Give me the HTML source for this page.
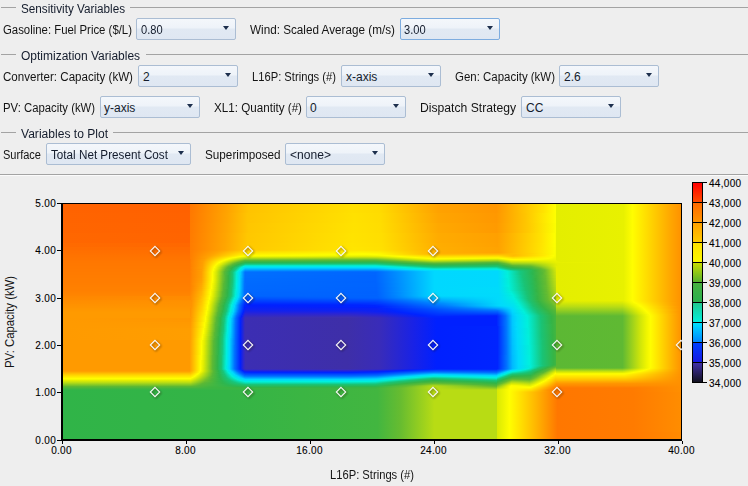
<!DOCTYPE html><html><head><meta charset="utf-8"><style>
html,body{margin:0;padding:0;width:748px;height:486px;overflow:hidden;background:#eeeeee;font-family:"Liberation Sans", sans-serif;}
.lb{position:absolute;white-space:nowrap;line-height:14px;transform-origin:0 0;}
.gl{position:absolute;height:1px;background:#a3a3a3;}
.cb{position:absolute;box-sizing:border-box;border:1px solid #abbdd3;border-radius:2px;background:linear-gradient(#f4f7fb 0%,#eef3f9 45%,#e1e9f3 50%,#dfe7f2 100%);}
.cb.focus{border-color:#7dacdf;}
.arr{position:absolute;width:0;height:0;border-left:3.5px solid transparent;border-right:3.5px solid transparent;border-top:4.5px solid #1d2f4d;}
.tk{position:absolute;background:#000;}
.tl{position:absolute;white-space:nowrap;font-size:10px;line-height:12px;color:#000;-webkit-text-stroke:0.1px #000;}

</style></head><body>
<div class="gl" style="left:1px;top:7px;width:15px"></div>
<div class="gl" style="left:130px;top:7px;width:618px"></div>
<div class="lb" style="transform:scaleX(0.977);left:21px;top:2px;font-size:12px;color:#141c2c">Sensitivity Variables</div>
<div class="gl" style="left:1px;top:54px;width:15px"></div>
<div class="gl" style="left:146px;top:54px;width:602px"></div>
<div class="lb" style="transform:scaleX(0.999);left:21px;top:49px;font-size:12px;color:#141c2c">Optimization Variables</div>
<div class="gl" style="left:1px;top:132px;width:15px"></div>
<div class="gl" style="left:113px;top:132px;width:635px"></div>
<div class="lb" style="transform:scaleX(1.006);left:21px;top:127px;font-size:12px;color:#141c2c">Variables to Plot</div>
<div class="gl" style="left:0;top:174px;width:748px"></div>
<div style="position:absolute;left:0;top:175px;width:748px;height:1px;background:#fbfbfb"></div>
<div class="lb" style="transform:scaleX(0.948);left:3px;top:23px;font-size:12px;color:#141414">Gasoline: Fuel Price ($/L)</div>
<div class="cb" style="left:136px;top:18px;width:100px;height:22px"></div>
<div class="arr" style="left:223px;top:26px"></div>
<div class="lb" style="transform:scaleX(0.925);left:141px;top:23px;font-size:12px;color:#141c2c">0.80</div>
<div class="lb" style="transform:scaleX(0.976);left:250px;top:23px;font-size:12px;color:#141414">Wind: Scaled Average (m/s)</div>
<div class="cb focus" style="left:400px;top:18px;width:100px;height:22px"></div>
<div class="arr" style="left:487px;top:26px"></div>
<div class="lb" style="transform:scaleX(0.925);left:404px;top:23px;font-size:12px;color:#141c2c">3.00</div>
<div class="lb" style="transform:scaleX(0.965);left:3px;top:70px;font-size:12px;color:#141414">Converter: Capacity (kW)</div>
<div class="cb" style="left:138px;top:65px;width:100px;height:22px"></div>
<div class="arr" style="left:225px;top:73px"></div>
<div class="lb" style="left:143px;top:70px;font-size:12px;color:#141c2c">2</div>
<div class="lb" style="transform:scaleX(0.933);left:252px;top:70px;font-size:12px;color:#141414">L16P: Strings (#)</div>
<div class="cb" style="left:341px;top:65px;width:100px;height:22px"></div>
<div class="arr" style="left:428px;top:73px"></div>
<div class="lb" style="left:346px;top:70px;font-size:12px;color:#141c2c">x-axis</div>
<div class="lb" style="transform:scaleX(0.955);left:455px;top:70px;font-size:12px;color:#141414">Gen: Capacity (kW)</div>
<div class="cb" style="left:559px;top:65px;width:100px;height:22px"></div>
<div class="arr" style="left:646px;top:73px"></div>
<div class="lb" style="left:564px;top:70px;font-size:12px;color:#141c2c">2.6</div>
<div class="lb" style="transform:scaleX(0.943);left:3px;top:101px;font-size:12px;color:#141414">PV: Capacity (kW)</div>
<div class="cb" style="left:100px;top:96px;width:100px;height:22px"></div>
<div class="arr" style="left:187px;top:104px"></div>
<div class="lb" style="left:104px;top:101px;font-size:12px;color:#141c2c">y-axis</div>
<div class="lb" style="transform:scaleX(0.970);left:214px;top:101px;font-size:12px;color:#141414">XL1: Quantity (#)</div>
<div class="cb" style="left:306px;top:96px;width:100px;height:22px"></div>
<div class="arr" style="left:393px;top:104px"></div>
<div class="lb" style="left:310px;top:101px;font-size:12px;color:#141c2c">0</div>
<div class="lb" style="transform:scaleX(1.014);left:420px;top:101px;font-size:12px;color:#141414">Dispatch Strategy</div>
<div class="cb" style="left:521px;top:96px;width:100px;height:22px"></div>
<div class="arr" style="left:608px;top:104px"></div>
<div class="lb" style="left:526px;top:101px;font-size:12px;color:#141c2c">CC</div>
<div class="lb" style="transform:scaleX(0.919);left:3px;top:148px;font-size:12px;color:#141414">Surface</div>
<div class="cb" style="left:46px;top:143px;width:145px;height:22px"></div>
<div class="arr" style="left:178px;top:151px"></div>
<div class="lb" style="transform:scaleX(0.974);left:51px;top:148px;font-size:12px;color:#141c2c">Total Net Present Cost</div>
<div class="lb" style="transform:scaleX(0.977);left:205px;top:148px;font-size:12px;color:#141414">Superimposed</div>
<div class="cb" style="left:285px;top:143px;width:100px;height:22px"></div>
<div class="arr" style="left:372px;top:151px"></div>
<div class="lb" style="transform:scaleX(1.007);left:290px;top:148px;font-size:12px;color:#141c2c">&lt;none&gt;</div>
<svg style="position:absolute;left:61px;top:203px" width="621" height="238" shape-rendering="crispEdges"><defs><linearGradient id="g0" gradientUnits="objectBoundingBox"><stop offset="0.0008" stop-color="#ff6300"/><stop offset="0.2069" stop-color="#ff6100"/><stop offset="0.2085" stop-color="#ff7800"/><stop offset="0.2697" stop-color="#ffa500"/><stop offset="0.3019" stop-color="#ffc300"/><stop offset="0.4694" stop-color="#ffdf00"/><stop offset="0.5129" stop-color="#ffdb00"/><stop offset="0.6079" stop-color="#ffa200"/><stop offset="0.7013" stop-color="#ff9600"/><stop offset="0.7351" stop-color="#ffb900"/><stop offset="0.7770" stop-color="#ffe300"/><stop offset="0.7963" stop-color="#fffe00"/><stop offset="0.7979" stop-color="#e4ee00"/><stop offset="0.9058" stop-color="#e8f100"/><stop offset="0.9203" stop-color="#fffd00"/><stop offset="0.9815" stop-color="#ffa700"/><stop offset="0.9992" stop-color="#ff9100"/></linearGradient><linearGradient id="g1" gradientUnits="objectBoundingBox"><stop offset="0.0008" stop-color="#ff6400"/><stop offset="0.2069" stop-color="#ff6200"/><stop offset="0.2085" stop-color="#ff7900"/><stop offset="0.2681" stop-color="#ffa500"/><stop offset="0.3003" stop-color="#ffc400"/><stop offset="0.4726" stop-color="#ffe100"/><stop offset="0.5145" stop-color="#ffdc00"/><stop offset="0.6079" stop-color="#ffa500"/><stop offset="0.7013" stop-color="#ff9800"/><stop offset="0.7480" stop-color="#ffc500"/><stop offset="0.7963" stop-color="#fefe00"/><stop offset="0.7979" stop-color="#e4ee00"/><stop offset="0.9058" stop-color="#e8f100"/><stop offset="0.9203" stop-color="#fffd00"/><stop offset="0.9815" stop-color="#ffa700"/><stop offset="0.9992" stop-color="#ff9100"/></linearGradient><linearGradient id="g2" gradientUnits="objectBoundingBox"><stop offset="0.0008" stop-color="#ff6500"/><stop offset="0.2069" stop-color="#ff6300"/><stop offset="0.2085" stop-color="#ff7a00"/><stop offset="0.2665" stop-color="#ffa500"/><stop offset="0.3019" stop-color="#ffc600"/><stop offset="0.4710" stop-color="#ffe200"/><stop offset="0.5145" stop-color="#ffdd00"/><stop offset="0.6079" stop-color="#ffa800"/><stop offset="0.7013" stop-color="#ff9a00"/><stop offset="0.7528" stop-color="#ffca00"/><stop offset="0.7963" stop-color="#fcfd00"/><stop offset="0.7979" stop-color="#e4ee00"/><stop offset="0.9058" stop-color="#e8f100"/><stop offset="0.9203" stop-color="#fffd00"/><stop offset="0.9815" stop-color="#ffa700"/><stop offset="0.9992" stop-color="#ff9100"/></linearGradient><linearGradient id="g3" gradientUnits="objectBoundingBox"><stop offset="0.0008" stop-color="#ff6700"/><stop offset="0.2069" stop-color="#ff6400"/><stop offset="0.2085" stop-color="#ff7b00"/><stop offset="0.2649" stop-color="#ffa500"/><stop offset="0.3003" stop-color="#ffc700"/><stop offset="0.4694" stop-color="#ffe300"/><stop offset="0.5161" stop-color="#ffde00"/><stop offset="0.6079" stop-color="#ffab00"/><stop offset="0.7029" stop-color="#ffa000"/><stop offset="0.7738" stop-color="#ffe300"/><stop offset="0.7947" stop-color="#fefe00"/><stop offset="0.7963" stop-color="#fbfc00"/><stop offset="0.7979" stop-color="#e4ee00"/><stop offset="0.9058" stop-color="#e8f100"/><stop offset="0.9203" stop-color="#fffd00"/><stop offset="0.9815" stop-color="#ffa700"/><stop offset="0.9992" stop-color="#ff9100"/></linearGradient><linearGradient id="g4" gradientUnits="objectBoundingBox"><stop offset="0.0008" stop-color="#ff6a00"/><stop offset="0.2069" stop-color="#ff6800"/><stop offset="0.2085" stop-color="#ff7c00"/><stop offset="0.2649" stop-color="#ffa600"/><stop offset="0.3003" stop-color="#ffc800"/><stop offset="0.4694" stop-color="#ffe400"/><stop offset="0.5161" stop-color="#ffdf00"/><stop offset="0.6079" stop-color="#ffad00"/><stop offset="0.7029" stop-color="#ffa100"/><stop offset="0.7738" stop-color="#ffe400"/><stop offset="0.7947" stop-color="#fdfe00"/><stop offset="0.7963" stop-color="#fafc00"/><stop offset="0.7979" stop-color="#e4ee00"/><stop offset="0.9058" stop-color="#e8f100"/><stop offset="0.9203" stop-color="#fffd00"/><stop offset="0.9815" stop-color="#ffa700"/><stop offset="0.9992" stop-color="#ff9100"/></linearGradient><linearGradient id="g5" gradientUnits="objectBoundingBox"><stop offset="0.0008" stop-color="#ff6d00"/><stop offset="0.2069" stop-color="#ff6c00"/><stop offset="0.2085" stop-color="#ff7c00"/><stop offset="0.2633" stop-color="#ffa500"/><stop offset="0.3003" stop-color="#ffc900"/><stop offset="0.4726" stop-color="#ffe500"/><stop offset="0.5161" stop-color="#ffe000"/><stop offset="0.6079" stop-color="#ffae00"/><stop offset="0.7045" stop-color="#ffa300"/><stop offset="0.7721" stop-color="#ffe300"/><stop offset="0.7947" stop-color="#fcfd00"/><stop offset="0.7963" stop-color="#f9fb00"/><stop offset="0.7979" stop-color="#e4ee00"/><stop offset="0.9058" stop-color="#e8f100"/><stop offset="0.9203" stop-color="#fffd00"/><stop offset="0.9815" stop-color="#ffa700"/><stop offset="0.9992" stop-color="#ff9100"/></linearGradient><linearGradient id="g6" gradientUnits="objectBoundingBox"><stop offset="0.0008" stop-color="#ff6f00"/><stop offset="0.2069" stop-color="#ff6e00"/><stop offset="0.2085" stop-color="#ff7d00"/><stop offset="0.2601" stop-color="#ffa500"/><stop offset="0.3003" stop-color="#ffce00"/><stop offset="0.4710" stop-color="#ffe800"/><stop offset="0.5161" stop-color="#ffe300"/><stop offset="0.6079" stop-color="#ffaf00"/><stop offset="0.7045" stop-color="#ffa400"/><stop offset="0.7721" stop-color="#ffe300"/><stop offset="0.7947" stop-color="#fcfd00"/><stop offset="0.7963" stop-color="#f9fb00"/><stop offset="0.7979" stop-color="#e4ee00"/><stop offset="0.9058" stop-color="#e8f100"/><stop offset="0.9203" stop-color="#fffd00"/><stop offset="0.9815" stop-color="#ffa700"/><stop offset="0.9992" stop-color="#ff9100"/></linearGradient><linearGradient id="g7" gradientUnits="objectBoundingBox"><stop offset="0.0008" stop-color="#ff7000"/><stop offset="0.2069" stop-color="#ff6e00"/><stop offset="0.2085" stop-color="#ff7d00"/><stop offset="0.2552" stop-color="#ffa500"/><stop offset="0.3003" stop-color="#ffd900"/><stop offset="0.4807" stop-color="#ffef00"/><stop offset="0.5129" stop-color="#ffea00"/><stop offset="0.6079" stop-color="#ffaf00"/><stop offset="0.7045" stop-color="#ffa400"/><stop offset="0.7738" stop-color="#ffe500"/><stop offset="0.7947" stop-color="#fcfd00"/><stop offset="0.7963" stop-color="#f8fb00"/><stop offset="0.7979" stop-color="#e4ee00"/><stop offset="0.9058" stop-color="#e8f100"/><stop offset="0.9203" stop-color="#fffd00"/><stop offset="0.9815" stop-color="#ffa700"/><stop offset="0.9992" stop-color="#ff9100"/></linearGradient><linearGradient id="g8" gradientUnits="objectBoundingBox"><stop offset="0.0008" stop-color="#ff7000"/><stop offset="0.2069" stop-color="#ff6f00"/><stop offset="0.2085" stop-color="#ff7d00"/><stop offset="0.2520" stop-color="#ffa600"/><stop offset="0.2987" stop-color="#ffe100"/><stop offset="0.4807" stop-color="#fff500"/><stop offset="0.5129" stop-color="#fff000"/><stop offset="0.6047" stop-color="#ffb000"/><stop offset="0.7045" stop-color="#ffa400"/><stop offset="0.7738" stop-color="#ffe500"/><stop offset="0.7947" stop-color="#fcfd00"/><stop offset="0.7963" stop-color="#f8fb00"/><stop offset="0.7979" stop-color="#e4ee00"/><stop offset="0.9058" stop-color="#e8f100"/><stop offset="0.9203" stop-color="#fffd00"/><stop offset="0.9815" stop-color="#ffa700"/><stop offset="0.9992" stop-color="#ff9100"/></linearGradient><linearGradient id="g9" gradientUnits="objectBoundingBox"><stop offset="0.0008" stop-color="#ff7100"/><stop offset="0.2069" stop-color="#ff7000"/><stop offset="0.2085" stop-color="#ff7e00"/><stop offset="0.2472" stop-color="#ffa400"/><stop offset="0.2971" stop-color="#ffe900"/><stop offset="0.4887" stop-color="#fffc00"/><stop offset="0.5129" stop-color="#fff600"/><stop offset="0.6031" stop-color="#ffb100"/><stop offset="0.7077" stop-color="#ffaf00"/><stop offset="0.7576" stop-color="#ffd300"/><stop offset="0.7947" stop-color="#fbfd00"/><stop offset="0.7963" stop-color="#f8fb00"/><stop offset="0.7979" stop-color="#e4ee00"/><stop offset="0.9058" stop-color="#e8f100"/><stop offset="0.9203" stop-color="#fffd00"/><stop offset="0.9815" stop-color="#ffa700"/><stop offset="0.9992" stop-color="#ff9100"/></linearGradient><linearGradient id="g10" gradientUnits="objectBoundingBox"><stop offset="0.0008" stop-color="#ff7200"/><stop offset="0.2069" stop-color="#ff7100"/><stop offset="0.2085" stop-color="#ff7e00"/><stop offset="0.2456" stop-color="#ffa600"/><stop offset="0.2971" stop-color="#fff200"/><stop offset="0.4404" stop-color="#fcfd00"/><stop offset="0.5081" stop-color="#fdfe00"/><stop offset="0.5934" stop-color="#ffbf00"/><stop offset="0.6127" stop-color="#ffbb00"/><stop offset="0.7126" stop-color="#ffbd00"/><stop offset="0.7319" stop-color="#ffbd00"/><stop offset="0.7802" stop-color="#ffec00"/><stop offset="0.7947" stop-color="#fbfd00"/><stop offset="0.7963" stop-color="#f8fb00"/><stop offset="0.7979" stop-color="#e4ee00"/><stop offset="0.9058" stop-color="#e8f100"/><stop offset="0.9203" stop-color="#fffd00"/><stop offset="0.9815" stop-color="#ffa700"/><stop offset="0.9992" stop-color="#ff9100"/></linearGradient><linearGradient id="g11" gradientUnits="objectBoundingBox"><stop offset="0.0008" stop-color="#ff7300"/><stop offset="0.2069" stop-color="#ff7200"/><stop offset="0.2085" stop-color="#ff7e00"/><stop offset="0.2424" stop-color="#ffa500"/><stop offset="0.2955" stop-color="#fffa00"/><stop offset="0.3824" stop-color="#fafc00"/><stop offset="0.4936" stop-color="#f1f600"/><stop offset="0.5113" stop-color="#f6fa00"/><stop offset="0.5258" stop-color="#fffc00"/><stop offset="0.6047" stop-color="#ffcb00"/><stop offset="0.7045" stop-color="#ffd100"/><stop offset="0.7287" stop-color="#ffbb00"/><stop offset="0.7754" stop-color="#ffe700"/><stop offset="0.7931" stop-color="#feff00"/><stop offset="0.7963" stop-color="#f8fa00"/><stop offset="0.7979" stop-color="#e4ee00"/><stop offset="0.9058" stop-color="#e8f100"/><stop offset="0.9203" stop-color="#fffd00"/><stop offset="0.9815" stop-color="#ffa700"/><stop offset="0.9992" stop-color="#ff9100"/></linearGradient><linearGradient id="g12" gradientUnits="objectBoundingBox"><stop offset="0.0008" stop-color="#ff7300"/><stop offset="0.2069" stop-color="#ff7300"/><stop offset="0.2085" stop-color="#ff7e00"/><stop offset="0.2391" stop-color="#ffa500"/><stop offset="0.2890" stop-color="#fffe00"/><stop offset="0.3003" stop-color="#f0f600"/><stop offset="0.4919" stop-color="#deec03"/><stop offset="0.5113" stop-color="#e4ee00"/><stop offset="0.5451" stop-color="#fffd00"/><stop offset="0.6047" stop-color="#ffdc00"/><stop offset="0.7045" stop-color="#ffe300"/><stop offset="0.7271" stop-color="#ffc300"/><stop offset="0.7834" stop-color="#fff400"/><stop offset="0.7931" stop-color="#fcfd00"/><stop offset="0.7963" stop-color="#f6fa00"/><stop offset="0.7979" stop-color="#e4ee00"/><stop offset="0.9058" stop-color="#e8f100"/><stop offset="0.9203" stop-color="#fffd00"/><stop offset="0.9815" stop-color="#ffa700"/><stop offset="0.9992" stop-color="#ff9100"/></linearGradient><linearGradient id="g13" gradientUnits="objectBoundingBox"><stop offset="0.0008" stop-color="#ff7400"/><stop offset="0.2069" stop-color="#ff7400"/><stop offset="0.2085" stop-color="#ff7f00"/><stop offset="0.2343" stop-color="#ffa000"/><stop offset="0.2762" stop-color="#fff800"/><stop offset="0.2810" stop-color="#fcfd00"/><stop offset="0.2939" stop-color="#d8e905"/><stop offset="0.3019" stop-color="#d0e609"/><stop offset="0.4903" stop-color="#bdde12"/><stop offset="0.5097" stop-color="#c2e00f"/><stop offset="0.5483" stop-color="#edf400"/><stop offset="0.5709" stop-color="#fffd00"/><stop offset="0.6047" stop-color="#ffea00"/><stop offset="0.7045" stop-color="#fff300"/><stop offset="0.7287" stop-color="#ffd800"/><stop offset="0.7899" stop-color="#fcfd00"/><stop offset="0.7963" stop-color="#f4f800"/><stop offset="0.7979" stop-color="#e4ee00"/><stop offset="0.9058" stop-color="#e8f100"/><stop offset="0.9203" stop-color="#fffd00"/><stop offset="0.9815" stop-color="#ffa700"/><stop offset="0.9992" stop-color="#ff9100"/></linearGradient><linearGradient id="g14" gradientUnits="objectBoundingBox"><stop offset="0.0008" stop-color="#ff7500"/><stop offset="0.2069" stop-color="#ff7400"/><stop offset="0.2085" stop-color="#ff7f00"/><stop offset="0.2311" stop-color="#ff9c00"/><stop offset="0.2713" stop-color="#fffd00"/><stop offset="0.2842" stop-color="#daea05"/><stop offset="0.2971" stop-color="#acd718"/><stop offset="0.4807" stop-color="#97cf1f"/><stop offset="0.5081" stop-color="#9bd11e"/><stop offset="0.5676" stop-color="#e9f100"/><stop offset="0.5918" stop-color="#fffd00"/><stop offset="0.6111" stop-color="#fffa00"/><stop offset="0.6626" stop-color="#fafc00"/><stop offset="0.7029" stop-color="#f2f700"/><stop offset="0.7110" stop-color="#fffd00"/><stop offset="0.7287" stop-color="#ffe800"/><stop offset="0.7850" stop-color="#fbfd00"/><stop offset="0.7963" stop-color="#f1f600"/><stop offset="0.7979" stop-color="#e4ee00"/><stop offset="0.9058" stop-color="#e8f100"/><stop offset="0.9203" stop-color="#fffd00"/><stop offset="0.9815" stop-color="#ffa700"/><stop offset="0.9992" stop-color="#ff9100"/></linearGradient><linearGradient id="g15" gradientUnits="objectBoundingBox"><stop offset="0.0008" stop-color="#ff7500"/><stop offset="0.2069" stop-color="#ff7500"/><stop offset="0.2101" stop-color="#ff8100"/><stop offset="0.2311" stop-color="#ffa000"/><stop offset="0.2649" stop-color="#fffb00"/><stop offset="0.2681" stop-color="#fafc00"/><stop offset="0.2778" stop-color="#d7e906"/><stop offset="0.2971" stop-color="#82c727"/><stop offset="0.4855" stop-color="#70c02d"/><stop offset="0.5081" stop-color="#73c12c"/><stop offset="0.5757" stop-color="#d5e807"/><stop offset="0.6014" stop-color="#eff500"/><stop offset="0.6916" stop-color="#d2e708"/><stop offset="0.7029" stop-color="#d0e609"/><stop offset="0.7174" stop-color="#f5f900"/><stop offset="0.7238" stop-color="#fffc00"/><stop offset="0.7383" stop-color="#fffb00"/><stop offset="0.7721" stop-color="#f8fb00"/><stop offset="0.7963" stop-color="#eef500"/><stop offset="0.7979" stop-color="#e4ee00"/><stop offset="0.9058" stop-color="#e8f100"/><stop offset="0.9203" stop-color="#fffd00"/><stop offset="0.9815" stop-color="#ffa700"/><stop offset="0.9992" stop-color="#ff9100"/></linearGradient><linearGradient id="g16" gradientUnits="objectBoundingBox"><stop offset="0.0008" stop-color="#ff7600"/><stop offset="0.2069" stop-color="#ff7600"/><stop offset="0.2101" stop-color="#ff8200"/><stop offset="0.2295" stop-color="#ff9e00"/><stop offset="0.2601" stop-color="#fffa00"/><stop offset="0.2633" stop-color="#fafc00"/><stop offset="0.2713" stop-color="#daea05"/><stop offset="0.2890" stop-color="#80c627"/><stop offset="0.2955" stop-color="#5db834"/><stop offset="0.5048" stop-color="#51b739"/><stop offset="0.5306" stop-color="#6dbf2e"/><stop offset="0.5982" stop-color="#cde50a"/><stop offset="0.7029" stop-color="#aad619"/><stop offset="0.7238" stop-color="#ecf300"/><stop offset="0.7319" stop-color="#f1f600"/><stop offset="0.7754" stop-color="#ebf300"/><stop offset="0.7963" stop-color="#ecf300"/><stop offset="0.7995" stop-color="#e4ee00"/><stop offset="0.9058" stop-color="#e8f100"/><stop offset="0.9203" stop-color="#fffd00"/><stop offset="0.9815" stop-color="#ffa700"/><stop offset="0.9992" stop-color="#ff9100"/></linearGradient><linearGradient id="g17" gradientUnits="objectBoundingBox"><stop offset="0.0008" stop-color="#ff7700"/><stop offset="0.2069" stop-color="#ff7700"/><stop offset="0.2101" stop-color="#ff8200"/><stop offset="0.2295" stop-color="#ffa100"/><stop offset="0.2552" stop-color="#fff700"/><stop offset="0.2585" stop-color="#fdfe00"/><stop offset="0.2665" stop-color="#dbea04"/><stop offset="0.2907" stop-color="#56b737"/><stop offset="0.2971" stop-color="#43b63f"/><stop offset="0.5081" stop-color="#3db542"/><stop offset="0.5531" stop-color="#65bb31"/><stop offset="0.5998" stop-color="#a6d51a"/><stop offset="0.7029" stop-color="#7ec528"/><stop offset="0.7254" stop-color="#d7e906"/><stop offset="0.7641" stop-color="#d9ea05"/><stop offset="0.7963" stop-color="#e9f100"/><stop offset="0.8043" stop-color="#e4ee00"/><stop offset="0.9058" stop-color="#e8f100"/><stop offset="0.9203" stop-color="#fffd00"/><stop offset="0.9815" stop-color="#ffa700"/><stop offset="0.9992" stop-color="#ff9100"/></linearGradient><linearGradient id="g18" gradientUnits="objectBoundingBox"><stop offset="0.0008" stop-color="#ff7700"/><stop offset="0.2069" stop-color="#ff7700"/><stop offset="0.2101" stop-color="#ff8300"/><stop offset="0.2279" stop-color="#ff9d00"/><stop offset="0.2536" stop-color="#fffa00"/><stop offset="0.2552" stop-color="#ffff00"/><stop offset="0.2633" stop-color="#d9e905"/><stop offset="0.2842" stop-color="#59b835"/><stop offset="0.2971" stop-color="#2eb54c"/><stop offset="0.5064" stop-color="#2ab854"/><stop offset="0.5354" stop-color="#3db542"/><stop offset="0.5821" stop-color="#64bb31"/><stop offset="0.6014" stop-color="#7ac42a"/><stop offset="0.6965" stop-color="#56b737"/><stop offset="0.7045" stop-color="#5bb834"/><stop offset="0.7254" stop-color="#bbdd13"/><stop offset="0.7609" stop-color="#c3e10f"/><stop offset="0.7963" stop-color="#e7f000"/><stop offset="0.9058" stop-color="#e8f100"/><stop offset="0.9203" stop-color="#fffd00"/><stop offset="0.9815" stop-color="#ffa700"/><stop offset="0.9992" stop-color="#ff9100"/></linearGradient><linearGradient id="g19" gradientUnits="objectBoundingBox"><stop offset="0.0008" stop-color="#ff7800"/><stop offset="0.2069" stop-color="#ff7800"/><stop offset="0.2101" stop-color="#ff8300"/><stop offset="0.2279" stop-color="#ff9e00"/><stop offset="0.2520" stop-color="#fffc00"/><stop offset="0.2568" stop-color="#edf300"/><stop offset="0.2713" stop-color="#93cd21"/><stop offset="0.2794" stop-color="#5bb834"/><stop offset="0.2907" stop-color="#2fb54a"/><stop offset="0.2971" stop-color="#21be67"/><stop offset="0.5081" stop-color="#1ec06b"/><stop offset="0.5548" stop-color="#36b545"/><stop offset="0.6031" stop-color="#54b738"/><stop offset="0.7029" stop-color="#3fb541"/><stop offset="0.7142" stop-color="#60ba32"/><stop offset="0.7271" stop-color="#9ed21d"/><stop offset="0.7576" stop-color="#a8d61a"/><stop offset="0.7979" stop-color="#e4ee00"/><stop offset="0.9058" stop-color="#e8f100"/><stop offset="0.9203" stop-color="#fffd00"/><stop offset="0.9815" stop-color="#ffa700"/><stop offset="0.9992" stop-color="#ff9100"/></linearGradient><linearGradient id="g20" gradientUnits="objectBoundingBox"><stop offset="0.0008" stop-color="#ff7800"/><stop offset="0.2069" stop-color="#ff7800"/><stop offset="0.2101" stop-color="#ff8300"/><stop offset="0.2279" stop-color="#ff9f00"/><stop offset="0.2504" stop-color="#fffc00"/><stop offset="0.2585" stop-color="#d7e906"/><stop offset="0.2762" stop-color="#59b835"/><stop offset="0.2858" stop-color="#30b448"/><stop offset="0.2939" stop-color="#1ac374"/><stop offset="0.2971" stop-color="#13cd8c"/><stop offset="0.5064" stop-color="#11d195"/><stop offset="0.5274" stop-color="#1ac374"/><stop offset="0.5886" stop-color="#36b545"/><stop offset="0.6079" stop-color="#3bb543"/><stop offset="0.7029" stop-color="#2db64f"/><stop offset="0.7206" stop-color="#5fb933"/><stop offset="0.7271" stop-color="#7dc529"/><stop offset="0.7560" stop-color="#8aca24"/><stop offset="0.7995" stop-color="#e4ee00"/><stop offset="0.9058" stop-color="#e8f100"/><stop offset="0.9203" stop-color="#fffd00"/><stop offset="0.9815" stop-color="#ffa700"/><stop offset="0.9992" stop-color="#ff9100"/></linearGradient><linearGradient id="g21" gradientUnits="objectBoundingBox"><stop offset="0.0008" stop-color="#ff7800"/><stop offset="0.2069" stop-color="#ff7800"/><stop offset="0.2101" stop-color="#ff8300"/><stop offset="0.2279" stop-color="#ff9f00"/><stop offset="0.2488" stop-color="#fffc00"/><stop offset="0.2552" stop-color="#deec03"/><stop offset="0.2697" stop-color="#70c02d"/><stop offset="0.2762" stop-color="#4ab63c"/><stop offset="0.2826" stop-color="#2eb54c"/><stop offset="0.2907" stop-color="#16c77f"/><stop offset="0.2955" stop-color="#08e1ba"/><stop offset="0.2971" stop-color="#06e5c4"/><stop offset="0.5064" stop-color="#05e7c9"/><stop offset="0.5580" stop-color="#1ac375"/><stop offset="0.6031" stop-color="#2ab854"/><stop offset="0.7029" stop-color="#23bd62"/><stop offset="0.7126" stop-color="#36b545"/><stop offset="0.7287" stop-color="#5db834"/><stop offset="0.7560" stop-color="#6fc02d"/><stop offset="0.7963" stop-color="#deeb03"/><stop offset="0.8011" stop-color="#e4ee00"/><stop offset="0.9058" stop-color="#e8f100"/><stop offset="0.9203" stop-color="#fffd00"/><stop offset="0.9815" stop-color="#ffa700"/><stop offset="0.9992" stop-color="#ff9100"/></linearGradient><linearGradient id="g22" gradientUnits="objectBoundingBox"><stop offset="0.0008" stop-color="#ff7900"/><stop offset="0.2069" stop-color="#ff7900"/><stop offset="0.2118" stop-color="#ff8600"/><stop offset="0.2279" stop-color="#ffa000"/><stop offset="0.2472" stop-color="#fffb00"/><stop offset="0.2504" stop-color="#f1f600"/><stop offset="0.2568" stop-color="#c6e20e"/><stop offset="0.2697" stop-color="#5bb835"/><stop offset="0.2794" stop-color="#2db64d"/><stop offset="0.2858" stop-color="#19c376"/><stop offset="0.2939" stop-color="#00f0dc"/><stop offset="0.2971" stop-color="#00e6ea"/><stop offset="0.5113" stop-color="#00e9e7"/><stop offset="0.5274" stop-color="#01eed8"/><stop offset="0.5853" stop-color="#19c375"/><stop offset="0.6047" stop-color="#1fbf6a"/><stop offset="0.7029" stop-color="#19c375"/><stop offset="0.7174" stop-color="#32b447"/><stop offset="0.7287" stop-color="#4ab63c"/><stop offset="0.7576" stop-color="#5bb835"/><stop offset="0.7834" stop-color="#aed818"/><stop offset="0.7979" stop-color="#e4ee00"/><stop offset="0.9058" stop-color="#e8f100"/><stop offset="0.9203" stop-color="#fffd00"/><stop offset="0.9815" stop-color="#ffa700"/><stop offset="0.9992" stop-color="#ff9100"/></linearGradient><linearGradient id="g23" gradientUnits="objectBoundingBox"><stop offset="0.0008" stop-color="#ff7900"/><stop offset="0.2069" stop-color="#ff7900"/><stop offset="0.2101" stop-color="#ff8400"/><stop offset="0.2279" stop-color="#ffa100"/><stop offset="0.2456" stop-color="#fff800"/><stop offset="0.2472" stop-color="#feff00"/><stop offset="0.2536" stop-color="#d4e707"/><stop offset="0.2681" stop-color="#59b835"/><stop offset="0.2762" stop-color="#31b448"/><stop offset="0.2842" stop-color="#16c881"/><stop offset="0.2907" stop-color="#01efd9"/><stop offset="0.2955" stop-color="#00ddf8"/><stop offset="0.4163" stop-color="#00d9fd"/><stop offset="0.5113" stop-color="#00dcf9"/><stop offset="0.5531" stop-color="#01eed7"/><stop offset="0.5998" stop-color="#14cb89"/><stop offset="0.7013" stop-color="#0ed6a0"/><stop offset="0.7061" stop-color="#15ca86"/><stop offset="0.7126" stop-color="#1fbf6a"/><stop offset="0.7254" stop-color="#34b446"/><stop offset="0.7576" stop-color="#4cb73b"/><stop offset="0.7689" stop-color="#69bd30"/><stop offset="0.7850" stop-color="#a9d619"/><stop offset="0.7963" stop-color="#d7e906"/><stop offset="0.7979" stop-color="#e4ee00"/><stop offset="0.9058" stop-color="#e8f100"/><stop offset="0.9203" stop-color="#fffd00"/><stop offset="0.9815" stop-color="#ffa700"/><stop offset="0.9992" stop-color="#ff9100"/></linearGradient><linearGradient id="g24" gradientUnits="objectBoundingBox"><stop offset="0.0008" stop-color="#ff7900"/><stop offset="0.2069" stop-color="#ff7900"/><stop offset="0.2101" stop-color="#ff8400"/><stop offset="0.2279" stop-color="#ffa100"/><stop offset="0.2456" stop-color="#fffb00"/><stop offset="0.2488" stop-color="#f0f600"/><stop offset="0.2552" stop-color="#c1e010"/><stop offset="0.2665" stop-color="#5bb834"/><stop offset="0.2746" stop-color="#31b447"/><stop offset="0.2826" stop-color="#16c881"/><stop offset="0.2890" stop-color="#00f0dc"/><stop offset="0.2939" stop-color="#00dcfa"/><stop offset="0.2971" stop-color="#00c5ff"/><stop offset="0.5081" stop-color="#00c3ff"/><stop offset="0.5306" stop-color="#00dbfa"/><stop offset="0.5789" stop-color="#01eed7"/><stop offset="0.6014" stop-color="#09e0b8"/><stop offset="0.7013" stop-color="#05e7c8"/><stop offset="0.7110" stop-color="#12d092"/><stop offset="0.7174" stop-color="#1bc272"/><stop offset="0.7287" stop-color="#29b956"/><stop offset="0.7528" stop-color="#36b545"/><stop offset="0.7721" stop-color="#62ba32"/><stop offset="0.7850" stop-color="#9ed21d"/><stop offset="0.7963" stop-color="#d4e707"/><stop offset="0.7979" stop-color="#e4ee00"/><stop offset="0.9058" stop-color="#e8f100"/><stop offset="0.9203" stop-color="#fffd00"/><stop offset="0.9815" stop-color="#ffa700"/><stop offset="0.9992" stop-color="#ff9100"/></linearGradient><linearGradient id="g25" gradientUnits="objectBoundingBox"><stop offset="0.0008" stop-color="#ff7a00"/><stop offset="0.2069" stop-color="#ff7a00"/><stop offset="0.2118" stop-color="#ff8700"/><stop offset="0.2262" stop-color="#ff9b00"/><stop offset="0.2456" stop-color="#fffe00"/><stop offset="0.2520" stop-color="#d4e707"/><stop offset="0.2649" stop-color="#5fb933"/><stop offset="0.2746" stop-color="#2cb64f"/><stop offset="0.2810" stop-color="#16c881"/><stop offset="0.2874" stop-color="#00efdd"/><stop offset="0.2923" stop-color="#00dafb"/><stop offset="0.2955" stop-color="#00b7ff"/><stop offset="0.2971" stop-color="#00adff"/><stop offset="0.5064" stop-color="#00a5ff"/><stop offset="0.5548" stop-color="#00dbfb"/><stop offset="0.6047" stop-color="#00ede1"/><stop offset="0.7029" stop-color="#00ebe3"/><stop offset="0.7077" stop-color="#03ebd0"/><stop offset="0.7238" stop-color="#19c477"/><stop offset="0.7448" stop-color="#26bb5c"/><stop offset="0.7560" stop-color="#2db64f"/><stop offset="0.7689" stop-color="#4cb73b"/><stop offset="0.7786" stop-color="#6dbf2e"/><stop offset="0.7963" stop-color="#d1e609"/><stop offset="0.7979" stop-color="#e4ee00"/><stop offset="0.9058" stop-color="#e8f100"/><stop offset="0.9203" stop-color="#fffd00"/><stop offset="0.9815" stop-color="#ffa700"/><stop offset="0.9992" stop-color="#ff9100"/></linearGradient><linearGradient id="g26" gradientUnits="objectBoundingBox"><stop offset="0.0008" stop-color="#ff7a00"/><stop offset="0.2069" stop-color="#ff7a00"/><stop offset="0.2118" stop-color="#ff8700"/><stop offset="0.2279" stop-color="#ffa200"/><stop offset="0.2440" stop-color="#fff900"/><stop offset="0.2456" stop-color="#fdfe00"/><stop offset="0.2504" stop-color="#dbea04"/><stop offset="0.2601" stop-color="#84c726"/><stop offset="0.2649" stop-color="#58b836"/><stop offset="0.2729" stop-color="#2db64d"/><stop offset="0.2794" stop-color="#16c77f"/><stop offset="0.2858" stop-color="#00efdd"/><stop offset="0.2907" stop-color="#00dafc"/><stop offset="0.2955" stop-color="#009fff"/><stop offset="0.2971" stop-color="#0094ff"/><stop offset="0.5048" stop-color="#0088ff"/><stop offset="0.5853" stop-color="#00dafc"/><stop offset="0.6143" stop-color="#00dff5"/><stop offset="0.7029" stop-color="#00dff4"/><stop offset="0.7142" stop-color="#01efd9"/><stop offset="0.7287" stop-color="#12d093"/><stop offset="0.7399" stop-color="#1ac273"/><stop offset="0.7560" stop-color="#28ba59"/><stop offset="0.7625" stop-color="#35b446"/><stop offset="0.7786" stop-color="#65bb31"/><stop offset="0.7963" stop-color="#cee50a"/><stop offset="0.7979" stop-color="#e4ee00"/><stop offset="0.9058" stop-color="#e8f100"/><stop offset="0.9203" stop-color="#fffd00"/><stop offset="0.9815" stop-color="#ffa700"/><stop offset="0.9992" stop-color="#ff9100"/></linearGradient><linearGradient id="g27" gradientUnits="objectBoundingBox"><stop offset="0.0008" stop-color="#ff7a00"/><stop offset="0.2069" stop-color="#ff7a00"/><stop offset="0.2101" stop-color="#ff8500"/><stop offset="0.2262" stop-color="#ff9c00"/><stop offset="0.2440" stop-color="#fffb00"/><stop offset="0.2472" stop-color="#eef400"/><stop offset="0.2504" stop-color="#d5e807"/><stop offset="0.2633" stop-color="#5bb834"/><stop offset="0.2713" stop-color="#2fb54b"/><stop offset="0.2778" stop-color="#17c67c"/><stop offset="0.2842" stop-color="#00efdd"/><stop offset="0.2890" stop-color="#00d9fd"/><stop offset="0.2955" stop-color="#0087ff"/><stop offset="0.2971" stop-color="#007cff"/><stop offset="0.4936" stop-color="#006eff"/><stop offset="0.5113" stop-color="#0073ff"/><stop offset="0.6014" stop-color="#00d8ff"/><stop offset="0.7029" stop-color="#00d9fd"/><stop offset="0.7190" stop-color="#01eed8"/><stop offset="0.7399" stop-color="#17c67d"/><stop offset="0.7576" stop-color="#2ab854"/><stop offset="0.7641" stop-color="#39b544"/><stop offset="0.7786" stop-color="#64bb31"/><stop offset="0.7963" stop-color="#cbe40b"/><stop offset="0.7979" stop-color="#e4ee00"/><stop offset="0.9058" stop-color="#e8f100"/><stop offset="0.9203" stop-color="#fffd00"/><stop offset="0.9815" stop-color="#ffa700"/><stop offset="0.9992" stop-color="#ff9100"/></linearGradient><linearGradient id="g28" gradientUnits="objectBoundingBox"><stop offset="0.0008" stop-color="#ff7b00"/><stop offset="0.2069" stop-color="#ff7b00"/><stop offset="0.2118" stop-color="#ff8800"/><stop offset="0.2262" stop-color="#ff9d00"/><stop offset="0.2440" stop-color="#fffd00"/><stop offset="0.2504" stop-color="#d2e708"/><stop offset="0.2633" stop-color="#58b836"/><stop offset="0.2713" stop-color="#2cb750"/><stop offset="0.2762" stop-color="#1ac374"/><stop offset="0.2810" stop-color="#08e1b9"/><stop offset="0.2826" stop-color="#02ecd2"/><stop offset="0.2858" stop-color="#00e4ed"/><stop offset="0.2890" stop-color="#00d0ff"/><stop offset="0.2955" stop-color="#007aff"/><stop offset="0.2971" stop-color="#006fff"/><stop offset="0.5064" stop-color="#0065ff"/><stop offset="0.5451" stop-color="#0092ff"/><stop offset="0.6014" stop-color="#00d8ff"/><stop offset="0.7029" stop-color="#00d9fd"/><stop offset="0.7190" stop-color="#01efda"/><stop offset="0.7399" stop-color="#16c77f"/><stop offset="0.7593" stop-color="#2cb64f"/><stop offset="0.7754" stop-color="#57b836"/><stop offset="0.7818" stop-color="#74c22b"/><stop offset="0.7963" stop-color="#c8e20d"/><stop offset="0.7979" stop-color="#e4ee00"/><stop offset="0.9058" stop-color="#e8f100"/><stop offset="0.9203" stop-color="#fffd00"/><stop offset="0.9815" stop-color="#ffa700"/><stop offset="0.9992" stop-color="#ff9100"/></linearGradient><linearGradient id="g29" gradientUnits="objectBoundingBox"><stop offset="0.0008" stop-color="#ff7c00"/><stop offset="0.2069" stop-color="#ff7c00"/><stop offset="0.2118" stop-color="#ff8800"/><stop offset="0.2262" stop-color="#ff9e00"/><stop offset="0.2440" stop-color="#fffe00"/><stop offset="0.2488" stop-color="#deeb03"/><stop offset="0.2601" stop-color="#73c12c"/><stop offset="0.2649" stop-color="#4db73b"/><stop offset="0.2697" stop-color="#32b447"/><stop offset="0.2762" stop-color="#1ac375"/><stop offset="0.2826" stop-color="#02edd5"/><stop offset="0.2874" stop-color="#00dcf9"/><stop offset="0.2907" stop-color="#00b8ff"/><stop offset="0.2955" stop-color="#0078ff"/><stop offset="0.2971" stop-color="#006eff"/><stop offset="0.5064" stop-color="#0064ff"/><stop offset="0.5451" stop-color="#0091ff"/><stop offset="0.6014" stop-color="#00d8ff"/><stop offset="0.7029" stop-color="#00d9fd"/><stop offset="0.7190" stop-color="#00f0dc"/><stop offset="0.7432" stop-color="#19c477"/><stop offset="0.7576" stop-color="#29b957"/><stop offset="0.7657" stop-color="#3bb543"/><stop offset="0.7802" stop-color="#68bd30"/><stop offset="0.7963" stop-color="#c3e10f"/><stop offset="0.7979" stop-color="#e4ee00"/><stop offset="0.9058" stop-color="#e8f100"/><stop offset="0.9203" stop-color="#fffd00"/><stop offset="0.9815" stop-color="#ffa700"/><stop offset="0.9992" stop-color="#ff9100"/></linearGradient><linearGradient id="g30" gradientUnits="objectBoundingBox"><stop offset="0.0008" stop-color="#ff7d00"/><stop offset="0.2069" stop-color="#ff7d00"/><stop offset="0.2118" stop-color="#ff8900"/><stop offset="0.2262" stop-color="#ffa000"/><stop offset="0.2440" stop-color="#ffff00"/><stop offset="0.2488" stop-color="#dceb04"/><stop offset="0.2601" stop-color="#71c02d"/><stop offset="0.2649" stop-color="#4cb73b"/><stop offset="0.2697" stop-color="#31b447"/><stop offset="0.2762" stop-color="#19c376"/><stop offset="0.2826" stop-color="#01eed7"/><stop offset="0.2874" stop-color="#00dbfb"/><stop offset="0.2939" stop-color="#008bff"/><stop offset="0.2955" stop-color="#0075ff"/><stop offset="0.2971" stop-color="#006cff"/><stop offset="0.5064" stop-color="#0064ff"/><stop offset="0.5354" stop-color="#0084ff"/><stop offset="0.6014" stop-color="#00d8ff"/><stop offset="0.7029" stop-color="#00d9fd"/><stop offset="0.7206" stop-color="#01eed7"/><stop offset="0.7448" stop-color="#19c375"/><stop offset="0.7576" stop-color="#28ba59"/><stop offset="0.7641" stop-color="#35b446"/><stop offset="0.7802" stop-color="#65bc31"/><stop offset="0.7963" stop-color="#bedf11"/><stop offset="0.7979" stop-color="#e4ee00"/><stop offset="0.9058" stop-color="#e8f100"/><stop offset="0.9203" stop-color="#fffd00"/><stop offset="0.9815" stop-color="#ffa700"/><stop offset="0.9992" stop-color="#ff9100"/></linearGradient><linearGradient id="g31" gradientUnits="objectBoundingBox"><stop offset="0.0008" stop-color="#ff7d00"/><stop offset="0.2069" stop-color="#ff7d00"/><stop offset="0.2118" stop-color="#ff8a00"/><stop offset="0.2262" stop-color="#ffa200"/><stop offset="0.2424" stop-color="#fff900"/><stop offset="0.2440" stop-color="#fcfd00"/><stop offset="0.2488" stop-color="#d9ea05"/><stop offset="0.2601" stop-color="#6ebf2e"/><stop offset="0.2633" stop-color="#54b738"/><stop offset="0.2697" stop-color="#30b448"/><stop offset="0.2762" stop-color="#18c478"/><stop offset="0.2826" stop-color="#00efda"/><stop offset="0.2874" stop-color="#00dafc"/><stop offset="0.2955" stop-color="#0074ff"/><stop offset="0.2971" stop-color="#006bff"/><stop offset="0.5064" stop-color="#0063ff"/><stop offset="0.5483" stop-color="#0094ff"/><stop offset="0.6014" stop-color="#00d8ff"/><stop offset="0.7029" stop-color="#00d9fd"/><stop offset="0.7206" stop-color="#01eed8"/><stop offset="0.7448" stop-color="#19c477"/><stop offset="0.7576" stop-color="#27ba5a"/><stop offset="0.7657" stop-color="#38b544"/><stop offset="0.7802" stop-color="#63bb31"/><stop offset="0.7963" stop-color="#bbdd12"/><stop offset="0.7979" stop-color="#e4ee00"/><stop offset="0.9058" stop-color="#e8f100"/><stop offset="0.9203" stop-color="#fffd00"/><stop offset="0.9815" stop-color="#ffa700"/><stop offset="0.9992" stop-color="#ff9100"/></linearGradient><linearGradient id="g32" gradientUnits="objectBoundingBox"><stop offset="0.0008" stop-color="#ff7e00"/><stop offset="0.2069" stop-color="#ff7e00"/><stop offset="0.2118" stop-color="#ff8b00"/><stop offset="0.2262" stop-color="#ffa600"/><stop offset="0.2424" stop-color="#fffb00"/><stop offset="0.2456" stop-color="#eef400"/><stop offset="0.2488" stop-color="#d6e807"/><stop offset="0.2617" stop-color="#5bb834"/><stop offset="0.2697" stop-color="#2fb54a"/><stop offset="0.2762" stop-color="#17c57b"/><stop offset="0.2826" stop-color="#00f0dd"/><stop offset="0.2874" stop-color="#00dafd"/><stop offset="0.2955" stop-color="#0072ff"/><stop offset="0.2987" stop-color="#006aff"/><stop offset="0.5081" stop-color="#0064ff"/><stop offset="0.5419" stop-color="#008bff"/><stop offset="0.6014" stop-color="#00d8ff"/><stop offset="0.7029" stop-color="#00d9fd"/><stop offset="0.7206" stop-color="#00efda"/><stop offset="0.7464" stop-color="#1ac375"/><stop offset="0.7593" stop-color="#29b855"/><stop offset="0.7673" stop-color="#3cb543"/><stop offset="0.7802" stop-color="#62ba32"/><stop offset="0.7963" stop-color="#b8dc14"/><stop offset="0.7979" stop-color="#e4ee00"/><stop offset="0.9058" stop-color="#e8f100"/><stop offset="0.9203" stop-color="#fffd00"/><stop offset="0.9815" stop-color="#ffa700"/><stop offset="0.9992" stop-color="#ff9100"/></linearGradient><linearGradient id="g33" gradientUnits="objectBoundingBox"><stop offset="0.0008" stop-color="#ff7f00"/><stop offset="0.2069" stop-color="#ff7f00"/><stop offset="0.2262" stop-color="#ffa900"/><stop offset="0.2424" stop-color="#fffd00"/><stop offset="0.2488" stop-color="#d2e708"/><stop offset="0.2617" stop-color="#59b835"/><stop offset="0.2697" stop-color="#2eb54c"/><stop offset="0.2762" stop-color="#16c77f"/><stop offset="0.2826" stop-color="#00efde"/><stop offset="0.2874" stop-color="#00d9fe"/><stop offset="0.2955" stop-color="#0071ff"/><stop offset="0.2987" stop-color="#0069ff"/><stop offset="0.5081" stop-color="#0064ff"/><stop offset="0.5467" stop-color="#0091ff"/><stop offset="0.6014" stop-color="#00d8ff"/><stop offset="0.7029" stop-color="#00d9fd"/><stop offset="0.7206" stop-color="#00f0dc"/><stop offset="0.7464" stop-color="#19c376"/><stop offset="0.7576" stop-color="#26bb5c"/><stop offset="0.7657" stop-color="#36b545"/><stop offset="0.7818" stop-color="#68bd30"/><stop offset="0.7963" stop-color="#b5db15"/><stop offset="0.7979" stop-color="#e4ee00"/><stop offset="0.9058" stop-color="#e8f100"/><stop offset="0.9203" stop-color="#fffd00"/><stop offset="0.9815" stop-color="#ffa700"/><stop offset="0.9992" stop-color="#ff9100"/></linearGradient><linearGradient id="g34" gradientUnits="objectBoundingBox"><stop offset="0.0008" stop-color="#ff8000"/><stop offset="0.2069" stop-color="#ff8000"/><stop offset="0.2262" stop-color="#ffac00"/><stop offset="0.2424" stop-color="#fefe00"/><stop offset="0.2472" stop-color="#dceb04"/><stop offset="0.2617" stop-color="#57b836"/><stop offset="0.2697" stop-color="#2db64f"/><stop offset="0.2746" stop-color="#1bc271"/><stop offset="0.2778" stop-color="#10d39b"/><stop offset="0.2826" stop-color="#00eedf"/><stop offset="0.2874" stop-color="#00d8ff"/><stop offset="0.2955" stop-color="#0070ff"/><stop offset="0.2987" stop-color="#0069ff"/><stop offset="0.5081" stop-color="#0063ff"/><stop offset="0.5403" stop-color="#0088ff"/><stop offset="0.6014" stop-color="#00d8ff"/><stop offset="0.7045" stop-color="#00dbfb"/><stop offset="0.7222" stop-color="#01eed6"/><stop offset="0.7480" stop-color="#1ac374"/><stop offset="0.7593" stop-color="#28b958"/><stop offset="0.7673" stop-color="#3ab544"/><stop offset="0.7818" stop-color="#66bc30"/><stop offset="0.7963" stop-color="#b1d916"/><stop offset="0.7979" stop-color="#e4ee00"/><stop offset="0.9058" stop-color="#e8f100"/><stop offset="0.9203" stop-color="#fffd00"/><stop offset="0.9815" stop-color="#ffa700"/><stop offset="0.9992" stop-color="#ff9100"/></linearGradient><linearGradient id="g35" gradientUnits="objectBoundingBox"><stop offset="0.0008" stop-color="#ff8000"/><stop offset="0.2069" stop-color="#ff8000"/><stop offset="0.2262" stop-color="#ffaf00"/><stop offset="0.2407" stop-color="#fffa00"/><stop offset="0.2440" stop-color="#f0f600"/><stop offset="0.2488" stop-color="#cbe40b"/><stop offset="0.2617" stop-color="#55b737"/><stop offset="0.2681" stop-color="#32b447"/><stop offset="0.2746" stop-color="#1ac273"/><stop offset="0.2810" stop-color="#03eace"/><stop offset="0.2826" stop-color="#00ede1"/><stop offset="0.2874" stop-color="#00d6ff"/><stop offset="0.2955" stop-color="#006fff"/><stop offset="0.2987" stop-color="#0068ff"/><stop offset="0.5081" stop-color="#0063ff"/><stop offset="0.5435" stop-color="#008cff"/><stop offset="0.6014" stop-color="#00d8ff"/><stop offset="0.7045" stop-color="#00dbfb"/><stop offset="0.7222" stop-color="#01eed8"/><stop offset="0.7480" stop-color="#19c375"/><stop offset="0.7593" stop-color="#27ba59"/><stop offset="0.7657" stop-color="#34b446"/><stop offset="0.7818" stop-color="#64bb31"/><stop offset="0.7963" stop-color="#add818"/><stop offset="0.7979" stop-color="#e4ee00"/><stop offset="0.9058" stop-color="#e8f100"/><stop offset="0.9203" stop-color="#fffd00"/><stop offset="0.9815" stop-color="#ffa700"/><stop offset="0.9992" stop-color="#ff9100"/></linearGradient><linearGradient id="g36" gradientUnits="objectBoundingBox"><stop offset="0.0008" stop-color="#ff8100"/><stop offset="0.2069" stop-color="#ff8100"/><stop offset="0.2262" stop-color="#ffb300"/><stop offset="0.2407" stop-color="#fffd00"/><stop offset="0.2456" stop-color="#e2ed01"/><stop offset="0.2568" stop-color="#7cc429"/><stop offset="0.2601" stop-color="#5db834"/><stop offset="0.2681" stop-color="#31b448"/><stop offset="0.2746" stop-color="#19c375"/><stop offset="0.2810" stop-color="#03ebd1"/><stop offset="0.2842" stop-color="#00e5ec"/><stop offset="0.2874" stop-color="#00d4ff"/><stop offset="0.2955" stop-color="#006eff"/><stop offset="0.2987" stop-color="#0067ff"/><stop offset="0.5081" stop-color="#0062ff"/><stop offset="0.5628" stop-color="#00a6ff"/><stop offset="0.6014" stop-color="#00d8ff"/><stop offset="0.7045" stop-color="#00dbfb"/><stop offset="0.7238" stop-color="#01efd9"/><stop offset="0.7496" stop-color="#1ac374"/><stop offset="0.7593" stop-color="#27ba5b"/><stop offset="0.7657" stop-color="#33b446"/><stop offset="0.7818" stop-color="#62ba32"/><stop offset="0.7963" stop-color="#aad619"/><stop offset="0.7979" stop-color="#e4ee00"/><stop offset="0.9058" stop-color="#e8f100"/><stop offset="0.9203" stop-color="#fffd00"/><stop offset="0.9815" stop-color="#ffa700"/><stop offset="0.9992" stop-color="#ff9100"/></linearGradient><linearGradient id="g37" gradientUnits="objectBoundingBox"><stop offset="0.0008" stop-color="#ff8200"/><stop offset="0.2069" stop-color="#ff8200"/><stop offset="0.2262" stop-color="#ffb400"/><stop offset="0.2407" stop-color="#fffe00"/><stop offset="0.2472" stop-color="#d3e708"/><stop offset="0.2601" stop-color="#5bb834"/><stop offset="0.2681" stop-color="#30b448"/><stop offset="0.2746" stop-color="#19c376"/><stop offset="0.2810" stop-color="#02ecd3"/><stop offset="0.2842" stop-color="#00e4ed"/><stop offset="0.2874" stop-color="#00d3ff"/><stop offset="0.2955" stop-color="#006dff"/><stop offset="0.2987" stop-color="#0066ff"/><stop offset="0.5081" stop-color="#0062ff"/><stop offset="0.5403" stop-color="#0087ff"/><stop offset="0.6014" stop-color="#00d8ff"/><stop offset="0.7045" stop-color="#00dbfb"/><stop offset="0.7254" stop-color="#01eed7"/><stop offset="0.7496" stop-color="#19c375"/><stop offset="0.7593" stop-color="#26ba5b"/><stop offset="0.7673" stop-color="#37b545"/><stop offset="0.7834" stop-color="#69bd2f"/><stop offset="0.7963" stop-color="#a8d61a"/><stop offset="0.7979" stop-color="#e4ee00"/><stop offset="0.9058" stop-color="#e8f100"/><stop offset="0.9203" stop-color="#fffd00"/><stop offset="0.9815" stop-color="#ffa700"/><stop offset="0.9992" stop-color="#ff9100"/></linearGradient><linearGradient id="g38" gradientUnits="objectBoundingBox"><stop offset="0.0008" stop-color="#ff8300"/><stop offset="0.2069" stop-color="#ff8300"/><stop offset="0.2262" stop-color="#ffb600"/><stop offset="0.2407" stop-color="#ffff00"/><stop offset="0.2456" stop-color="#deeb03"/><stop offset="0.2552" stop-color="#88c925"/><stop offset="0.2601" stop-color="#5ab835"/><stop offset="0.2681" stop-color="#2fb449"/><stop offset="0.2746" stop-color="#19c477"/><stop offset="0.2810" stop-color="#02edd5"/><stop offset="0.2858" stop-color="#00ddf8"/><stop offset="0.2890" stop-color="#00bdff"/><stop offset="0.2955" stop-color="#006dff"/><stop offset="0.2987" stop-color="#0066ff"/><stop offset="0.5081" stop-color="#0062ff"/><stop offset="0.5419" stop-color="#0089ff"/><stop offset="0.6014" stop-color="#00d8ff"/><stop offset="0.7045" stop-color="#00dafb"/><stop offset="0.7254" stop-color="#00f0dc"/><stop offset="0.7496" stop-color="#19c376"/><stop offset="0.7609" stop-color="#29b956"/><stop offset="0.7689" stop-color="#3bb543"/><stop offset="0.7834" stop-color="#68bd30"/><stop offset="0.7963" stop-color="#a6d51a"/><stop offset="0.7979" stop-color="#e4ee00"/><stop offset="0.9058" stop-color="#e8f100"/><stop offset="0.9203" stop-color="#fffd00"/><stop offset="0.9815" stop-color="#ffa700"/><stop offset="0.9992" stop-color="#ff9100"/></linearGradient><linearGradient id="g39" gradientUnits="objectBoundingBox"><stop offset="0.0008" stop-color="#ff8400"/><stop offset="0.2069" stop-color="#ff8400"/><stop offset="0.2262" stop-color="#ffb800"/><stop offset="0.2407" stop-color="#fdfe00"/><stop offset="0.2456" stop-color="#dceb04"/><stop offset="0.2601" stop-color="#59b835"/><stop offset="0.2681" stop-color="#2fb54b"/><stop offset="0.2746" stop-color="#18c478"/><stop offset="0.2810" stop-color="#01edd6"/><stop offset="0.2858" stop-color="#00dcf9"/><stop offset="0.2890" stop-color="#00bcff"/><stop offset="0.2955" stop-color="#006cff"/><stop offset="0.2987" stop-color="#0065ff"/><stop offset="0.5097" stop-color="#0063ff"/><stop offset="0.5515" stop-color="#0096ff"/><stop offset="0.6014" stop-color="#00d8ff"/><stop offset="0.7045" stop-color="#00dafc"/><stop offset="0.7271" stop-color="#00f0db"/><stop offset="0.7496" stop-color="#19c477"/><stop offset="0.7609" stop-color="#29b957"/><stop offset="0.7689" stop-color="#3bb543"/><stop offset="0.7818" stop-color="#5fb933"/><stop offset="0.7963" stop-color="#a4d41b"/><stop offset="0.7979" stop-color="#e4ee00"/><stop offset="0.9058" stop-color="#e8f100"/><stop offset="0.9203" stop-color="#fffd00"/><stop offset="0.9815" stop-color="#ffa700"/><stop offset="0.9992" stop-color="#ff9100"/></linearGradient><linearGradient id="g40" gradientUnits="objectBoundingBox"><stop offset="0.0008" stop-color="#ff8500"/><stop offset="0.2069" stop-color="#ff8500"/><stop offset="0.2262" stop-color="#ffb900"/><stop offset="0.2391" stop-color="#fffa00"/><stop offset="0.2407" stop-color="#fcfd00"/><stop offset="0.2456" stop-color="#daea04"/><stop offset="0.2601" stop-color="#58b836"/><stop offset="0.2681" stop-color="#2eb54c"/><stop offset="0.2746" stop-color="#18c57a"/><stop offset="0.2810" stop-color="#01eed8"/><stop offset="0.2858" stop-color="#00dcf9"/><stop offset="0.2890" stop-color="#00bbff"/><stop offset="0.2955" stop-color="#006cff"/><stop offset="0.2987" stop-color="#0065ff"/><stop offset="0.5081" stop-color="#0062ff"/><stop offset="0.5386" stop-color="#0084ff"/><stop offset="0.6014" stop-color="#00d8ff"/><stop offset="0.7045" stop-color="#00dafc"/><stop offset="0.7287" stop-color="#01eed8"/><stop offset="0.7512" stop-color="#1ac374"/><stop offset="0.7673" stop-color="#36b545"/><stop offset="0.7834" stop-color="#66bc31"/><stop offset="0.7963" stop-color="#a2d41c"/><stop offset="0.7979" stop-color="#e4ee00"/><stop offset="0.9058" stop-color="#e8f100"/><stop offset="0.9203" stop-color="#fffd00"/><stop offset="0.9815" stop-color="#ffa700"/><stop offset="0.9992" stop-color="#ff9100"/></linearGradient><linearGradient id="g41" gradientUnits="objectBoundingBox"><stop offset="0.0008" stop-color="#ff8700"/><stop offset="0.2085" stop-color="#ff8b00"/><stop offset="0.2214" stop-color="#ffac00"/><stop offset="0.2295" stop-color="#ffcb00"/><stop offset="0.2391" stop-color="#fffb00"/><stop offset="0.2424" stop-color="#eff500"/><stop offset="0.2472" stop-color="#cae40c"/><stop offset="0.2601" stop-color="#56b737"/><stop offset="0.2681" stop-color="#2db64e"/><stop offset="0.2746" stop-color="#16c780"/><stop offset="0.2810" stop-color="#00efdd"/><stop offset="0.2858" stop-color="#00dafc"/><stop offset="0.2955" stop-color="#0068ff"/><stop offset="0.2987" stop-color="#0061ff"/><stop offset="0.5097" stop-color="#0063ff"/><stop offset="0.5419" stop-color="#0086ff"/><stop offset="0.6014" stop-color="#00d2ff"/><stop offset="0.7045" stop-color="#00dafc"/><stop offset="0.7287" stop-color="#00f0dc"/><stop offset="0.7512" stop-color="#19c375"/><stop offset="0.7673" stop-color="#35b446"/><stop offset="0.7834" stop-color="#65bb31"/><stop offset="0.7963" stop-color="#a1d31c"/><stop offset="0.7979" stop-color="#e4ee00"/><stop offset="0.9058" stop-color="#e8f100"/><stop offset="0.9203" stop-color="#fffd00"/><stop offset="0.9815" stop-color="#ffa700"/><stop offset="0.9992" stop-color="#ff9100"/></linearGradient><linearGradient id="g42" gradientUnits="objectBoundingBox"><stop offset="0.0008" stop-color="#ff8800"/><stop offset="0.2085" stop-color="#ff8b00"/><stop offset="0.2246" stop-color="#ffb700"/><stop offset="0.2391" stop-color="#fffd00"/><stop offset="0.2440" stop-color="#e1ed01"/><stop offset="0.2552" stop-color="#7bc429"/><stop offset="0.2585" stop-color="#5cb834"/><stop offset="0.2665" stop-color="#30b448"/><stop offset="0.2729" stop-color="#19c375"/><stop offset="0.2794" stop-color="#02ecd2"/><stop offset="0.2826" stop-color="#00e5ec"/><stop offset="0.2858" stop-color="#00d4ff"/><stop offset="0.2939" stop-color="#006eff"/><stop offset="0.2971" stop-color="#0059ff"/><stop offset="0.5113" stop-color="#0063ff"/><stop offset="0.5483" stop-color="#008aff"/><stop offset="0.6014" stop-color="#00c7ff"/><stop offset="0.7045" stop-color="#00dafc"/><stop offset="0.7287" stop-color="#00eedf"/><stop offset="0.7448" stop-color="#11d094"/><stop offset="0.7528" stop-color="#1bc272"/><stop offset="0.7673" stop-color="#35b446"/><stop offset="0.7834" stop-color="#64bb31"/><stop offset="0.7963" stop-color="#9fd21d"/><stop offset="0.7979" stop-color="#e4ee00"/><stop offset="0.9058" stop-color="#e8f100"/><stop offset="0.9203" stop-color="#fffd00"/><stop offset="0.9815" stop-color="#ffa700"/><stop offset="0.9992" stop-color="#ff9100"/></linearGradient><linearGradient id="g43" gradientUnits="objectBoundingBox"><stop offset="0.0008" stop-color="#ff8900"/><stop offset="0.2085" stop-color="#ff8c00"/><stop offset="0.2246" stop-color="#ffb900"/><stop offset="0.2391" stop-color="#ffff00"/><stop offset="0.2440" stop-color="#ddeb03"/><stop offset="0.2536" stop-color="#86c826"/><stop offset="0.2585" stop-color="#59b835"/><stop offset="0.2665" stop-color="#2eb54c"/><stop offset="0.2729" stop-color="#17c67d"/><stop offset="0.2794" stop-color="#00f0dc"/><stop offset="0.2842" stop-color="#00dafc"/><stop offset="0.2939" stop-color="#0066ff"/><stop offset="0.2971" stop-color="#0052ff"/><stop offset="0.5113" stop-color="#005fff"/><stop offset="0.5499" stop-color="#0083ff"/><stop offset="0.6047" stop-color="#00bdff"/><stop offset="0.7061" stop-color="#00dbfb"/><stop offset="0.7303" stop-color="#00efdd"/><stop offset="0.7512" stop-color="#18c477"/><stop offset="0.7673" stop-color="#34b446"/><stop offset="0.7834" stop-color="#62bb32"/><stop offset="0.7963" stop-color="#9dd11d"/><stop offset="0.7979" stop-color="#e4ee00"/><stop offset="0.9058" stop-color="#e8f100"/><stop offset="0.9203" stop-color="#fffd00"/><stop offset="0.9815" stop-color="#ffa700"/><stop offset="0.9992" stop-color="#ff9100"/></linearGradient><linearGradient id="g44" gradientUnits="objectBoundingBox"><stop offset="0.0008" stop-color="#ff8a00"/><stop offset="0.2085" stop-color="#ff8c00"/><stop offset="0.2214" stop-color="#ffb000"/><stop offset="0.2295" stop-color="#ffd100"/><stop offset="0.2391" stop-color="#fcfd00"/><stop offset="0.2440" stop-color="#daea05"/><stop offset="0.2585" stop-color="#56b737"/><stop offset="0.2649" stop-color="#32b447"/><stop offset="0.2713" stop-color="#1ac374"/><stop offset="0.2778" stop-color="#03ebd0"/><stop offset="0.2810" stop-color="#00e5ec"/><stop offset="0.2842" stop-color="#00d4ff"/><stop offset="0.2923" stop-color="#006dff"/><stop offset="0.2955" stop-color="#0051ff"/><stop offset="0.2987" stop-color="#004aff"/><stop offset="0.5113" stop-color="#0057ff"/><stop offset="0.5596" stop-color="#0082ff"/><stop offset="0.6047" stop-color="#00b2ff"/><stop offset="0.7061" stop-color="#00dbfb"/><stop offset="0.7287" stop-color="#00ebe3"/><stop offset="0.7335" stop-color="#02ecd2"/><stop offset="0.7528" stop-color="#1ac374"/><stop offset="0.7673" stop-color="#34b446"/><stop offset="0.7834" stop-color="#61ba32"/><stop offset="0.7963" stop-color="#9bd11e"/><stop offset="0.7979" stop-color="#e4ee00"/><stop offset="0.9058" stop-color="#e8f100"/><stop offset="0.9203" stop-color="#fffd00"/><stop offset="0.9815" stop-color="#ffa700"/><stop offset="0.9992" stop-color="#ff9100"/></linearGradient><linearGradient id="g45" gradientUnits="objectBoundingBox"><stop offset="0.0008" stop-color="#ff8c00"/><stop offset="0.2101" stop-color="#ff9000"/><stop offset="0.2279" stop-color="#ffc900"/><stop offset="0.2375" stop-color="#fffb00"/><stop offset="0.2407" stop-color="#eff500"/><stop offset="0.2456" stop-color="#c9e30c"/><stop offset="0.2568" stop-color="#5cb834"/><stop offset="0.2649" stop-color="#2fb54a"/><stop offset="0.2713" stop-color="#18c479"/><stop offset="0.2778" stop-color="#00f0db"/><stop offset="0.2826" stop-color="#00dafc"/><stop offset="0.2890" stop-color="#008aff"/><stop offset="0.2923" stop-color="#0065ff"/><stop offset="0.2955" stop-color="#0049ff"/><stop offset="0.2987" stop-color="#0042ff"/><stop offset="0.5097" stop-color="#004eff"/><stop offset="0.5644" stop-color="#007cff"/><stop offset="0.6063" stop-color="#00a8ff"/><stop offset="0.7061" stop-color="#00dafc"/><stop offset="0.7287" stop-color="#00eae5"/><stop offset="0.7335" stop-color="#01eed7"/><stop offset="0.7528" stop-color="#19c376"/><stop offset="0.7689" stop-color="#37b545"/><stop offset="0.7850" stop-color="#65bb31"/><stop offset="0.7963" stop-color="#97cf20"/><stop offset="0.7979" stop-color="#e4ee00"/><stop offset="0.9058" stop-color="#e8f100"/><stop offset="0.9203" stop-color="#fffd00"/><stop offset="0.9815" stop-color="#ffa700"/><stop offset="0.9992" stop-color="#ff9100"/></linearGradient><linearGradient id="g46" gradientUnits="objectBoundingBox"><stop offset="0.0008" stop-color="#ff8d00"/><stop offset="0.2101" stop-color="#ff9100"/><stop offset="0.2262" stop-color="#ffc300"/><stop offset="0.2375" stop-color="#fffd00"/><stop offset="0.2440" stop-color="#d2e708"/><stop offset="0.2568" stop-color="#59b836"/><stop offset="0.2649" stop-color="#2db64e"/><stop offset="0.2713" stop-color="#15c983"/><stop offset="0.2762" stop-color="#04e9cd"/><stop offset="0.2778" stop-color="#00ede0"/><stop offset="0.2826" stop-color="#00d5ff"/><stop offset="0.2907" stop-color="#006cff"/><stop offset="0.2955" stop-color="#0042ff"/><stop offset="0.2987" stop-color="#003bff"/><stop offset="0.5097" stop-color="#0046ff"/><stop offset="0.5757" stop-color="#007dff"/><stop offset="0.6079" stop-color="#009eff"/><stop offset="0.7077" stop-color="#00dbfb"/><stop offset="0.7287" stop-color="#00e8e7"/><stop offset="0.7335" stop-color="#00f0dc"/><stop offset="0.7544" stop-color="#1ac375"/><stop offset="0.7689" stop-color="#33b446"/><stop offset="0.7866" stop-color="#65bc31"/><stop offset="0.7963" stop-color="#90cc22"/><stop offset="0.7979" stop-color="#e0ec02"/><stop offset="0.9042" stop-color="#e2ed01"/><stop offset="0.9219" stop-color="#fffd00"/><stop offset="0.9863" stop-color="#ffa000"/><stop offset="0.9992" stop-color="#ff9100"/></linearGradient><linearGradient id="g47" gradientUnits="objectBoundingBox"><stop offset="0.0008" stop-color="#ff8e00"/><stop offset="0.2101" stop-color="#ff9200"/><stop offset="0.2262" stop-color="#ffc500"/><stop offset="0.2375" stop-color="#ffff00"/><stop offset="0.2424" stop-color="#dceb03"/><stop offset="0.2520" stop-color="#82c727"/><stop offset="0.2568" stop-color="#56b737"/><stop offset="0.2633" stop-color="#31b447"/><stop offset="0.2697" stop-color="#19c376"/><stop offset="0.2762" stop-color="#01eed8"/><stop offset="0.2810" stop-color="#00dbfb"/><stop offset="0.2858" stop-color="#00a0ff"/><stop offset="0.2907" stop-color="#0065ff"/><stop offset="0.2955" stop-color="#003aff"/><stop offset="0.2987" stop-color="#0033ff"/><stop offset="0.5064" stop-color="#003cff"/><stop offset="0.5837" stop-color="#007bff"/><stop offset="0.6224" stop-color="#009eff"/><stop offset="0.7077" stop-color="#00dbfb"/><stop offset="0.7287" stop-color="#00e7e9"/><stop offset="0.7351" stop-color="#01efda"/><stop offset="0.7560" stop-color="#1ac273"/><stop offset="0.7705" stop-color="#35b446"/><stop offset="0.7882" stop-color="#66bc31"/><stop offset="0.7963" stop-color="#8aca24"/><stop offset="0.7979" stop-color="#d8e906"/><stop offset="0.9042" stop-color="#daea05"/><stop offset="0.9235" stop-color="#fffe00"/><stop offset="0.9799" stop-color="#ffab00"/><stop offset="0.9992" stop-color="#ff9100"/></linearGradient><linearGradient id="g48" gradientUnits="objectBoundingBox"><stop offset="0.0008" stop-color="#ff8f00"/><stop offset="0.2101" stop-color="#ff9200"/><stop offset="0.2279" stop-color="#ffce00"/><stop offset="0.2375" stop-color="#fdfe00"/><stop offset="0.2424" stop-color="#d9e905"/><stop offset="0.2552" stop-color="#5cb834"/><stop offset="0.2633" stop-color="#2fb54b"/><stop offset="0.2697" stop-color="#16c77e"/><stop offset="0.2762" stop-color="#00eedf"/><stop offset="0.2810" stop-color="#00d6ff"/><stop offset="0.2890" stop-color="#006cff"/><stop offset="0.2955" stop-color="#0033ff"/><stop offset="0.2987" stop-color="#002bff"/><stop offset="0.4952" stop-color="#0032ff"/><stop offset="0.5209" stop-color="#003fff"/><stop offset="0.5934" stop-color="#007bff"/><stop offset="0.7093" stop-color="#00dbfb"/><stop offset="0.7287" stop-color="#00e5eb"/><stop offset="0.7367" stop-color="#01eed7"/><stop offset="0.7576" stop-color="#1cc271"/><stop offset="0.7721" stop-color="#35b446"/><stop offset="0.7899" stop-color="#66bc30"/><stop offset="0.7963" stop-color="#83c726"/><stop offset="0.7979" stop-color="#d0e609"/><stop offset="0.9042" stop-color="#d2e708"/><stop offset="0.9203" stop-color="#f4f800"/><stop offset="0.9267" stop-color="#fffe00"/><stop offset="0.9847" stop-color="#ffa400"/><stop offset="0.9992" stop-color="#ff9100"/></linearGradient><linearGradient id="g49" gradientUnits="objectBoundingBox"><stop offset="0.0008" stop-color="#ff9100"/><stop offset="0.2101" stop-color="#ff9300"/><stop offset="0.2262" stop-color="#ffc800"/><stop offset="0.2359" stop-color="#fffa00"/><stop offset="0.2375" stop-color="#fafc00"/><stop offset="0.2407" stop-color="#e3ee00"/><stop offset="0.2488" stop-color="#99d01f"/><stop offset="0.2552" stop-color="#59b835"/><stop offset="0.2633" stop-color="#2cb64f"/><stop offset="0.2681" stop-color="#1ac374"/><stop offset="0.2746" stop-color="#02ecd4"/><stop offset="0.2778" stop-color="#00e3ef"/><stop offset="0.2810" stop-color="#00cdff"/><stop offset="0.2874" stop-color="#0075ff"/><stop offset="0.2955" stop-color="#002bff"/><stop offset="0.2987" stop-color="#0024ff"/><stop offset="0.4791" stop-color="#0028ff"/><stop offset="0.5129" stop-color="#0031ff"/><stop offset="0.6111" stop-color="#0081ff"/><stop offset="0.7077" stop-color="#00dafc"/><stop offset="0.7287" stop-color="#00e4ee"/><stop offset="0.7367" stop-color="#00f0dc"/><stop offset="0.7593" stop-color="#1dc16f"/><stop offset="0.7721" stop-color="#32b447"/><stop offset="0.7899" stop-color="#60ba33"/><stop offset="0.7963" stop-color="#7dc529"/><stop offset="0.7979" stop-color="#c8e20d"/><stop offset="0.9042" stop-color="#cae30c"/><stop offset="0.9203" stop-color="#eff500"/><stop offset="0.9300" stop-color="#fffd00"/><stop offset="0.9863" stop-color="#ffa200"/><stop offset="0.9992" stop-color="#ff9100"/></linearGradient><linearGradient id="g50" gradientUnits="objectBoundingBox"><stop offset="0.0008" stop-color="#ff9200"/><stop offset="0.2101" stop-color="#ff9300"/><stop offset="0.2279" stop-color="#ffd100"/><stop offset="0.2359" stop-color="#fffc00"/><stop offset="0.2407" stop-color="#e1ed02"/><stop offset="0.2520" stop-color="#74c12c"/><stop offset="0.2568" stop-color="#4db73b"/><stop offset="0.2617" stop-color="#31b447"/><stop offset="0.2681" stop-color="#18c477"/><stop offset="0.2746" stop-color="#00f0dc"/><stop offset="0.2794" stop-color="#00d9fd"/><stop offset="0.2874" stop-color="#006eff"/><stop offset="0.2955" stop-color="#0026ff"/><stop offset="0.3003" stop-color="#0220fd"/><stop offset="0.5048" stop-color="#0024ff"/><stop offset="0.6176" stop-color="#007eff"/><stop offset="0.7077" stop-color="#00dafd"/><stop offset="0.7287" stop-color="#00e2f0"/><stop offset="0.7383" stop-color="#01efda"/><stop offset="0.7593" stop-color="#1bc272"/><stop offset="0.7738" stop-color="#33b447"/><stop offset="0.7915" stop-color="#60ba32"/><stop offset="0.7963" stop-color="#76c22b"/><stop offset="0.7979" stop-color="#c0df10"/><stop offset="0.9042" stop-color="#c2e010"/><stop offset="0.9219" stop-color="#edf400"/><stop offset="0.9316" stop-color="#fffe00"/><stop offset="0.9879" stop-color="#ffa000"/><stop offset="0.9992" stop-color="#ff9100"/></linearGradient><linearGradient id="g51" gradientUnits="objectBoundingBox"><stop offset="0.0008" stop-color="#ff9300"/><stop offset="0.2101" stop-color="#ff9400"/><stop offset="0.2279" stop-color="#ffd300"/><stop offset="0.2359" stop-color="#fffd00"/><stop offset="0.2407" stop-color="#deec03"/><stop offset="0.2520" stop-color="#71c02d"/><stop offset="0.2552" stop-color="#55b737"/><stop offset="0.2617" stop-color="#30b449"/><stop offset="0.2681" stop-color="#17c57b"/><stop offset="0.2746" stop-color="#00efde"/><stop offset="0.2794" stop-color="#00d7ff"/><stop offset="0.2874" stop-color="#006cff"/><stop offset="0.2955" stop-color="#0023ff"/><stop offset="0.3035" stop-color="#0520fa"/><stop offset="0.5129" stop-color="#0024ff"/><stop offset="0.6288" stop-color="#007eff"/><stop offset="0.7190" stop-color="#00dbfb"/><stop offset="0.7303" stop-color="#00e3ef"/><stop offset="0.7399" stop-color="#01eed8"/><stop offset="0.7609" stop-color="#1cc170"/><stop offset="0.7754" stop-color="#33b446"/><stop offset="0.7931" stop-color="#61ba32"/><stop offset="0.7963" stop-color="#6fc02d"/><stop offset="0.7979" stop-color="#b8dc14"/><stop offset="0.9042" stop-color="#badd13"/><stop offset="0.9235" stop-color="#ebf200"/><stop offset="0.9332" stop-color="#ffff00"/><stop offset="0.9992" stop-color="#ff9100"/></linearGradient><linearGradient id="g52" gradientUnits="objectBoundingBox"><stop offset="0.0008" stop-color="#ff9400"/><stop offset="0.2101" stop-color="#ff9500"/><stop offset="0.2279" stop-color="#ffd500"/><stop offset="0.2359" stop-color="#ffff00"/><stop offset="0.2407" stop-color="#dceb04"/><stop offset="0.2536" stop-color="#5db834"/><stop offset="0.2617" stop-color="#2fb54b"/><stop offset="0.2681" stop-color="#16c780"/><stop offset="0.2729" stop-color="#04e9cc"/><stop offset="0.2746" stop-color="#00ede0"/><stop offset="0.2794" stop-color="#00d3ff"/><stop offset="0.2874" stop-color="#0069ff"/><stop offset="0.2955" stop-color="#0020ff"/><stop offset="0.2987" stop-color="#0821f7"/><stop offset="0.5081" stop-color="#0320fc"/><stop offset="0.6417" stop-color="#007cff"/><stop offset="0.7045" stop-color="#00bbff"/><stop offset="0.7238" stop-color="#00dafc"/><stop offset="0.7399" stop-color="#00f0dc"/><stop offset="0.7576" stop-color="#15c984"/><stop offset="0.7657" stop-color="#21be65"/><stop offset="0.7770" stop-color="#34b446"/><stop offset="0.7947" stop-color="#62ba32"/><stop offset="0.7963" stop-color="#69bd30"/><stop offset="0.7979" stop-color="#aed818"/><stop offset="0.9042" stop-color="#b1d917"/><stop offset="0.9267" stop-color="#edf400"/><stop offset="0.9364" stop-color="#fffd00"/><stop offset="0.9879" stop-color="#ffa200"/><stop offset="0.9992" stop-color="#ff9100"/></linearGradient><linearGradient id="g53" gradientUnits="objectBoundingBox"><stop offset="0.0008" stop-color="#ff9600"/><stop offset="0.2069" stop-color="#ff9600"/><stop offset="0.2085" stop-color="#ff9100"/><stop offset="0.2262" stop-color="#ffcf00"/><stop offset="0.2359" stop-color="#fdfe00"/><stop offset="0.2407" stop-color="#d9ea05"/><stop offset="0.2536" stop-color="#5bb835"/><stop offset="0.2617" stop-color="#2db64d"/><stop offset="0.2665" stop-color="#1bc272"/><stop offset="0.2697" stop-color="#0fd59e"/><stop offset="0.2729" stop-color="#03ebd1"/><stop offset="0.2746" stop-color="#00ece2"/><stop offset="0.2778" stop-color="#00ddf8"/><stop offset="0.2810" stop-color="#00b9ff"/><stop offset="0.2874" stop-color="#0066ff"/><stop offset="0.2955" stop-color="#0320fc"/><stop offset="0.2971" stop-color="#0c21f3"/><stop offset="0.5064" stop-color="#0821f7"/><stop offset="0.5258" stop-color="#0026ff"/><stop offset="0.6659" stop-color="#0081ff"/><stop offset="0.7045" stop-color="#00a6ff"/><stop offset="0.7254" stop-color="#00dafd"/><stop offset="0.7415" stop-color="#00f0db"/><stop offset="0.7576" stop-color="#14cc8a"/><stop offset="0.7625" stop-color="#1bc273"/><stop offset="0.7786" stop-color="#34b446"/><stop offset="0.7963" stop-color="#62ba32"/><stop offset="0.7979" stop-color="#a4d41b"/><stop offset="0.9042" stop-color="#a7d51a"/><stop offset="0.9283" stop-color="#ebf300"/><stop offset="0.9380" stop-color="#fffd00"/><stop offset="0.9847" stop-color="#ffa900"/><stop offset="0.9992" stop-color="#ff9100"/></linearGradient><linearGradient id="g54" gradientUnits="objectBoundingBox"><stop offset="0.0008" stop-color="#ff9700"/><stop offset="0.2069" stop-color="#ff9700"/><stop offset="0.2085" stop-color="#ff9200"/><stop offset="0.2262" stop-color="#ffd000"/><stop offset="0.2359" stop-color="#fbfd00"/><stop offset="0.2407" stop-color="#d7e906"/><stop offset="0.2536" stop-color="#59b835"/><stop offset="0.2617" stop-color="#2cb64f"/><stop offset="0.2665" stop-color="#1ac374"/><stop offset="0.2729" stop-color="#02edd5"/><stop offset="0.2778" stop-color="#00dbfb"/><stop offset="0.2826" stop-color="#009fff"/><stop offset="0.2874" stop-color="#0063ff"/><stop offset="0.2939" stop-color="#0029ff"/><stop offset="0.2955" stop-color="#0721f8"/><stop offset="0.2987" stop-color="#0f22f0"/><stop offset="0.5081" stop-color="#0a21f5"/><stop offset="0.5290" stop-color="#0025ff"/><stop offset="0.6337" stop-color="#0061ff"/><stop offset="0.6997" stop-color="#0087ff"/><stop offset="0.7093" stop-color="#00a1ff"/><stop offset="0.7271" stop-color="#00dafc"/><stop offset="0.7432" stop-color="#01efd9"/><stop offset="0.7593" stop-color="#14cb87"/><stop offset="0.7657" stop-color="#1ec06d"/><stop offset="0.7802" stop-color="#34b446"/><stop offset="0.7963" stop-color="#5cb834"/><stop offset="0.7979" stop-color="#9bd11e"/><stop offset="0.9042" stop-color="#9dd21d"/><stop offset="0.9283" stop-color="#e7f000"/><stop offset="0.9396" stop-color="#fffe00"/><stop offset="0.9992" stop-color="#ff9100"/></linearGradient><linearGradient id="g55" gradientUnits="objectBoundingBox"><stop offset="0.0008" stop-color="#ff9800"/><stop offset="0.2069" stop-color="#ff9800"/><stop offset="0.2085" stop-color="#ff9200"/><stop offset="0.2279" stop-color="#ffda00"/><stop offset="0.2343" stop-color="#fffb00"/><stop offset="0.2359" stop-color="#f9fc00"/><stop offset="0.2407" stop-color="#d4e807"/><stop offset="0.2536" stop-color="#57b836"/><stop offset="0.2601" stop-color="#32b447"/><stop offset="0.2665" stop-color="#19c376"/><stop offset="0.2729" stop-color="#00efda"/><stop offset="0.2778" stop-color="#00dafd"/><stop offset="0.2858" stop-color="#006fff"/><stop offset="0.2939" stop-color="#0026ff"/><stop offset="0.2971" stop-color="#1222ed"/><stop offset="0.5081" stop-color="#0d21f2"/><stop offset="0.5354" stop-color="#0025ff"/><stop offset="0.6224" stop-color="#0054ff"/><stop offset="0.7029" stop-color="#0076ff"/><stop offset="0.7271" stop-color="#00d9fe"/><stop offset="0.7448" stop-color="#01eed7"/><stop offset="0.7609" stop-color="#15ca85"/><stop offset="0.7673" stop-color="#1ec06c"/><stop offset="0.7834" stop-color="#38b544"/><stop offset="0.7963" stop-color="#58b836"/><stop offset="0.7979" stop-color="#91cd22"/><stop offset="0.9042" stop-color="#94ce21"/><stop offset="0.9316" stop-color="#e9f100"/><stop offset="0.9412" stop-color="#fffe00"/><stop offset="0.9992" stop-color="#ff9100"/></linearGradient><linearGradient id="g56" gradientUnits="objectBoundingBox"><stop offset="0.0008" stop-color="#ff9900"/><stop offset="0.2069" stop-color="#ff9900"/><stop offset="0.2085" stop-color="#ff9300"/><stop offset="0.2279" stop-color="#ffdb00"/><stop offset="0.2343" stop-color="#fffc00"/><stop offset="0.2407" stop-color="#d1e608"/><stop offset="0.2536" stop-color="#55b737"/><stop offset="0.2601" stop-color="#30b448"/><stop offset="0.2665" stop-color="#17c57b"/><stop offset="0.2729" stop-color="#00eede"/><stop offset="0.2778" stop-color="#00d6ff"/><stop offset="0.2858" stop-color="#006bff"/><stop offset="0.2939" stop-color="#0022ff"/><stop offset="0.2971" stop-color="#1822e7"/><stop offset="0.4855" stop-color="#1522ea"/><stop offset="0.5161" stop-color="#0b21f4"/><stop offset="0.5419" stop-color="#0025ff"/><stop offset="0.6159" stop-color="#004aff"/><stop offset="0.7029" stop-color="#0065ff"/><stop offset="0.7174" stop-color="#00a8ff"/><stop offset="0.7271" stop-color="#00d7ff"/><stop offset="0.7448" stop-color="#00f0dc"/><stop offset="0.7609" stop-color="#13cd8c"/><stop offset="0.7673" stop-color="#1cc170"/><stop offset="0.7850" stop-color="#39b544"/><stop offset="0.7963" stop-color="#54b737"/><stop offset="0.7979" stop-color="#87c925"/><stop offset="0.9042" stop-color="#8aca24"/><stop offset="0.9300" stop-color="#e0ec02"/><stop offset="0.9428" stop-color="#fffe00"/><stop offset="0.9895" stop-color="#ffa100"/><stop offset="0.9992" stop-color="#ff9100"/></linearGradient><linearGradient id="g57" gradientUnits="objectBoundingBox"><stop offset="0.0008" stop-color="#ff9a00"/><stop offset="0.2069" stop-color="#ff9a00"/><stop offset="0.2085" stop-color="#ff9300"/><stop offset="0.2295" stop-color="#ffe500"/><stop offset="0.2343" stop-color="#fffe00"/><stop offset="0.2391" stop-color="#dceb03"/><stop offset="0.2488" stop-color="#7ec528"/><stop offset="0.2520" stop-color="#5cb834"/><stop offset="0.2601" stop-color="#2eb54c"/><stop offset="0.2649" stop-color="#1bc271"/><stop offset="0.2681" stop-color="#0fd49d"/><stop offset="0.2713" stop-color="#03ebd0"/><stop offset="0.2729" stop-color="#00ece2"/><stop offset="0.2778" stop-color="#00ceff"/><stop offset="0.2842" stop-color="#0075ff"/><stop offset="0.2923" stop-color="#002aff"/><stop offset="0.2939" stop-color="#0621f9"/><stop offset="0.2955" stop-color="#1722e8"/><stop offset="0.2987" stop-color="#1f23e0"/><stop offset="0.4758" stop-color="#1e23e1"/><stop offset="0.5177" stop-color="#1122ee"/><stop offset="0.5499" stop-color="#0024ff"/><stop offset="0.6111" stop-color="#0042ff"/><stop offset="0.7029" stop-color="#0057ff"/><stop offset="0.7126" stop-color="#0082ff"/><stop offset="0.7271" stop-color="#00d4ff"/><stop offset="0.7464" stop-color="#01efda"/><stop offset="0.7625" stop-color="#14cc8a"/><stop offset="0.7673" stop-color="#1ac374"/><stop offset="0.7866" stop-color="#39b544"/><stop offset="0.7963" stop-color="#51b739"/><stop offset="0.7979" stop-color="#7ec528"/><stop offset="0.9042" stop-color="#81c627"/><stop offset="0.9300" stop-color="#daea04"/><stop offset="0.9444" stop-color="#fffe00"/><stop offset="0.9895" stop-color="#ffa200"/><stop offset="0.9992" stop-color="#ff9100"/></linearGradient><linearGradient id="g58" gradientUnits="objectBoundingBox"><stop offset="0.0008" stop-color="#ff9a00"/><stop offset="0.2069" stop-color="#ff9a00"/><stop offset="0.2085" stop-color="#ff9400"/><stop offset="0.2295" stop-color="#ffe600"/><stop offset="0.2343" stop-color="#feff00"/><stop offset="0.2391" stop-color="#d9ea05"/><stop offset="0.2520" stop-color="#5ab835"/><stop offset="0.2585" stop-color="#34b446"/><stop offset="0.2649" stop-color="#1ac375"/><stop offset="0.2713" stop-color="#01efd9"/><stop offset="0.2762" stop-color="#00dafd"/><stop offset="0.2842" stop-color="#006eff"/><stop offset="0.2923" stop-color="#0024ff"/><stop offset="0.2971" stop-color="#2724d8"/><stop offset="0.4662" stop-color="#2824d6"/><stop offset="0.5145" stop-color="#1b23e4"/><stop offset="0.5612" stop-color="#0024ff"/><stop offset="0.6095" stop-color="#003bff"/><stop offset="0.7029" stop-color="#0049ff"/><stop offset="0.7142" stop-color="#007eff"/><stop offset="0.7271" stop-color="#00d1ff"/><stop offset="0.7464" stop-color="#00efdd"/><stop offset="0.7593" stop-color="#0ed7a3"/><stop offset="0.7689" stop-color="#1ac374"/><stop offset="0.7866" stop-color="#35b446"/><stop offset="0.7963" stop-color="#4db73b"/><stop offset="0.7979" stop-color="#74c12c"/><stop offset="0.9042" stop-color="#77c32b"/><stop offset="0.9283" stop-color="#cfe509"/><stop offset="0.9396" stop-color="#f1f600"/><stop offset="0.9461" stop-color="#fffd00"/><stop offset="0.9847" stop-color="#ffad00"/><stop offset="0.9992" stop-color="#ff9100"/></linearGradient><linearGradient id="g59" gradientUnits="objectBoundingBox"><stop offset="0.0008" stop-color="#ff9a00"/><stop offset="0.2069" stop-color="#ff9a00"/><stop offset="0.2085" stop-color="#ff9400"/><stop offset="0.2295" stop-color="#ffe800"/><stop offset="0.2343" stop-color="#fcfd00"/><stop offset="0.2391" stop-color="#d6e806"/><stop offset="0.2472" stop-color="#87c925"/><stop offset="0.2520" stop-color="#57b836"/><stop offset="0.2585" stop-color="#31b448"/><stop offset="0.2649" stop-color="#18c57a"/><stop offset="0.2713" stop-color="#00eedf"/><stop offset="0.2762" stop-color="#00d4ff"/><stop offset="0.2842" stop-color="#0068ff"/><stop offset="0.2923" stop-color="#0320fc"/><stop offset="0.2955" stop-color="#2624d9"/><stop offset="0.2971" stop-color="#2c26d0"/><stop offset="0.4662" stop-color="#2e27cc"/><stop offset="0.5145" stop-color="#2424db"/><stop offset="0.5709" stop-color="#0023ff"/><stop offset="0.6063" stop-color="#0034ff"/><stop offset="0.7029" stop-color="#003aff"/><stop offset="0.7158" stop-color="#007eff"/><stop offset="0.7271" stop-color="#00ceff"/><stop offset="0.7335" stop-color="#00ddf8"/><stop offset="0.7496" stop-color="#01eed7"/><stop offset="0.7705" stop-color="#1ac374"/><stop offset="0.7882" stop-color="#36b446"/><stop offset="0.7963" stop-color="#4ab63c"/><stop offset="0.7979" stop-color="#6abe2f"/><stop offset="0.9042" stop-color="#6ebf2e"/><stop offset="0.9332" stop-color="#d9ea05"/><stop offset="0.9477" stop-color="#fffd00"/><stop offset="0.9992" stop-color="#ff9100"/></linearGradient><linearGradient id="g60" gradientUnits="objectBoundingBox"><stop offset="0.0008" stop-color="#ff9a00"/><stop offset="0.2069" stop-color="#ff9a00"/><stop offset="0.2085" stop-color="#ff9500"/><stop offset="0.2295" stop-color="#ffe900"/><stop offset="0.2327" stop-color="#fffa00"/><stop offset="0.2343" stop-color="#fafc00"/><stop offset="0.2375" stop-color="#e2ed01"/><stop offset="0.2472" stop-color="#82c727"/><stop offset="0.2520" stop-color="#55b737"/><stop offset="0.2585" stop-color="#2fb54a"/><stop offset="0.2649" stop-color="#16c882"/><stop offset="0.2697" stop-color="#03ebd1"/><stop offset="0.2713" stop-color="#00ece3"/><stop offset="0.2746" stop-color="#00dcf9"/><stop offset="0.2778" stop-color="#00b5ff"/><stop offset="0.2826" stop-color="#0071ff"/><stop offset="0.2907" stop-color="#0026ff"/><stop offset="0.2939" stop-color="#1c23e3"/><stop offset="0.2955" stop-color="#2b26d1"/><stop offset="0.2987" stop-color="#3128c7"/><stop offset="0.4630" stop-color="#342ac1"/><stop offset="0.5145" stop-color="#2b25d2"/><stop offset="0.5805" stop-color="#0023ff"/><stop offset="0.6079" stop-color="#002eff"/><stop offset="0.7013" stop-color="#0027ff"/><stop offset="0.7158" stop-color="#0072ff"/><stop offset="0.7271" stop-color="#00cbff"/><stop offset="0.7335" stop-color="#00dcfa"/><stop offset="0.7496" stop-color="#00f0dc"/><stop offset="0.7721" stop-color="#1ac374"/><stop offset="0.7899" stop-color="#36b545"/><stop offset="0.7963" stop-color="#46b63e"/><stop offset="0.7979" stop-color="#61ba32"/><stop offset="0.9042" stop-color="#64bb31"/><stop offset="0.9332" stop-color="#d4e707"/><stop offset="0.9444" stop-color="#f6f900"/><stop offset="0.9493" stop-color="#fffc00"/><stop offset="0.9879" stop-color="#ffa700"/><stop offset="0.9992" stop-color="#ff9100"/></linearGradient><linearGradient id="g61" gradientUnits="objectBoundingBox"><stop offset="0.0008" stop-color="#ff9a00"/><stop offset="0.2069" stop-color="#ff9a00"/><stop offset="0.2085" stop-color="#ff9500"/><stop offset="0.2311" stop-color="#fff300"/><stop offset="0.2327" stop-color="#fffc00"/><stop offset="0.2375" stop-color="#dfec02"/><stop offset="0.2488" stop-color="#6dbf2e"/><stop offset="0.2520" stop-color="#52b739"/><stop offset="0.2585" stop-color="#2db64e"/><stop offset="0.2633" stop-color="#1ac374"/><stop offset="0.2697" stop-color="#01efd9"/><stop offset="0.2746" stop-color="#00d9fe"/><stop offset="0.2826" stop-color="#006bff"/><stop offset="0.2907" stop-color="#0020ff"/><stop offset="0.2955" stop-color="#3028c9"/><stop offset="0.2971" stop-color="#352bbf"/><stop offset="0.4630" stop-color="#3a2db7"/><stop offset="0.5129" stop-color="#3128c7"/><stop offset="0.5757" stop-color="#0821f8"/><stop offset="0.5950" stop-color="#0026ff"/><stop offset="0.7013" stop-color="#0020ff"/><stop offset="0.7158" stop-color="#006eff"/><stop offset="0.7271" stop-color="#00c9ff"/><stop offset="0.7351" stop-color="#00ddf8"/><stop offset="0.7512" stop-color="#01efd9"/><stop offset="0.7721" stop-color="#19c376"/><stop offset="0.7899" stop-color="#34b446"/><stop offset="0.7963" stop-color="#44b63f"/><stop offset="0.7979" stop-color="#5cb834"/><stop offset="0.9042" stop-color="#5fb933"/><stop offset="0.9332" stop-color="#d1e609"/><stop offset="0.9428" stop-color="#eff500"/><stop offset="0.9493" stop-color="#fffd00"/><stop offset="0.9847" stop-color="#ffaf00"/><stop offset="0.9992" stop-color="#ff9100"/></linearGradient><linearGradient id="g62" gradientUnits="objectBoundingBox"><stop offset="0.0008" stop-color="#ff9a00"/><stop offset="0.2101" stop-color="#ff9a00"/><stop offset="0.2311" stop-color="#fff500"/><stop offset="0.2327" stop-color="#fffe00"/><stop offset="0.2375" stop-color="#dceb04"/><stop offset="0.2504" stop-color="#59b835"/><stop offset="0.2568" stop-color="#32b447"/><stop offset="0.2633" stop-color="#18c478"/><stop offset="0.2697" stop-color="#00eedf"/><stop offset="0.2746" stop-color="#00d3ff"/><stop offset="0.2826" stop-color="#0065ff"/><stop offset="0.2890" stop-color="#0029ff"/><stop offset="0.2907" stop-color="#0821f7"/><stop offset="0.2939" stop-color="#2a25d4"/><stop offset="0.2955" stop-color="#342ac1"/><stop offset="0.2971" stop-color="#3a2db7"/><stop offset="0.4614" stop-color="#3f30ad"/><stop offset="0.5129" stop-color="#362bbe"/><stop offset="0.5628" stop-color="#1922e6"/><stop offset="0.5998" stop-color="#0023ff"/><stop offset="0.7013" stop-color="#0020ff"/><stop offset="0.7158" stop-color="#006eff"/><stop offset="0.7271" stop-color="#00c9ff"/><stop offset="0.7351" stop-color="#00ddf8"/><stop offset="0.7512" stop-color="#01efd9"/><stop offset="0.7721" stop-color="#19c376"/><stop offset="0.7899" stop-color="#34b446"/><stop offset="0.7963" stop-color="#44b63f"/><stop offset="0.7979" stop-color="#5cb834"/><stop offset="0.9042" stop-color="#5fb933"/><stop offset="0.9332" stop-color="#d1e609"/><stop offset="0.9428" stop-color="#eff500"/><stop offset="0.9493" stop-color="#fffd00"/><stop offset="0.9847" stop-color="#ffaf00"/><stop offset="0.9992" stop-color="#ff9100"/></linearGradient><linearGradient id="g63" gradientUnits="objectBoundingBox"><stop offset="0.0008" stop-color="#ff9a00"/><stop offset="0.2085" stop-color="#ff9600"/><stop offset="0.2311" stop-color="#fff600"/><stop offset="0.2327" stop-color="#ffff00"/><stop offset="0.2375" stop-color="#d9ea05"/><stop offset="0.2472" stop-color="#77c32b"/><stop offset="0.2504" stop-color="#57b836"/><stop offset="0.2568" stop-color="#30b448"/><stop offset="0.2633" stop-color="#17c67d"/><stop offset="0.2681" stop-color="#04e9cd"/><stop offset="0.2697" stop-color="#00ede1"/><stop offset="0.2729" stop-color="#00ddf8"/><stop offset="0.2762" stop-color="#00b7ff"/><stop offset="0.2810" stop-color="#0072ff"/><stop offset="0.2890" stop-color="#0026ff"/><stop offset="0.2923" stop-color="#1d23e2"/><stop offset="0.2955" stop-color="#372bbd"/><stop offset="0.2971" stop-color="#3c2eb3"/><stop offset="0.4614" stop-color="#3e2fa8"/><stop offset="0.5129" stop-color="#392cb9"/><stop offset="0.5676" stop-color="#1922e6"/><stop offset="0.6047" stop-color="#0020ff"/><stop offset="0.7013" stop-color="#0020ff"/><stop offset="0.7158" stop-color="#006dff"/><stop offset="0.7271" stop-color="#00c9ff"/><stop offset="0.7351" stop-color="#00ddf8"/><stop offset="0.7512" stop-color="#01efda"/><stop offset="0.7721" stop-color="#19c477"/><stop offset="0.7899" stop-color="#34b446"/><stop offset="0.7963" stop-color="#44b63f"/><stop offset="0.7979" stop-color="#5cb834"/><stop offset="0.9042" stop-color="#5fb933"/><stop offset="0.9332" stop-color="#d1e609"/><stop offset="0.9428" stop-color="#eff500"/><stop offset="0.9493" stop-color="#fffd00"/><stop offset="0.9847" stop-color="#ffaf00"/><stop offset="0.9992" stop-color="#ff9100"/></linearGradient><linearGradient id="g64" gradientUnits="objectBoundingBox"><stop offset="0.0008" stop-color="#ff9a00"/><stop offset="0.2085" stop-color="#ff9700"/><stop offset="0.2327" stop-color="#fbfd00"/><stop offset="0.2359" stop-color="#e4ee00"/><stop offset="0.2456" stop-color="#84c826"/><stop offset="0.2504" stop-color="#55b737"/><stop offset="0.2568" stop-color="#2fb54a"/><stop offset="0.2633" stop-color="#16c881"/><stop offset="0.2681" stop-color="#03ebd0"/><stop offset="0.2697" stop-color="#00ece2"/><stop offset="0.2729" stop-color="#00dcfa"/><stop offset="0.2762" stop-color="#00b5ff"/><stop offset="0.2810" stop-color="#0071ff"/><stop offset="0.2890" stop-color="#0025ff"/><stop offset="0.2923" stop-color="#1d23e2"/><stop offset="0.2955" stop-color="#372bbd"/><stop offset="0.2971" stop-color="#3c2eb3"/><stop offset="0.4614" stop-color="#3e2fa8"/><stop offset="0.5129" stop-color="#392cb9"/><stop offset="0.5676" stop-color="#1922e6"/><stop offset="0.6047" stop-color="#0020ff"/><stop offset="0.7013" stop-color="#0020ff"/><stop offset="0.7174" stop-color="#0079ff"/><stop offset="0.7271" stop-color="#00c8ff"/><stop offset="0.7351" stop-color="#00dcf8"/><stop offset="0.7512" stop-color="#00efda"/><stop offset="0.7738" stop-color="#1ac273"/><stop offset="0.7899" stop-color="#33b446"/><stop offset="0.7963" stop-color="#43b63f"/><stop offset="0.7979" stop-color="#5cb834"/><stop offset="0.9042" stop-color="#5fb933"/><stop offset="0.9332" stop-color="#d1e609"/><stop offset="0.9428" stop-color="#eff500"/><stop offset="0.9493" stop-color="#fffd00"/><stop offset="0.9847" stop-color="#ffaf00"/><stop offset="0.9992" stop-color="#ff9100"/></linearGradient><linearGradient id="g65" gradientUnits="objectBoundingBox"><stop offset="0.0008" stop-color="#ff9a00"/><stop offset="0.2085" stop-color="#ff9900"/><stop offset="0.2311" stop-color="#fffc00"/><stop offset="0.2343" stop-color="#ecf300"/><stop offset="0.2424" stop-color="#a2d41c"/><stop offset="0.2488" stop-color="#5eb933"/><stop offset="0.2568" stop-color="#2eb54c"/><stop offset="0.2617" stop-color="#1bc272"/><stop offset="0.2649" stop-color="#0fd59f"/><stop offset="0.2681" stop-color="#02ecd4"/><stop offset="0.2713" stop-color="#00e3ef"/><stop offset="0.2729" stop-color="#00dbfb"/><stop offset="0.2778" stop-color="#009cff"/><stop offset="0.2810" stop-color="#006fff"/><stop offset="0.2890" stop-color="#0024ff"/><stop offset="0.2939" stop-color="#2c26cf"/><stop offset="0.2971" stop-color="#3c2eb3"/><stop offset="0.4614" stop-color="#3e2fa8"/><stop offset="0.5129" stop-color="#392cb9"/><stop offset="0.5676" stop-color="#1922e6"/><stop offset="0.6047" stop-color="#0020ff"/><stop offset="0.7013" stop-color="#0020ff"/><stop offset="0.7174" stop-color="#0079ff"/><stop offset="0.7271" stop-color="#00c7ff"/><stop offset="0.7335" stop-color="#00dafc"/><stop offset="0.7512" stop-color="#00f0db"/><stop offset="0.7738" stop-color="#1ac273"/><stop offset="0.7899" stop-color="#33b447"/><stop offset="0.7963" stop-color="#43b63f"/><stop offset="0.7979" stop-color="#5cb834"/><stop offset="0.9042" stop-color="#5fb933"/><stop offset="0.9332" stop-color="#d1e609"/><stop offset="0.9428" stop-color="#eff500"/><stop offset="0.9493" stop-color="#fffd00"/><stop offset="0.9847" stop-color="#ffaf00"/><stop offset="0.9992" stop-color="#ff9100"/></linearGradient><linearGradient id="g66" gradientUnits="objectBoundingBox"><stop offset="0.0008" stop-color="#ff9a00"/><stop offset="0.2085" stop-color="#ff9a00"/><stop offset="0.2311" stop-color="#fffe00"/><stop offset="0.2359" stop-color="#dbea04"/><stop offset="0.2488" stop-color="#5bb835"/><stop offset="0.2568" stop-color="#2db64e"/><stop offset="0.2617" stop-color="#1ac374"/><stop offset="0.2681" stop-color="#01eed7"/><stop offset="0.2729" stop-color="#00dafc"/><stop offset="0.2810" stop-color="#006eff"/><stop offset="0.2890" stop-color="#0024ff"/><stop offset="0.2939" stop-color="#2c26cf"/><stop offset="0.2955" stop-color="#372bbc"/><stop offset="0.2971" stop-color="#3c2eb3"/><stop offset="0.4614" stop-color="#3e2fa8"/><stop offset="0.5129" stop-color="#392cb9"/><stop offset="0.5676" stop-color="#1922e6"/><stop offset="0.6047" stop-color="#0020ff"/><stop offset="0.7013" stop-color="#0020ff"/><stop offset="0.7174" stop-color="#0079ff"/><stop offset="0.7271" stop-color="#00c7ff"/><stop offset="0.7335" stop-color="#00dafc"/><stop offset="0.7512" stop-color="#00f0dc"/><stop offset="0.7738" stop-color="#1ac374"/><stop offset="0.7915" stop-color="#37b545"/><stop offset="0.7963" stop-color="#43b63f"/><stop offset="0.7979" stop-color="#5cb834"/><stop offset="0.9042" stop-color="#5fb933"/><stop offset="0.9332" stop-color="#d1e609"/><stop offset="0.9428" stop-color="#eff500"/><stop offset="0.9493" stop-color="#fffd00"/><stop offset="0.9847" stop-color="#ffaf00"/><stop offset="0.9992" stop-color="#ff9100"/></linearGradient><linearGradient id="g67" gradientUnits="objectBoundingBox"><stop offset="0.0008" stop-color="#ff9a00"/><stop offset="0.2085" stop-color="#ff9b00"/><stop offset="0.2311" stop-color="#fcfd00"/><stop offset="0.2359" stop-color="#d7e906"/><stop offset="0.2488" stop-color="#59b836"/><stop offset="0.2552" stop-color="#33b447"/><stop offset="0.2617" stop-color="#19c376"/><stop offset="0.2681" stop-color="#00f0db"/><stop offset="0.2729" stop-color="#00d9fd"/><stop offset="0.2810" stop-color="#006dff"/><stop offset="0.2890" stop-color="#0023ff"/><stop offset="0.2955" stop-color="#372bbc"/><stop offset="0.2971" stop-color="#3c2eb3"/><stop offset="0.4614" stop-color="#3e2fa8"/><stop offset="0.5129" stop-color="#392cb9"/><stop offset="0.5676" stop-color="#1922e6"/><stop offset="0.6047" stop-color="#0020ff"/><stop offset="0.7029" stop-color="#0024ff"/><stop offset="0.7174" stop-color="#0078ff"/><stop offset="0.7271" stop-color="#00c6ff"/><stop offset="0.7351" stop-color="#00dcf9"/><stop offset="0.7512" stop-color="#00f0dc"/><stop offset="0.7738" stop-color="#1ac374"/><stop offset="0.7915" stop-color="#36b545"/><stop offset="0.7963" stop-color="#42b640"/><stop offset="0.7979" stop-color="#5cb834"/><stop offset="0.9042" stop-color="#5fb933"/><stop offset="0.9332" stop-color="#d1e609"/><stop offset="0.9428" stop-color="#eff500"/><stop offset="0.9493" stop-color="#fffd00"/><stop offset="0.9847" stop-color="#ffaf00"/><stop offset="0.9992" stop-color="#ff9100"/></linearGradient><linearGradient id="g68" gradientUnits="objectBoundingBox"><stop offset="0.0008" stop-color="#ff9a00"/><stop offset="0.2085" stop-color="#ff9d00"/><stop offset="0.2295" stop-color="#fffb00"/><stop offset="0.2327" stop-color="#edf400"/><stop offset="0.2391" stop-color="#b7db14"/><stop offset="0.2488" stop-color="#56b737"/><stop offset="0.2552" stop-color="#31b448"/><stop offset="0.2617" stop-color="#18c478"/><stop offset="0.2681" stop-color="#00efdd"/><stop offset="0.2729" stop-color="#00d8ff"/><stop offset="0.2810" stop-color="#006cff"/><stop offset="0.2890" stop-color="#0023ff"/><stop offset="0.2955" stop-color="#372bbc"/><stop offset="0.2971" stop-color="#3c2eb3"/><stop offset="0.4614" stop-color="#3e2fa8"/><stop offset="0.5129" stop-color="#392cb9"/><stop offset="0.5676" stop-color="#1922e6"/><stop offset="0.6047" stop-color="#0020ff"/><stop offset="0.7029" stop-color="#0024ff"/><stop offset="0.7174" stop-color="#0078ff"/><stop offset="0.7271" stop-color="#00c5ff"/><stop offset="0.7335" stop-color="#00dafd"/><stop offset="0.7528" stop-color="#01eed7"/><stop offset="0.7738" stop-color="#1ac375"/><stop offset="0.7915" stop-color="#36b545"/><stop offset="0.7963" stop-color="#42b640"/><stop offset="0.7979" stop-color="#5cb834"/><stop offset="0.9042" stop-color="#5fb933"/><stop offset="0.9332" stop-color="#d1e609"/><stop offset="0.9428" stop-color="#eff500"/><stop offset="0.9493" stop-color="#fffd00"/><stop offset="0.9847" stop-color="#ffaf00"/><stop offset="0.9992" stop-color="#ff9100"/></linearGradient><linearGradient id="g69" gradientUnits="objectBoundingBox"><stop offset="0.0008" stop-color="#ff9a00"/><stop offset="0.2085" stop-color="#ff9e00"/><stop offset="0.2295" stop-color="#fffe00"/><stop offset="0.2343" stop-color="#ddeb03"/><stop offset="0.2440" stop-color="#80c627"/><stop offset="0.2488" stop-color="#54b738"/><stop offset="0.2552" stop-color="#2fb449"/><stop offset="0.2617" stop-color="#17c67c"/><stop offset="0.2681" stop-color="#00eedf"/><stop offset="0.2729" stop-color="#00d6ff"/><stop offset="0.2810" stop-color="#006bff"/><stop offset="0.2890" stop-color="#0022ff"/><stop offset="0.2955" stop-color="#372bbc"/><stop offset="0.2971" stop-color="#3c2eb3"/><stop offset="0.4614" stop-color="#3e2fa8"/><stop offset="0.5129" stop-color="#392cb9"/><stop offset="0.5676" stop-color="#1922e6"/><stop offset="0.6047" stop-color="#0020ff"/><stop offset="0.7029" stop-color="#0024ff"/><stop offset="0.7174" stop-color="#0077ff"/><stop offset="0.7271" stop-color="#00c5ff"/><stop offset="0.7351" stop-color="#00dbfa"/><stop offset="0.7528" stop-color="#01eed8"/><stop offset="0.7738" stop-color="#1ac375"/><stop offset="0.7915" stop-color="#36b545"/><stop offset="0.7963" stop-color="#42b640"/><stop offset="0.7979" stop-color="#5cb834"/><stop offset="0.9042" stop-color="#5fb933"/><stop offset="0.9332" stop-color="#d1e609"/><stop offset="0.9428" stop-color="#eff500"/><stop offset="0.9493" stop-color="#fffd00"/><stop offset="0.9847" stop-color="#ffaf00"/><stop offset="0.9992" stop-color="#ff9100"/></linearGradient><linearGradient id="g70" gradientUnits="objectBoundingBox"><stop offset="0.0008" stop-color="#ff9a00"/><stop offset="0.2085" stop-color="#ff9e00"/><stop offset="0.2279" stop-color="#fff900"/><stop offset="0.2295" stop-color="#fdfe00"/><stop offset="0.2343" stop-color="#d9e905"/><stop offset="0.2472" stop-color="#5bb834"/><stop offset="0.2552" stop-color="#2eb54c"/><stop offset="0.2617" stop-color="#16c881"/><stop offset="0.2665" stop-color="#04e9cc"/><stop offset="0.2681" stop-color="#00ede0"/><stop offset="0.2729" stop-color="#00d4ff"/><stop offset="0.2810" stop-color="#006aff"/><stop offset="0.2890" stop-color="#0022ff"/><stop offset="0.2955" stop-color="#372bbc"/><stop offset="0.2971" stop-color="#3c2eb3"/><stop offset="0.4614" stop-color="#3e2fa8"/><stop offset="0.5129" stop-color="#392cb9"/><stop offset="0.5676" stop-color="#1922e6"/><stop offset="0.6047" stop-color="#0020ff"/><stop offset="0.7029" stop-color="#0024ff"/><stop offset="0.7174" stop-color="#0077ff"/><stop offset="0.7271" stop-color="#00c4ff"/><stop offset="0.7351" stop-color="#00dbfa"/><stop offset="0.7528" stop-color="#01eed8"/><stop offset="0.7738" stop-color="#19c375"/><stop offset="0.7915" stop-color="#36b545"/><stop offset="0.7963" stop-color="#42b640"/><stop offset="0.7979" stop-color="#5cb834"/><stop offset="0.9042" stop-color="#5fb933"/><stop offset="0.9332" stop-color="#d1e609"/><stop offset="0.9428" stop-color="#eff500"/><stop offset="0.9493" stop-color="#fffd00"/><stop offset="0.9847" stop-color="#ffaf00"/><stop offset="0.9992" stop-color="#ff9100"/></linearGradient><linearGradient id="g71" gradientUnits="objectBoundingBox"><stop offset="0.0008" stop-color="#ff9a00"/><stop offset="0.2085" stop-color="#ff9e00"/><stop offset="0.2279" stop-color="#fffb00"/><stop offset="0.2311" stop-color="#eef400"/><stop offset="0.2391" stop-color="#a9d619"/><stop offset="0.2472" stop-color="#59b835"/><stop offset="0.2552" stop-color="#2db64e"/><stop offset="0.2601" stop-color="#1bc272"/><stop offset="0.2649" stop-color="#09e0b7"/><stop offset="0.2665" stop-color="#03ebd0"/><stop offset="0.2697" stop-color="#00e5ed"/><stop offset="0.2729" stop-color="#00d1ff"/><stop offset="0.2810" stop-color="#0069ff"/><stop offset="0.2890" stop-color="#0021ff"/><stop offset="0.2939" stop-color="#2d27ce"/><stop offset="0.2955" stop-color="#372cbc"/><stop offset="0.2971" stop-color="#3c2eb3"/><stop offset="0.4614" stop-color="#3e2fa8"/><stop offset="0.5129" stop-color="#392cb9"/><stop offset="0.5676" stop-color="#1922e6"/><stop offset="0.6047" stop-color="#0020ff"/><stop offset="0.7029" stop-color="#0024ff"/><stop offset="0.7174" stop-color="#0077ff"/><stop offset="0.7271" stop-color="#00c4ff"/><stop offset="0.7351" stop-color="#00dbfb"/><stop offset="0.7528" stop-color="#01efd9"/><stop offset="0.7738" stop-color="#19c376"/><stop offset="0.7915" stop-color="#35b446"/><stop offset="0.7963" stop-color="#41b640"/><stop offset="0.7979" stop-color="#5cb834"/><stop offset="0.9042" stop-color="#5fb933"/><stop offset="0.9332" stop-color="#d1e609"/><stop offset="0.9428" stop-color="#eff500"/><stop offset="0.9493" stop-color="#fffd00"/><stop offset="0.9847" stop-color="#ffaf00"/><stop offset="0.9992" stop-color="#ff9100"/></linearGradient><linearGradient id="g72" gradientUnits="objectBoundingBox"><stop offset="0.0008" stop-color="#ff9a00"/><stop offset="0.2085" stop-color="#ff9e00"/><stop offset="0.2279" stop-color="#fffe00"/><stop offset="0.2327" stop-color="#deeb03"/><stop offset="0.2440" stop-color="#73c12c"/><stop offset="0.2488" stop-color="#4eb73b"/><stop offset="0.2536" stop-color="#32b447"/><stop offset="0.2601" stop-color="#1ac374"/><stop offset="0.2665" stop-color="#02ecd4"/><stop offset="0.2697" stop-color="#00e4ee"/><stop offset="0.2729" stop-color="#00cfff"/><stop offset="0.2810" stop-color="#0068ff"/><stop offset="0.2890" stop-color="#0021ff"/><stop offset="0.2939" stop-color="#2d27ce"/><stop offset="0.2955" stop-color="#372cbc"/><stop offset="0.2971" stop-color="#3c2eb3"/><stop offset="0.4614" stop-color="#3e2fa8"/><stop offset="0.5129" stop-color="#392cb9"/><stop offset="0.5676" stop-color="#1922e6"/><stop offset="0.6047" stop-color="#0020ff"/><stop offset="0.7029" stop-color="#0024ff"/><stop offset="0.7174" stop-color="#0076ff"/><stop offset="0.7271" stop-color="#00c3ff"/><stop offset="0.7351" stop-color="#00dbfb"/><stop offset="0.7528" stop-color="#01efda"/><stop offset="0.7738" stop-color="#19c376"/><stop offset="0.7915" stop-color="#35b446"/><stop offset="0.7963" stop-color="#41b640"/><stop offset="0.7979" stop-color="#5cb834"/><stop offset="0.9042" stop-color="#5fb933"/><stop offset="0.9332" stop-color="#d1e609"/><stop offset="0.9428" stop-color="#eff500"/><stop offset="0.9493" stop-color="#fffd00"/><stop offset="0.9847" stop-color="#ffaf00"/><stop offset="0.9992" stop-color="#ff9100"/></linearGradient><linearGradient id="g73" gradientUnits="objectBoundingBox"><stop offset="0.0008" stop-color="#ff9a00"/><stop offset="0.2085" stop-color="#ff9e00"/><stop offset="0.2246" stop-color="#fff200"/><stop offset="0.2279" stop-color="#fcfd00"/><stop offset="0.2327" stop-color="#d9ea05"/><stop offset="0.2472" stop-color="#54b737"/><stop offset="0.2536" stop-color="#30b448"/><stop offset="0.2601" stop-color="#19c477"/><stop offset="0.2665" stop-color="#01eed7"/><stop offset="0.2713" stop-color="#00dbfa"/><stop offset="0.2762" stop-color="#00a2ff"/><stop offset="0.2810" stop-color="#0067ff"/><stop offset="0.2890" stop-color="#0020ff"/><stop offset="0.2939" stop-color="#2d27ce"/><stop offset="0.2955" stop-color="#372cbc"/><stop offset="0.2971" stop-color="#3c2eb3"/><stop offset="0.4614" stop-color="#3e2fa8"/><stop offset="0.5129" stop-color="#392cb9"/><stop offset="0.5676" stop-color="#1922e6"/><stop offset="0.6047" stop-color="#0020ff"/><stop offset="0.7029" stop-color="#0024ff"/><stop offset="0.7174" stop-color="#0076ff"/><stop offset="0.7271" stop-color="#00c2ff"/><stop offset="0.7351" stop-color="#00dafb"/><stop offset="0.7528" stop-color="#00efdb"/><stop offset="0.7738" stop-color="#19c477"/><stop offset="0.7915" stop-color="#35b446"/><stop offset="0.7963" stop-color="#41b640"/><stop offset="0.7979" stop-color="#5cb834"/><stop offset="0.9042" stop-color="#5fb933"/><stop offset="0.9332" stop-color="#d1e609"/><stop offset="0.9428" stop-color="#eff500"/><stop offset="0.9493" stop-color="#fffd00"/><stop offset="0.9847" stop-color="#ffaf00"/><stop offset="0.9992" stop-color="#ff9100"/></linearGradient><linearGradient id="g74" gradientUnits="objectBoundingBox"><stop offset="0.0008" stop-color="#ff9a00"/><stop offset="0.2069" stop-color="#ff9a00"/><stop offset="0.2262" stop-color="#fffc00"/><stop offset="0.2311" stop-color="#e2ed01"/><stop offset="0.2407" stop-color="#8aca24"/><stop offset="0.2456" stop-color="#5bb835"/><stop offset="0.2536" stop-color="#2fb54a"/><stop offset="0.2601" stop-color="#17c57a"/><stop offset="0.2665" stop-color="#00f0dc"/><stop offset="0.2713" stop-color="#00dafc"/><stop offset="0.2810" stop-color="#0065ff"/><stop offset="0.2890" stop-color="#0020ff"/><stop offset="0.2939" stop-color="#2d27cd"/><stop offset="0.2971" stop-color="#3c2eb3"/><stop offset="0.4614" stop-color="#3e2fa8"/><stop offset="0.5129" stop-color="#392cb9"/><stop offset="0.5676" stop-color="#1922e6"/><stop offset="0.6047" stop-color="#0020ff"/><stop offset="0.7029" stop-color="#0024ff"/><stop offset="0.7174" stop-color="#0075ff"/><stop offset="0.7271" stop-color="#00c1ff"/><stop offset="0.7351" stop-color="#00dafc"/><stop offset="0.7528" stop-color="#00f0dc"/><stop offset="0.7754" stop-color="#1ac273"/><stop offset="0.7915" stop-color="#34b446"/><stop offset="0.7963" stop-color="#40b541"/><stop offset="0.7979" stop-color="#5cb834"/><stop offset="0.9042" stop-color="#5fb933"/><stop offset="0.9332" stop-color="#d1e609"/><stop offset="0.9428" stop-color="#eff500"/><stop offset="0.9493" stop-color="#fffd00"/><stop offset="0.9847" stop-color="#ffaf00"/><stop offset="0.9992" stop-color="#ff9100"/></linearGradient><linearGradient id="g75" gradientUnits="objectBoundingBox"><stop offset="0.0008" stop-color="#ff9a00"/><stop offset="0.2069" stop-color="#ff9a00"/><stop offset="0.2262" stop-color="#fffe00"/><stop offset="0.2311" stop-color="#deec03"/><stop offset="0.2407" stop-color="#87c925"/><stop offset="0.2456" stop-color="#59b835"/><stop offset="0.2536" stop-color="#2eb54c"/><stop offset="0.2601" stop-color="#17c67e"/><stop offset="0.2665" stop-color="#00efdd"/><stop offset="0.2713" stop-color="#00dafd"/><stop offset="0.2794" stop-color="#0073ff"/><stop offset="0.2890" stop-color="#0120fe"/><stop offset="0.2939" stop-color="#2d27cd"/><stop offset="0.2971" stop-color="#3c2eb3"/><stop offset="0.4614" stop-color="#3e2fa8"/><stop offset="0.5129" stop-color="#392cb9"/><stop offset="0.5676" stop-color="#1922e6"/><stop offset="0.6047" stop-color="#0020ff"/><stop offset="0.7029" stop-color="#0024ff"/><stop offset="0.7174" stop-color="#0074ff"/><stop offset="0.7271" stop-color="#00bfff"/><stop offset="0.7351" stop-color="#00d9fd"/><stop offset="0.7544" stop-color="#01eed7"/><stop offset="0.7754" stop-color="#1ac374"/><stop offset="0.7915" stop-color="#33b446"/><stop offset="0.7963" stop-color="#3fb541"/><stop offset="0.7979" stop-color="#5cb834"/><stop offset="0.9042" stop-color="#5fb933"/><stop offset="0.9332" stop-color="#d1e609"/><stop offset="0.9428" stop-color="#eff500"/><stop offset="0.9493" stop-color="#fffd00"/><stop offset="0.9847" stop-color="#ffaf00"/><stop offset="0.9992" stop-color="#ff9100"/></linearGradient><linearGradient id="g76" gradientUnits="objectBoundingBox"><stop offset="0.0008" stop-color="#ff9a00"/><stop offset="0.2069" stop-color="#ff9a00"/><stop offset="0.2262" stop-color="#fdfe00"/><stop offset="0.2311" stop-color="#dbea04"/><stop offset="0.2407" stop-color="#83c726"/><stop offset="0.2456" stop-color="#57b836"/><stop offset="0.2536" stop-color="#2db64e"/><stop offset="0.2601" stop-color="#16c881"/><stop offset="0.2665" stop-color="#00eede"/><stop offset="0.2713" stop-color="#00d9fe"/><stop offset="0.2794" stop-color="#0072ff"/><stop offset="0.2890" stop-color="#0120fe"/><stop offset="0.2939" stop-color="#2e27cd"/><stop offset="0.2971" stop-color="#3c2eb3"/><stop offset="0.4614" stop-color="#3e2fa8"/><stop offset="0.5129" stop-color="#392cb9"/><stop offset="0.5676" stop-color="#1922e6"/><stop offset="0.6047" stop-color="#0020ff"/><stop offset="0.7029" stop-color="#0024ff"/><stop offset="0.7174" stop-color="#0073ff"/><stop offset="0.7271" stop-color="#00beff"/><stop offset="0.7367" stop-color="#00dbfb"/><stop offset="0.7544" stop-color="#01efd9"/><stop offset="0.7754" stop-color="#19c375"/><stop offset="0.7931" stop-color="#37b545"/><stop offset="0.7963" stop-color="#3fb541"/><stop offset="0.7979" stop-color="#5cb834"/><stop offset="0.9042" stop-color="#5fb933"/><stop offset="0.9332" stop-color="#d1e609"/><stop offset="0.9428" stop-color="#eff500"/><stop offset="0.9493" stop-color="#fffd00"/><stop offset="0.9847" stop-color="#ffaf00"/><stop offset="0.9992" stop-color="#ff9100"/></linearGradient><linearGradient id="g77" gradientUnits="objectBoundingBox"><stop offset="0.0008" stop-color="#ff9a00"/><stop offset="0.2069" stop-color="#ff9a00"/><stop offset="0.2246" stop-color="#fffa00"/><stop offset="0.2262" stop-color="#fbfc00"/><stop offset="0.2311" stop-color="#d8e906"/><stop offset="0.2440" stop-color="#60ba33"/><stop offset="0.2520" stop-color="#33b447"/><stop offset="0.2585" stop-color="#1bc272"/><stop offset="0.2633" stop-color="#0adeb4"/><stop offset="0.2665" stop-color="#00eedf"/><stop offset="0.2713" stop-color="#00d8ff"/><stop offset="0.2794" stop-color="#0071ff"/><stop offset="0.2890" stop-color="#0220fd"/><stop offset="0.2939" stop-color="#2e27cd"/><stop offset="0.2971" stop-color="#3c2eb3"/><stop offset="0.4614" stop-color="#3e2fa8"/><stop offset="0.5129" stop-color="#392cb9"/><stop offset="0.5676" stop-color="#1922e6"/><stop offset="0.6047" stop-color="#0020ff"/><stop offset="0.7029" stop-color="#0024ff"/><stop offset="0.7190" stop-color="#007fff"/><stop offset="0.7271" stop-color="#00bcff"/><stop offset="0.7367" stop-color="#00dafc"/><stop offset="0.7544" stop-color="#00f0db"/><stop offset="0.7754" stop-color="#19c376"/><stop offset="0.7931" stop-color="#36b545"/><stop offset="0.7963" stop-color="#3eb542"/><stop offset="0.7979" stop-color="#5cb834"/><stop offset="0.9042" stop-color="#5fb933"/><stop offset="0.9332" stop-color="#d1e609"/><stop offset="0.9428" stop-color="#eff500"/><stop offset="0.9493" stop-color="#fffd00"/><stop offset="0.9847" stop-color="#ffaf00"/><stop offset="0.9992" stop-color="#ff9100"/></linearGradient><linearGradient id="g78" gradientUnits="objectBoundingBox"><stop offset="0.0008" stop-color="#ff9a00"/><stop offset="0.2069" stop-color="#ff9a00"/><stop offset="0.2150" stop-color="#ffc700"/><stop offset="0.2246" stop-color="#fffc00"/><stop offset="0.2295" stop-color="#e1ed01"/><stop offset="0.2391" stop-color="#8ccb23"/><stop offset="0.2440" stop-color="#5db834"/><stop offset="0.2520" stop-color="#31b448"/><stop offset="0.2585" stop-color="#1ac374"/><stop offset="0.2649" stop-color="#03eacf"/><stop offset="0.2665" stop-color="#00ede1"/><stop offset="0.2713" stop-color="#00d6ff"/><stop offset="0.2794" stop-color="#0070ff"/><stop offset="0.2890" stop-color="#0220fd"/><stop offset="0.2939" stop-color="#2e27cd"/><stop offset="0.2971" stop-color="#3c2eb3"/><stop offset="0.4614" stop-color="#3e2fa8"/><stop offset="0.5129" stop-color="#392cb9"/><stop offset="0.5676" stop-color="#1922e6"/><stop offset="0.6047" stop-color="#0020ff"/><stop offset="0.7029" stop-color="#0024ff"/><stop offset="0.7174" stop-color="#0071ff"/><stop offset="0.7271" stop-color="#00baff"/><stop offset="0.7367" stop-color="#00dafd"/><stop offset="0.7544" stop-color="#00f0dd"/><stop offset="0.7754" stop-color="#18c477"/><stop offset="0.7931" stop-color="#35b446"/><stop offset="0.7963" stop-color="#3db542"/><stop offset="0.7979" stop-color="#5cb834"/><stop offset="0.9042" stop-color="#5fb933"/><stop offset="0.9332" stop-color="#d1e609"/><stop offset="0.9428" stop-color="#eff500"/><stop offset="0.9493" stop-color="#fffd00"/><stop offset="0.9847" stop-color="#ffaf00"/><stop offset="0.9992" stop-color="#ff9100"/></linearGradient><linearGradient id="g79" gradientUnits="objectBoundingBox"><stop offset="0.0008" stop-color="#ff9a00"/><stop offset="0.2069" stop-color="#ff9a00"/><stop offset="0.2150" stop-color="#ffc700"/><stop offset="0.2246" stop-color="#fffd00"/><stop offset="0.2311" stop-color="#d2e708"/><stop offset="0.2440" stop-color="#5cb834"/><stop offset="0.2520" stop-color="#30b448"/><stop offset="0.2585" stop-color="#19c375"/><stop offset="0.2649" stop-color="#03ebd1"/><stop offset="0.2681" stop-color="#00e5ec"/><stop offset="0.2713" stop-color="#00d5ff"/><stop offset="0.2794" stop-color="#006fff"/><stop offset="0.2890" stop-color="#0220fd"/><stop offset="0.2939" stop-color="#2e27cd"/><stop offset="0.2971" stop-color="#3c2eb3"/><stop offset="0.4614" stop-color="#3e2fa8"/><stop offset="0.5129" stop-color="#392cb9"/><stop offset="0.5676" stop-color="#1922e6"/><stop offset="0.6047" stop-color="#0020ff"/><stop offset="0.7029" stop-color="#0024ff"/><stop offset="0.7174" stop-color="#0070ff"/><stop offset="0.7271" stop-color="#00b9ff"/><stop offset="0.7367" stop-color="#00d9fd"/><stop offset="0.7560" stop-color="#01eed7"/><stop offset="0.7770" stop-color="#1ac374"/><stop offset="0.7915" stop-color="#36b545"/><stop offset="0.7963" stop-color="#45b63f"/><stop offset="0.7979" stop-color="#5cb834"/><stop offset="0.9042" stop-color="#5fb933"/><stop offset="0.9332" stop-color="#d1e609"/><stop offset="0.9428" stop-color="#eff500"/><stop offset="0.9493" stop-color="#fffd00"/><stop offset="0.9847" stop-color="#ffaf00"/><stop offset="0.9992" stop-color="#ff9100"/></linearGradient><linearGradient id="g80" gradientUnits="objectBoundingBox"><stop offset="0.0008" stop-color="#ff9a00"/><stop offset="0.2069" stop-color="#ff9a00"/><stop offset="0.2134" stop-color="#ffbe00"/><stop offset="0.2246" stop-color="#fffd00"/><stop offset="0.2311" stop-color="#d2e708"/><stop offset="0.2440" stop-color="#5bb834"/><stop offset="0.2520" stop-color="#30b448"/><stop offset="0.2585" stop-color="#19c376"/><stop offset="0.2649" stop-color="#03ebd1"/><stop offset="0.2681" stop-color="#00e5ec"/><stop offset="0.2713" stop-color="#00d5ff"/><stop offset="0.2794" stop-color="#006fff"/><stop offset="0.2890" stop-color="#0220fd"/><stop offset="0.2939" stop-color="#2e27cd"/><stop offset="0.2971" stop-color="#3c2eb3"/><stop offset="0.4614" stop-color="#3e2fa8"/><stop offset="0.5129" stop-color="#392cb9"/><stop offset="0.5676" stop-color="#1922e6"/><stop offset="0.6047" stop-color="#0020ff"/><stop offset="0.7029" stop-color="#0024ff"/><stop offset="0.7174" stop-color="#0070ff"/><stop offset="0.7271" stop-color="#00b9ff"/><stop offset="0.7367" stop-color="#00d9fd"/><stop offset="0.7560" stop-color="#01eed7"/><stop offset="0.7738" stop-color="#19c376"/><stop offset="0.7834" stop-color="#2ab854"/><stop offset="0.7899" stop-color="#3eb542"/><stop offset="0.7979" stop-color="#5cb834"/><stop offset="0.9042" stop-color="#5fb933"/><stop offset="0.9332" stop-color="#d1e609"/><stop offset="0.9428" stop-color="#eff500"/><stop offset="0.9493" stop-color="#fffd00"/><stop offset="0.9847" stop-color="#ffaf00"/><stop offset="0.9992" stop-color="#ff9100"/></linearGradient><linearGradient id="g81" gradientUnits="objectBoundingBox"><stop offset="0.0008" stop-color="#ff9a00"/><stop offset="0.2069" stop-color="#ff9a00"/><stop offset="0.2134" stop-color="#ffbe00"/><stop offset="0.2246" stop-color="#fffe00"/><stop offset="0.2295" stop-color="#deec03"/><stop offset="0.2391" stop-color="#88c925"/><stop offset="0.2440" stop-color="#5bb835"/><stop offset="0.2520" stop-color="#30b449"/><stop offset="0.2585" stop-color="#19c376"/><stop offset="0.2649" stop-color="#02ecd2"/><stop offset="0.2681" stop-color="#00e5ec"/><stop offset="0.2713" stop-color="#00d4ff"/><stop offset="0.2794" stop-color="#006fff"/><stop offset="0.2890" stop-color="#0320fc"/><stop offset="0.2939" stop-color="#2e27cd"/><stop offset="0.2971" stop-color="#3c2eb3"/><stop offset="0.4614" stop-color="#3e2fa8"/><stop offset="0.5129" stop-color="#392cb9"/><stop offset="0.5676" stop-color="#1922e6"/><stop offset="0.6047" stop-color="#0020ff"/><stop offset="0.7029" stop-color="#0024ff"/><stop offset="0.7190" stop-color="#007cff"/><stop offset="0.7271" stop-color="#00b9ff"/><stop offset="0.7367" stop-color="#00d9fd"/><stop offset="0.7560" stop-color="#01edd6"/><stop offset="0.7705" stop-color="#1ac374"/><stop offset="0.7834" stop-color="#34b446"/><stop offset="0.7947" stop-color="#61ba32"/><stop offset="0.7963" stop-color="#6cbe2e"/><stop offset="0.7979" stop-color="#5cb834"/><stop offset="0.9042" stop-color="#5fb933"/><stop offset="0.9332" stop-color="#d1e609"/><stop offset="0.9428" stop-color="#eff500"/><stop offset="0.9493" stop-color="#fffd00"/><stop offset="0.9847" stop-color="#ffaf00"/><stop offset="0.9992" stop-color="#ff9100"/></linearGradient><linearGradient id="g82" gradientUnits="objectBoundingBox"><stop offset="0.0008" stop-color="#ff9a00"/><stop offset="0.2069" stop-color="#ff9a00"/><stop offset="0.2134" stop-color="#ffbe00"/><stop offset="0.2246" stop-color="#fffe00"/><stop offset="0.2295" stop-color="#ddeb03"/><stop offset="0.2391" stop-color="#88c925"/><stop offset="0.2440" stop-color="#5ab835"/><stop offset="0.2520" stop-color="#30b449"/><stop offset="0.2585" stop-color="#19c376"/><stop offset="0.2649" stop-color="#02ecd3"/><stop offset="0.2681" stop-color="#00e5ec"/><stop offset="0.2713" stop-color="#00d4ff"/><stop offset="0.2794" stop-color="#006fff"/><stop offset="0.2890" stop-color="#0320fc"/><stop offset="0.2939" stop-color="#2e27cc"/><stop offset="0.2971" stop-color="#3c2eb3"/><stop offset="0.4614" stop-color="#3e2fa8"/><stop offset="0.5129" stop-color="#392cb9"/><stop offset="0.5676" stop-color="#1922e6"/><stop offset="0.6047" stop-color="#0020ff"/><stop offset="0.7029" stop-color="#0024ff"/><stop offset="0.7190" stop-color="#007cff"/><stop offset="0.7271" stop-color="#00b9ff"/><stop offset="0.7367" stop-color="#00dafb"/><stop offset="0.7528" stop-color="#00efda"/><stop offset="0.7576" stop-color="#08e2bc"/><stop offset="0.7673" stop-color="#1ac374"/><stop offset="0.7802" stop-color="#35b446"/><stop offset="0.7915" stop-color="#67bc30"/><stop offset="0.7963" stop-color="#89ca24"/><stop offset="0.7979" stop-color="#6bbe2f"/><stop offset="0.9042" stop-color="#6ebf2e"/><stop offset="0.9332" stop-color="#daea05"/><stop offset="0.9477" stop-color="#fffd00"/><stop offset="0.9992" stop-color="#ff9100"/></linearGradient><linearGradient id="g83" gradientUnits="objectBoundingBox"><stop offset="0.0008" stop-color="#ff9a00"/><stop offset="0.2069" stop-color="#ff9a00"/><stop offset="0.2134" stop-color="#ffbe00"/><stop offset="0.2246" stop-color="#fffe00"/><stop offset="0.2295" stop-color="#ddeb03"/><stop offset="0.2391" stop-color="#89ca24"/><stop offset="0.2440" stop-color="#5cb834"/><stop offset="0.2520" stop-color="#31b447"/><stop offset="0.2585" stop-color="#1bc273"/><stop offset="0.2633" stop-color="#0adeb2"/><stop offset="0.2665" stop-color="#00efde"/><stop offset="0.2713" stop-color="#00dafc"/><stop offset="0.2810" stop-color="#0069ff"/><stop offset="0.2890" stop-color="#0027ff"/><stop offset="0.2923" stop-color="#1722e8"/><stop offset="0.2955" stop-color="#3028c8"/><stop offset="0.2987" stop-color="#352bc0"/><stop offset="0.4597" stop-color="#3b2eb5"/><stop offset="0.5113" stop-color="#3229c5"/><stop offset="0.5644" stop-color="#0d21f2"/><stop offset="0.5870" stop-color="#0025ff"/><stop offset="0.6095" stop-color="#002dff"/><stop offset="0.7013" stop-color="#002bff"/><stop offset="0.7158" stop-color="#0075ff"/><stop offset="0.7271" stop-color="#00cbff"/><stop offset="0.7335" stop-color="#00ddf8"/><stop offset="0.7480" stop-color="#01eed7"/><stop offset="0.7560" stop-color="#0bdcae"/><stop offset="0.7625" stop-color="#18c479"/><stop offset="0.7754" stop-color="#32b447"/><stop offset="0.7866" stop-color="#5db933"/><stop offset="0.7963" stop-color="#a6d51a"/><stop offset="0.7979" stop-color="#8aca24"/><stop offset="0.9042" stop-color="#8dcb23"/><stop offset="0.9300" stop-color="#e2ed01"/><stop offset="0.9428" stop-color="#fffd00"/><stop offset="0.9815" stop-color="#ffb200"/><stop offset="0.9992" stop-color="#ff9100"/></linearGradient><linearGradient id="g84" gradientUnits="objectBoundingBox"><stop offset="0.0008" stop-color="#ff9a00"/><stop offset="0.2069" stop-color="#ff9a00"/><stop offset="0.2134" stop-color="#ffbe00"/><stop offset="0.2246" stop-color="#ffff00"/><stop offset="0.2295" stop-color="#ddeb03"/><stop offset="0.2407" stop-color="#7ec528"/><stop offset="0.2456" stop-color="#56b737"/><stop offset="0.2536" stop-color="#2eb54b"/><stop offset="0.2601" stop-color="#19c376"/><stop offset="0.2681" stop-color="#00eedf"/><stop offset="0.2729" stop-color="#00dafc"/><stop offset="0.2826" stop-color="#006cff"/><stop offset="0.2923" stop-color="#0120fe"/><stop offset="0.2955" stop-color="#1f23e0"/><stop offset="0.2987" stop-color="#2624d9"/><stop offset="0.4614" stop-color="#2c26cf"/><stop offset="0.5097" stop-color="#2123de"/><stop offset="0.5515" stop-color="#0024ff"/><stop offset="0.6031" stop-color="#0048ff"/><stop offset="0.7013" stop-color="#0041ff"/><stop offset="0.7110" stop-color="#0073ff"/><stop offset="0.7238" stop-color="#00d9fe"/><stop offset="0.7319" stop-color="#00e7ea"/><stop offset="0.7399" stop-color="#00efda"/><stop offset="0.7560" stop-color="#11d094"/><stop offset="0.7593" stop-color="#18c478"/><stop offset="0.7721" stop-color="#34b446"/><stop offset="0.7834" stop-color="#5db834"/><stop offset="0.7963" stop-color="#c2e010"/><stop offset="0.7979" stop-color="#a9d619"/><stop offset="0.9042" stop-color="#abd718"/><stop offset="0.9283" stop-color="#eef400"/><stop offset="0.9380" stop-color="#fffc00"/><stop offset="0.9992" stop-color="#ff9100"/></linearGradient><linearGradient id="g85" gradientUnits="objectBoundingBox"><stop offset="0.0008" stop-color="#ffa100"/><stop offset="0.2069" stop-color="#ffa100"/><stop offset="0.2150" stop-color="#ffce00"/><stop offset="0.2230" stop-color="#fffa00"/><stop offset="0.2246" stop-color="#fafc00"/><stop offset="0.2295" stop-color="#d8e905"/><stop offset="0.2407" stop-color="#7dc529"/><stop offset="0.2456" stop-color="#57b836"/><stop offset="0.2536" stop-color="#30b448"/><stop offset="0.2617" stop-color="#17c67e"/><stop offset="0.2681" stop-color="#02ecd3"/><stop offset="0.2729" stop-color="#00e0f4"/><stop offset="0.2762" stop-color="#00caff"/><stop offset="0.2842" stop-color="#006eff"/><stop offset="0.2939" stop-color="#0026ff"/><stop offset="0.2971" stop-color="#0f21f0"/><stop offset="0.4614" stop-color="#1722e8"/><stop offset="0.5113" stop-color="#0721f8"/><stop offset="0.5274" stop-color="#0027ff"/><stop offset="0.6031" stop-color="#0063ff"/><stop offset="0.7013" stop-color="#0057ff"/><stop offset="0.7077" stop-color="#007dff"/><stop offset="0.7190" stop-color="#00d8ff"/><stop offset="0.7271" stop-color="#00ede0"/><stop offset="0.7335" stop-color="#03eace"/><stop offset="0.7560" stop-color="#18c57a"/><stop offset="0.7673" stop-color="#30b448"/><stop offset="0.7802" stop-color="#5bb834"/><stop offset="0.7947" stop-color="#cfe50a"/><stop offset="0.7963" stop-color="#daea04"/><stop offset="0.7979" stop-color="#c5e10e"/><stop offset="0.9042" stop-color="#c7e20d"/><stop offset="0.9219" stop-color="#f0f600"/><stop offset="0.9316" stop-color="#fffc00"/><stop offset="0.9992" stop-color="#ff9100"/></linearGradient><linearGradient id="g86" gradientUnits="objectBoundingBox"><stop offset="0.0008" stop-color="#ffaf00"/><stop offset="0.2069" stop-color="#ffaf00"/><stop offset="0.2230" stop-color="#fcfd00"/><stop offset="0.2279" stop-color="#daea05"/><stop offset="0.2407" stop-color="#78c32a"/><stop offset="0.2456" stop-color="#55b737"/><stop offset="0.2552" stop-color="#2cb750"/><stop offset="0.2617" stop-color="#19c477"/><stop offset="0.2697" stop-color="#01efd9"/><stop offset="0.2762" stop-color="#00d9fe"/><stop offset="0.2874" stop-color="#0066ff"/><stop offset="0.2955" stop-color="#002dff"/><stop offset="0.3052" stop-color="#0027ff"/><stop offset="0.4694" stop-color="#0023ff"/><stop offset="0.5113" stop-color="#002fff"/><stop offset="0.5918" stop-color="#007bff"/><stop offset="0.6031" stop-color="#0084ff"/><stop offset="0.7013" stop-color="#006cff"/><stop offset="0.7142" stop-color="#00d6ff"/><stop offset="0.7222" stop-color="#00eedf"/><stop offset="0.7271" stop-color="#08e1b9"/><stop offset="0.7512" stop-color="#19c375"/><stop offset="0.7576" stop-color="#21be65"/><stop offset="0.7641" stop-color="#30b448"/><stop offset="0.7770" stop-color="#5bb834"/><stop offset="0.7866" stop-color="#a9d619"/><stop offset="0.7947" stop-color="#e6ef00"/><stop offset="0.7963" stop-color="#f0f600"/><stop offset="0.7979" stop-color="#deec03"/><stop offset="0.9042" stop-color="#e0ec02"/><stop offset="0.9219" stop-color="#fffd00"/><stop offset="0.9783" stop-color="#ffad00"/><stop offset="0.9992" stop-color="#ff9100"/></linearGradient><linearGradient id="g87" gradientUnits="objectBoundingBox"><stop offset="0.0008" stop-color="#ffbd00"/><stop offset="0.2085" stop-color="#ffc100"/><stop offset="0.2198" stop-color="#fffa00"/><stop offset="0.2214" stop-color="#fcfd00"/><stop offset="0.2262" stop-color="#dbea04"/><stop offset="0.2440" stop-color="#5bb835"/><stop offset="0.2536" stop-color="#32b447"/><stop offset="0.2633" stop-color="#16c880"/><stop offset="0.2713" stop-color="#00f0dd"/><stop offset="0.2778" stop-color="#00d9fd"/><stop offset="0.2890" stop-color="#006cff"/><stop offset="0.2955" stop-color="#0041ff"/><stop offset="0.3052" stop-color="#003bff"/><stop offset="0.4662" stop-color="#0037ff"/><stop offset="0.5097" stop-color="#0042ff"/><stop offset="0.5660" stop-color="#007eff"/><stop offset="0.5998" stop-color="#00aeff"/><stop offset="0.7013" stop-color="#008cff"/><stop offset="0.7093" stop-color="#00d3ff"/><stop offset="0.7174" stop-color="#00ede0"/><stop offset="0.7206" stop-color="#05e6c6"/><stop offset="0.7271" stop-color="#13ce8e"/><stop offset="0.7415" stop-color="#1bc273"/><stop offset="0.7560" stop-color="#24bc60"/><stop offset="0.7625" stop-color="#35b446"/><stop offset="0.7754" stop-color="#67bc30"/><stop offset="0.7818" stop-color="#96ce20"/><stop offset="0.7931" stop-color="#edf300"/><stop offset="0.7963" stop-color="#fffe00"/><stop offset="0.7979" stop-color="#f5f800"/><stop offset="0.9058" stop-color="#f8fb00"/><stop offset="0.9155" stop-color="#fff900"/><stop offset="0.9992" stop-color="#ff9100"/></linearGradient><linearGradient id="g88" gradientUnits="objectBoundingBox"><stop offset="0.0008" stop-color="#ffcb00"/><stop offset="0.2085" stop-color="#ffcf00"/><stop offset="0.2182" stop-color="#fffb00"/><stop offset="0.2198" stop-color="#fbfd00"/><stop offset="0.2246" stop-color="#dceb03"/><stop offset="0.2440" stop-color="#59b836"/><stop offset="0.2552" stop-color="#2db64d"/><stop offset="0.2633" stop-color="#18c477"/><stop offset="0.2729" stop-color="#00efdd"/><stop offset="0.2794" stop-color="#00dafc"/><stop offset="0.2923" stop-color="#0069ff"/><stop offset="0.2971" stop-color="#0050ff"/><stop offset="0.4710" stop-color="#004dff"/><stop offset="0.5097" stop-color="#0057ff"/><stop offset="0.5483" stop-color="#0087ff"/><stop offset="0.5998" stop-color="#00d7ff"/><stop offset="0.7013" stop-color="#00adff"/><stop offset="0.7045" stop-color="#00ceff"/><stop offset="0.7093" stop-color="#00e3ef"/><stop offset="0.7142" stop-color="#01efda"/><stop offset="0.7238" stop-color="#17c67c"/><stop offset="0.7271" stop-color="#1dc16e"/><stop offset="0.7560" stop-color="#2ab853"/><stop offset="0.7625" stop-color="#3fb541"/><stop offset="0.7721" stop-color="#67bc30"/><stop offset="0.7818" stop-color="#abd718"/><stop offset="0.7899" stop-color="#e6f000"/><stop offset="0.7947" stop-color="#fffc00"/><stop offset="0.7963" stop-color="#fff500"/><stop offset="0.8043" stop-color="#fffa00"/><stop offset="0.9074" stop-color="#fff600"/><stop offset="0.9976" stop-color="#ff9200"/><stop offset="0.9992" stop-color="#ff9100"/></linearGradient><linearGradient id="g89" gradientUnits="objectBoundingBox"><stop offset="0.0008" stop-color="#ffd800"/><stop offset="0.2085" stop-color="#ffdc00"/><stop offset="0.2166" stop-color="#fffd00"/><stop offset="0.2230" stop-color="#dceb04"/><stop offset="0.2440" stop-color="#56b737"/><stop offset="0.2552" stop-color="#2eb54c"/><stop offset="0.2649" stop-color="#17c67d"/><stop offset="0.2746" stop-color="#00efdd"/><stop offset="0.2826" stop-color="#00d5ff"/><stop offset="0.2955" stop-color="#0069ff"/><stop offset="0.3035" stop-color="#0064ff"/><stop offset="0.4726" stop-color="#0062ff"/><stop offset="0.5113" stop-color="#006eff"/><stop offset="0.5789" stop-color="#00dafc"/><stop offset="0.6047" stop-color="#00e5ec"/><stop offset="0.6932" stop-color="#00d2ff"/><stop offset="0.7013" stop-color="#00ceff"/><stop offset="0.7029" stop-color="#00dcf9"/><stop offset="0.7093" stop-color="#00efdd"/><stop offset="0.7206" stop-color="#1ac374"/><stop offset="0.7271" stop-color="#27ba59"/><stop offset="0.7560" stop-color="#31b447"/><stop offset="0.7689" stop-color="#66bc30"/><stop offset="0.7882" stop-color="#ebf200"/><stop offset="0.7915" stop-color="#fdfe00"/><stop offset="0.7963" stop-color="#ffed00"/><stop offset="0.9074" stop-color="#ffed00"/><stop offset="0.9976" stop-color="#ff9200"/><stop offset="0.9992" stop-color="#ff9100"/></linearGradient><linearGradient id="g90" gradientUnits="objectBoundingBox"><stop offset="0.0008" stop-color="#ffe400"/><stop offset="0.2085" stop-color="#ffe700"/><stop offset="0.2150" stop-color="#fefe00"/><stop offset="0.2214" stop-color="#daea04"/><stop offset="0.2424" stop-color="#5ab835"/><stop offset="0.2552" stop-color="#2fb54b"/><stop offset="0.2649" stop-color="#19c375"/><stop offset="0.2762" stop-color="#00f0db"/><stop offset="0.2858" stop-color="#00d1ff"/><stop offset="0.2955" stop-color="#0083ff"/><stop offset="0.3003" stop-color="#007cff"/><stop offset="0.4646" stop-color="#0079ff"/><stop offset="0.5081" stop-color="#0088ff"/><stop offset="0.5564" stop-color="#00dafc"/><stop offset="0.5950" stop-color="#01eed7"/><stop offset="0.6031" stop-color="#02ebd2"/><stop offset="0.6320" stop-color="#00ede0"/><stop offset="0.7013" stop-color="#00e0f4"/><stop offset="0.7045" stop-color="#00ede0"/><stop offset="0.7077" stop-color="#06e6c5"/><stop offset="0.7158" stop-color="#19c477"/><stop offset="0.7254" stop-color="#30b449"/><stop offset="0.7560" stop-color="#3bb543"/><stop offset="0.7657" stop-color="#63bb31"/><stop offset="0.7866" stop-color="#eff500"/><stop offset="0.7899" stop-color="#fffe00"/><stop offset="0.7963" stop-color="#ffe400"/><stop offset="0.9074" stop-color="#ffe300"/><stop offset="0.9960" stop-color="#ff9300"/><stop offset="0.9992" stop-color="#ff9100"/></linearGradient><linearGradient id="g91" gradientUnits="objectBoundingBox"><stop offset="0.0008" stop-color="#fff000"/><stop offset="0.2085" stop-color="#fff200"/><stop offset="0.2118" stop-color="#fffe00"/><stop offset="0.2198" stop-color="#d7e906"/><stop offset="0.2391" stop-color="#65bc31"/><stop offset="0.2552" stop-color="#2fb449"/><stop offset="0.2665" stop-color="#19c477"/><stop offset="0.2778" stop-color="#02edd5"/><stop offset="0.2858" stop-color="#00def7"/><stop offset="0.2907" stop-color="#00c5ff"/><stop offset="0.2955" stop-color="#00a1ff"/><stop offset="0.3003" stop-color="#009bff"/><stop offset="0.4614" stop-color="#0098ff"/><stop offset="0.5081" stop-color="#00a7ff"/><stop offset="0.5370" stop-color="#00dafc"/><stop offset="0.5725" stop-color="#01efd9"/><stop offset="0.5998" stop-color="#0ed6a1"/><stop offset="0.6868" stop-color="#00efde"/><stop offset="0.7013" stop-color="#00ebe3"/><stop offset="0.7045" stop-color="#08e2bc"/><stop offset="0.7110" stop-color="#17c57b"/><stop offset="0.7222" stop-color="#34b446"/><stop offset="0.7287" stop-color="#42b640"/><stop offset="0.7560" stop-color="#44b63f"/><stop offset="0.7641" stop-color="#6abe2f"/><stop offset="0.7818" stop-color="#e1ed01"/><stop offset="0.7866" stop-color="#fcfd00"/><stop offset="0.7963" stop-color="#ffdb00"/><stop offset="0.9090" stop-color="#ffd900"/><stop offset="0.9960" stop-color="#ff9200"/><stop offset="0.9992" stop-color="#ff9000"/></linearGradient><linearGradient id="g92" gradientUnits="objectBoundingBox"><stop offset="0.0008" stop-color="#fffb00"/><stop offset="0.2085" stop-color="#fffe00"/><stop offset="0.2166" stop-color="#dbea04"/><stop offset="0.2343" stop-color="#78c32a"/><stop offset="0.2424" stop-color="#55b737"/><stop offset="0.2568" stop-color="#2db64d"/><stop offset="0.2681" stop-color="#18c477"/><stop offset="0.2810" stop-color="#01efd9"/><stop offset="0.2923" stop-color="#00d5ff"/><stop offset="0.2971" stop-color="#00baff"/><stop offset="0.4630" stop-color="#00b8ff"/><stop offset="0.5081" stop-color="#00c7ff"/><stop offset="0.5209" stop-color="#00dbfb"/><stop offset="0.5531" stop-color="#01efd9"/><stop offset="0.5982" stop-color="#19c375"/><stop offset="0.6417" stop-color="#11d094"/><stop offset="0.7013" stop-color="#05e6c5"/><stop offset="0.7029" stop-color="#0ed7a3"/><stop offset="0.7077" stop-color="#19c375"/><stop offset="0.7174" stop-color="#31b447"/><stop offset="0.7271" stop-color="#52b738"/><stop offset="0.7560" stop-color="#50b73a"/><stop offset="0.7609" stop-color="#68bd30"/><stop offset="0.7754" stop-color="#cae30c"/><stop offset="0.7818" stop-color="#eff500"/><stop offset="0.7850" stop-color="#fffe00"/><stop offset="0.7963" stop-color="#ffd100"/><stop offset="0.9090" stop-color="#ffce00"/><stop offset="0.9992" stop-color="#ff9000"/></linearGradient><linearGradient id="g93" gradientUnits="objectBoundingBox"><stop offset="0.0008" stop-color="#f4f800"/><stop offset="0.2085" stop-color="#f1f600"/><stop offset="0.2150" stop-color="#d3e708"/><stop offset="0.2327" stop-color="#76c22b"/><stop offset="0.2424" stop-color="#52b738"/><stop offset="0.2568" stop-color="#2eb54b"/><stop offset="0.2713" stop-color="#16c77f"/><stop offset="0.2842" stop-color="#01eed8"/><stop offset="0.2971" stop-color="#00d8ff"/><stop offset="0.4807" stop-color="#00d9fd"/><stop offset="0.5097" stop-color="#00def6"/><stop offset="0.5354" stop-color="#01efda"/><stop offset="0.5789" stop-color="#19c375"/><stop offset="0.6014" stop-color="#24bc5f"/><stop offset="0.6675" stop-color="#16c880"/><stop offset="0.7013" stop-color="#0fd59f"/><stop offset="0.7029" stop-color="#18c57a"/><stop offset="0.7126" stop-color="#2fb449"/><stop offset="0.7271" stop-color="#67bc30"/><stop offset="0.7544" stop-color="#5ab835"/><stop offset="0.7576" stop-color="#68bd30"/><stop offset="0.7754" stop-color="#dbea04"/><stop offset="0.7818" stop-color="#fcfd00"/><stop offset="0.7963" stop-color="#ffc700"/><stop offset="0.9090" stop-color="#ffc300"/><stop offset="0.9992" stop-color="#ff9000"/></linearGradient><linearGradient id="g94" gradientUnits="objectBoundingBox"><stop offset="0.0008" stop-color="#e4ee00"/><stop offset="0.2085" stop-color="#e0ec02"/><stop offset="0.2327" stop-color="#6dbf2e"/><stop offset="0.2407" stop-color="#53b738"/><stop offset="0.2585" stop-color="#2db64e"/><stop offset="0.2729" stop-color="#18c579"/><stop offset="0.2890" stop-color="#00f0dc"/><stop offset="0.2971" stop-color="#00e3ef"/><stop offset="0.4919" stop-color="#00e5ec"/><stop offset="0.5113" stop-color="#00ebe4"/><stop offset="0.5225" stop-color="#02ecd2"/><stop offset="0.5612" stop-color="#1ac375"/><stop offset="0.5998" stop-color="#30b448"/><stop offset="0.7013" stop-color="#18c479"/><stop offset="0.7029" stop-color="#21be65"/><stop offset="0.7093" stop-color="#32b447"/><stop offset="0.7222" stop-color="#68bd30"/><stop offset="0.7271" stop-color="#83c726"/><stop offset="0.7544" stop-color="#70c02d"/><stop offset="0.7593" stop-color="#8aca24"/><stop offset="0.7738" stop-color="#e3ed01"/><stop offset="0.7802" stop-color="#fffe00"/><stop offset="0.7963" stop-color="#ffbd00"/><stop offset="0.9106" stop-color="#ffb700"/><stop offset="0.9992" stop-color="#ff9000"/></linearGradient><linearGradient id="g95" gradientUnits="objectBoundingBox"><stop offset="0.0008" stop-color="#d0e609"/><stop offset="0.2085" stop-color="#cde50a"/><stop offset="0.2311" stop-color="#69bd30"/><stop offset="0.2504" stop-color="#3db542"/><stop offset="0.2601" stop-color="#2cb64f"/><stop offset="0.2762" stop-color="#18c57a"/><stop offset="0.2955" stop-color="#00efde"/><stop offset="0.4903" stop-color="#00f0dc"/><stop offset="0.5064" stop-color="#01edd6"/><stop offset="0.5435" stop-color="#19c477"/><stop offset="0.5853" stop-color="#35b446"/><stop offset="0.6031" stop-color="#40b541"/><stop offset="0.6562" stop-color="#2db64f"/><stop offset="0.7013" stop-color="#21be66"/><stop offset="0.7029" stop-color="#2bb751"/><stop offset="0.7110" stop-color="#48b63d"/><stop offset="0.7174" stop-color="#64bb31"/><stop offset="0.7254" stop-color="#9bd11e"/><stop offset="0.7287" stop-color="#9ed21d"/><stop offset="0.7544" stop-color="#87c925"/><stop offset="0.7593" stop-color="#a1d31c"/><stop offset="0.7721" stop-color="#eaf200"/><stop offset="0.7770" stop-color="#ffff00"/><stop offset="0.7979" stop-color="#ffaf00"/><stop offset="0.9155" stop-color="#ffab00"/><stop offset="0.9992" stop-color="#ff9000"/></linearGradient><linearGradient id="g96" gradientUnits="objectBoundingBox"><stop offset="0.0008" stop-color="#bdde12"/><stop offset="0.2085" stop-color="#badd13"/><stop offset="0.2311" stop-color="#5eb933"/><stop offset="0.2601" stop-color="#2eb54c"/><stop offset="0.2810" stop-color="#17c67c"/><stop offset="0.2971" stop-color="#06e5c2"/><stop offset="0.4662" stop-color="#07e2bd"/><stop offset="0.5064" stop-color="#0addb2"/><stop offset="0.5290" stop-color="#19c376"/><stop offset="0.5692" stop-color="#35b446"/><stop offset="0.6014" stop-color="#52b739"/><stop offset="0.6916" stop-color="#2db64e"/><stop offset="0.7013" stop-color="#2ab854"/><stop offset="0.7029" stop-color="#38b544"/><stop offset="0.7142" stop-color="#69bd2f"/><stop offset="0.7254" stop-color="#b7dc14"/><stop offset="0.7319" stop-color="#b7dc14"/><stop offset="0.7544" stop-color="#9fd21d"/><stop offset="0.7576" stop-color="#aed818"/><stop offset="0.7689" stop-color="#eaf200"/><stop offset="0.7738" stop-color="#ffff00"/><stop offset="0.7915" stop-color="#ffbd00"/><stop offset="0.7979" stop-color="#ffa400"/><stop offset="0.9187" stop-color="#ffa000"/><stop offset="0.9992" stop-color="#ff9000"/></linearGradient><linearGradient id="g97" gradientUnits="objectBoundingBox"><stop offset="0.0008" stop-color="#a6d51a"/><stop offset="0.2085" stop-color="#a3d41b"/><stop offset="0.2279" stop-color="#5cb834"/><stop offset="0.2617" stop-color="#2eb54c"/><stop offset="0.2874" stop-color="#17c67d"/><stop offset="0.2971" stop-color="#0fd59f"/><stop offset="0.4678" stop-color="#10d298"/><stop offset="0.5064" stop-color="#13cd8d"/><stop offset="0.5177" stop-color="#1bc273"/><stop offset="0.5548" stop-color="#36b545"/><stop offset="0.5966" stop-color="#66bc30"/><stop offset="0.6047" stop-color="#66bc31"/><stop offset="0.6981" stop-color="#36b545"/><stop offset="0.7013" stop-color="#35b446"/><stop offset="0.7029" stop-color="#47b63e"/><stop offset="0.7093" stop-color="#63bb31"/><stop offset="0.7254" stop-color="#cfe609"/><stop offset="0.7303" stop-color="#d0e609"/><stop offset="0.7544" stop-color="#b7db14"/><stop offset="0.7609" stop-color="#d3e708"/><stop offset="0.7673" stop-color="#f2f700"/><stop offset="0.7705" stop-color="#ffff00"/><stop offset="0.7866" stop-color="#ffc700"/><stop offset="0.7979" stop-color="#ff9900"/><stop offset="0.9686" stop-color="#ff9300"/><stop offset="0.9992" stop-color="#ff9000"/></linearGradient><linearGradient id="g98" gradientUnits="objectBoundingBox"><stop offset="0.0008" stop-color="#8ecc22"/><stop offset="0.2085" stop-color="#8ccb23"/><stop offset="0.2262" stop-color="#58b836"/><stop offset="0.2665" stop-color="#2db64f"/><stop offset="0.2987" stop-color="#17c57b"/><stop offset="0.5048" stop-color="#1bc272"/><stop offset="0.5403" stop-color="#36b545"/><stop offset="0.5789" stop-color="#62bb32"/><stop offset="0.5998" stop-color="#89ca24"/><stop offset="0.6643" stop-color="#55b737"/><stop offset="0.7013" stop-color="#43b63f"/><stop offset="0.7029" stop-color="#56b737"/><stop offset="0.7077" stop-color="#73c12c"/><stop offset="0.7206" stop-color="#cbe40b"/><stop offset="0.7254" stop-color="#e7f000"/><stop offset="0.7367" stop-color="#e0ec02"/><stop offset="0.7544" stop-color="#cbe40c"/><stop offset="0.7641" stop-color="#f3f800"/><stop offset="0.7673" stop-color="#fffe00"/><stop offset="0.7834" stop-color="#ffc900"/><stop offset="0.7979" stop-color="#ff9100"/><stop offset="0.9992" stop-color="#ff9000"/></linearGradient><linearGradient id="g99" gradientUnits="objectBoundingBox"><stop offset="0.0008" stop-color="#77c32b"/><stop offset="0.2085" stop-color="#75c22b"/><stop offset="0.2230" stop-color="#55b737"/><stop offset="0.2713" stop-color="#2db64e"/><stop offset="0.3003" stop-color="#20bf69"/><stop offset="0.5048" stop-color="#24bc60"/><stop offset="0.5290" stop-color="#38b544"/><stop offset="0.5660" stop-color="#66bc31"/><stop offset="0.5998" stop-color="#a8d61a"/><stop offset="0.6884" stop-color="#58b836"/><stop offset="0.7013" stop-color="#51b739"/><stop offset="0.7029" stop-color="#6cbe2e"/><stop offset="0.7190" stop-color="#d9e905"/><stop offset="0.7254" stop-color="#fafc00"/><stop offset="0.7367" stop-color="#f3f700"/><stop offset="0.7544" stop-color="#deec03"/><stop offset="0.7641" stop-color="#fffd00"/><stop offset="0.7834" stop-color="#ffbe00"/><stop offset="0.7963" stop-color="#ff8f00"/><stop offset="0.8043" stop-color="#ff8a00"/><stop offset="0.9992" stop-color="#ff8f00"/></linearGradient><linearGradient id="g100" gradientUnits="objectBoundingBox"><stop offset="0.0008" stop-color="#5fb933"/><stop offset="0.2101" stop-color="#5bb834"/><stop offset="0.2375" stop-color="#43b63f"/><stop offset="0.2842" stop-color="#2cb64f"/><stop offset="0.3068" stop-color="#28b958"/><stop offset="0.5064" stop-color="#2db64e"/><stop offset="0.5548" stop-color="#62bb32"/><stop offset="0.5998" stop-color="#b7dc14"/><stop offset="0.7013" stop-color="#61ba32"/><stop offset="0.7029" stop-color="#87c925"/><stop offset="0.7190" stop-color="#e7f000"/><stop offset="0.7238" stop-color="#fdfe00"/><stop offset="0.7303" stop-color="#fffb00"/><stop offset="0.7432" stop-color="#f9fb00"/><stop offset="0.7560" stop-color="#f2f700"/><stop offset="0.7593" stop-color="#feff00"/><stop offset="0.7818" stop-color="#ffb900"/><stop offset="0.7947" stop-color="#ff8c00"/><stop offset="0.7995" stop-color="#ff8200"/><stop offset="0.9412" stop-color="#ff8700"/><stop offset="0.9992" stop-color="#ff8f00"/></linearGradient><linearGradient id="g101" gradientUnits="objectBoundingBox"><stop offset="0.0008" stop-color="#51b739"/><stop offset="0.2118" stop-color="#4eb73b"/><stop offset="0.2391" stop-color="#3eb541"/><stop offset="0.3180" stop-color="#31b447"/><stop offset="0.5081" stop-color="#3ab543"/><stop offset="0.5483" stop-color="#63bb32"/><stop offset="0.5998" stop-color="#b8dc14"/><stop offset="0.7013" stop-color="#7ac42a"/><stop offset="0.7029" stop-color="#a1d31c"/><stop offset="0.7190" stop-color="#edf300"/><stop offset="0.7238" stop-color="#ffff00"/><stop offset="0.7319" stop-color="#fffa00"/><stop offset="0.7560" stop-color="#fffd00"/><stop offset="0.7818" stop-color="#ffad00"/><stop offset="0.7931" stop-color="#ff8a00"/><stop offset="0.7995" stop-color="#ff7b00"/><stop offset="0.9251" stop-color="#ff7f00"/><stop offset="0.9992" stop-color="#ff8f00"/></linearGradient><linearGradient id="g102" gradientUnits="objectBoundingBox"><stop offset="0.0008" stop-color="#44b63f"/><stop offset="0.2150" stop-color="#40b541"/><stop offset="0.2601" stop-color="#39b544"/><stop offset="0.5064" stop-color="#3fb541"/><stop offset="0.5467" stop-color="#67bc30"/><stop offset="0.5998" stop-color="#b8dc14"/><stop offset="0.7013" stop-color="#93cd21"/><stop offset="0.7029" stop-color="#badd13"/><stop offset="0.7158" stop-color="#e9f100"/><stop offset="0.7238" stop-color="#fffe00"/><stop offset="0.7351" stop-color="#fff700"/><stop offset="0.7560" stop-color="#fff100"/><stop offset="0.7915" stop-color="#ff8900"/><stop offset="0.7995" stop-color="#ff7700"/><stop offset="0.9203" stop-color="#ff7b00"/><stop offset="0.9992" stop-color="#ff8f00"/></linearGradient><linearGradient id="g103" gradientUnits="objectBoundingBox"><stop offset="0.0008" stop-color="#37b545"/><stop offset="0.3438" stop-color="#38b544"/><stop offset="0.5097" stop-color="#42b640"/><stop offset="0.5467" stop-color="#67bc30"/><stop offset="0.6014" stop-color="#b8dc14"/><stop offset="0.7013" stop-color="#acd718"/><stop offset="0.7029" stop-color="#d0e609"/><stop offset="0.7174" stop-color="#f4f800"/><stop offset="0.7238" stop-color="#fffc00"/><stop offset="0.7576" stop-color="#ffe200"/><stop offset="0.7850" stop-color="#ff9300"/><stop offset="0.7995" stop-color="#ff7700"/><stop offset="0.9203" stop-color="#ff7b00"/><stop offset="0.9992" stop-color="#ff8f00"/></linearGradient><linearGradient id="g104" gradientUnits="objectBoundingBox"><stop offset="0.0008" stop-color="#30b448"/><stop offset="0.2681" stop-color="#34b446"/><stop offset="0.5097" stop-color="#42b640"/><stop offset="0.5467" stop-color="#67bc30"/><stop offset="0.6014" stop-color="#b8dc14"/><stop offset="0.7013" stop-color="#b8dc14"/><stop offset="0.7029" stop-color="#dbea04"/><stop offset="0.7222" stop-color="#fffe00"/><stop offset="0.7576" stop-color="#ffd700"/><stop offset="0.7834" stop-color="#ff9300"/><stop offset="0.7995" stop-color="#ff7700"/><stop offset="0.9203" stop-color="#ff7b00"/><stop offset="0.9992" stop-color="#ff8f00"/></linearGradient><linearGradient id="g105" gradientUnits="objectBoundingBox"><stop offset="0.0008" stop-color="#30b448"/><stop offset="0.2681" stop-color="#34b446"/><stop offset="0.5097" stop-color="#42b640"/><stop offset="0.5467" stop-color="#67bc30"/><stop offset="0.6014" stop-color="#b8dc14"/><stop offset="0.7013" stop-color="#b8dc14"/><stop offset="0.7029" stop-color="#dbea04"/><stop offset="0.7222" stop-color="#fffe00"/><stop offset="0.7593" stop-color="#ffc700"/><stop offset="0.7899" stop-color="#ff8800"/><stop offset="0.7995" stop-color="#ff7700"/><stop offset="0.9203" stop-color="#ff7b00"/><stop offset="0.9992" stop-color="#ff8f00"/></linearGradient><linearGradient id="g106" gradientUnits="objectBoundingBox"><stop offset="0.0008" stop-color="#30b448"/><stop offset="0.2681" stop-color="#34b446"/><stop offset="0.5097" stop-color="#42b640"/><stop offset="0.5467" stop-color="#67bc30"/><stop offset="0.6014" stop-color="#b8dc14"/><stop offset="0.7013" stop-color="#b8dc14"/><stop offset="0.7029" stop-color="#dbea04"/><stop offset="0.7222" stop-color="#fffe00"/><stop offset="0.7641" stop-color="#ffb700"/><stop offset="0.7995" stop-color="#ff7700"/><stop offset="0.9219" stop-color="#ff7b00"/><stop offset="0.9992" stop-color="#ff8d00"/></linearGradient><linearGradient id="g107" gradientUnits="objectBoundingBox"><stop offset="0.0008" stop-color="#30b448"/><stop offset="0.2681" stop-color="#34b446"/><stop offset="0.5097" stop-color="#42b640"/><stop offset="0.5467" stop-color="#67bc30"/><stop offset="0.6014" stop-color="#b8dc14"/><stop offset="0.7013" stop-color="#b8dc14"/><stop offset="0.7029" stop-color="#dbea04"/><stop offset="0.7222" stop-color="#fffe00"/><stop offset="0.7641" stop-color="#ffb700"/><stop offset="0.7995" stop-color="#ff7700"/><stop offset="0.9235" stop-color="#ff7b00"/><stop offset="0.9992" stop-color="#ff8b00"/></linearGradient></defs><rect x="0" y="0" width="621" height="10" fill="url(#g0)"/><rect x="0" y="10" width="621" height="10" fill="url(#g1)"/><rect x="0" y="20" width="621" height="10" fill="url(#g2)"/><rect x="0" y="30" width="621" height="10" fill="url(#g3)"/><rect x="0" y="40" width="621" height="4" fill="url(#g4)"/><rect x="0" y="44" width="621" height="3" fill="url(#g5)"/><rect x="0" y="47" width="621" height="1" fill="url(#g6)"/><rect x="0" y="48" width="621" height="1" fill="url(#g7)"/><rect x="0" y="49" width="621" height="1" fill="url(#g8)"/><rect x="0" y="50" width="621" height="1" fill="url(#g9)"/><rect x="0" y="51" width="621" height="1" fill="url(#g10)"/><rect x="0" y="52" width="621" height="1" fill="url(#g11)"/><rect x="0" y="53" width="621" height="1" fill="url(#g12)"/><rect x="0" y="54" width="621" height="1" fill="url(#g13)"/><rect x="0" y="55" width="621" height="1" fill="url(#g14)"/><rect x="0" y="56" width="621" height="1" fill="url(#g15)"/><rect x="0" y="57" width="621" height="1" fill="url(#g16)"/><rect x="0" y="58" width="621" height="1" fill="url(#g17)"/><rect x="0" y="59" width="621" height="1" fill="url(#g18)"/><rect x="0" y="60" width="621" height="1" fill="url(#g19)"/><rect x="0" y="61" width="621" height="1" fill="url(#g20)"/><rect x="0" y="62" width="621" height="1" fill="url(#g21)"/><rect x="0" y="63" width="621" height="1" fill="url(#g22)"/><rect x="0" y="64" width="621" height="1" fill="url(#g23)"/><rect x="0" y="65" width="621" height="1" fill="url(#g24)"/><rect x="0" y="66" width="621" height="1" fill="url(#g25)"/><rect x="0" y="67" width="621" height="1" fill="url(#g26)"/><rect x="0" y="68" width="621" height="1" fill="url(#g27)"/><rect x="0" y="69" width="621" height="3" fill="url(#g28)"/><rect x="0" y="72" width="621" height="3" fill="url(#g29)"/><rect x="0" y="75" width="621" height="3" fill="url(#g30)"/><rect x="0" y="78" width="621" height="2" fill="url(#g31)"/><rect x="0" y="80" width="621" height="2" fill="url(#g32)"/><rect x="0" y="82" width="621" height="2" fill="url(#g33)"/><rect x="0" y="84" width="621" height="2" fill="url(#g34)"/><rect x="0" y="86" width="621" height="2" fill="url(#g35)"/><rect x="0" y="88" width="621" height="1" fill="url(#g36)"/><rect x="0" y="89" width="621" height="1" fill="url(#g37)"/><rect x="0" y="90" width="621" height="1" fill="url(#g38)"/><rect x="0" y="91" width="621" height="1" fill="url(#g39)"/><rect x="0" y="92" width="621" height="1" fill="url(#g40)"/><rect x="0" y="93" width="621" height="1" fill="url(#g41)"/><rect x="0" y="94" width="621" height="1" fill="url(#g42)"/><rect x="0" y="95" width="621" height="1" fill="url(#g43)"/><rect x="0" y="96" width="621" height="1" fill="url(#g44)"/><rect x="0" y="97" width="621" height="1" fill="url(#g45)"/><rect x="0" y="98" width="621" height="1" fill="url(#g46)"/><rect x="0" y="99" width="621" height="1" fill="url(#g47)"/><rect x="0" y="100" width="621" height="1" fill="url(#g48)"/><rect x="0" y="101" width="621" height="1" fill="url(#g49)"/><rect x="0" y="102" width="621" height="1" fill="url(#g50)"/><rect x="0" y="103" width="621" height="1" fill="url(#g51)"/><rect x="0" y="104" width="621" height="1" fill="url(#g52)"/><rect x="0" y="105" width="621" height="1" fill="url(#g53)"/><rect x="0" y="106" width="621" height="1" fill="url(#g54)"/><rect x="0" y="107" width="621" height="1" fill="url(#g55)"/><rect x="0" y="108" width="621" height="1" fill="url(#g56)"/><rect x="0" y="109" width="621" height="1" fill="url(#g57)"/><rect x="0" y="110" width="621" height="1" fill="url(#g58)"/><rect x="0" y="111" width="621" height="1" fill="url(#g59)"/><rect x="0" y="112" width="621" height="1" fill="url(#g60)"/><rect x="0" y="113" width="621" height="1" fill="url(#g61)"/><rect x="0" y="114" width="621" height="1" fill="url(#g62)"/><rect x="0" y="115" width="621" height="2" fill="url(#g63)"/><rect x="0" y="117" width="621" height="2" fill="url(#g64)"/><rect x="0" y="119" width="621" height="2" fill="url(#g65)"/><rect x="0" y="121" width="621" height="2" fill="url(#g66)"/><rect x="0" y="123" width="621" height="2" fill="url(#g67)"/><rect x="0" y="125" width="621" height="2" fill="url(#g68)"/><rect x="0" y="127" width="621" height="2" fill="url(#g69)"/><rect x="0" y="129" width="621" height="2" fill="url(#g70)"/><rect x="0" y="131" width="621" height="2" fill="url(#g71)"/><rect x="0" y="133" width="621" height="2" fill="url(#g72)"/><rect x="0" y="135" width="621" height="2" fill="url(#g73)"/><rect x="0" y="137" width="621" height="5" fill="url(#g74)"/><rect x="0" y="142" width="621" height="5" fill="url(#g75)"/><rect x="0" y="147" width="621" height="5" fill="url(#g76)"/><rect x="0" y="152" width="621" height="5" fill="url(#g77)"/><rect x="0" y="157" width="621" height="5" fill="url(#g78)"/><rect x="0" y="162" width="621" height="1" fill="url(#g79)"/><rect x="0" y="163" width="621" height="1" fill="url(#g80)"/><rect x="0" y="164" width="621" height="1" fill="url(#g81)"/><rect x="0" y="165" width="621" height="1" fill="url(#g82)"/><rect x="0" y="166" width="621" height="1" fill="url(#g83)"/><rect x="0" y="167" width="621" height="1" fill="url(#g84)"/><rect x="0" y="168" width="621" height="1" fill="url(#g85)"/><rect x="0" y="169" width="621" height="1" fill="url(#g86)"/><rect x="0" y="170" width="621" height="1" fill="url(#g87)"/><rect x="0" y="171" width="621" height="1" fill="url(#g88)"/><rect x="0" y="172" width="621" height="1" fill="url(#g89)"/><rect x="0" y="173" width="621" height="1" fill="url(#g90)"/><rect x="0" y="174" width="621" height="1" fill="url(#g91)"/><rect x="0" y="175" width="621" height="1" fill="url(#g92)"/><rect x="0" y="176" width="621" height="1" fill="url(#g93)"/><rect x="0" y="177" width="621" height="1" fill="url(#g94)"/><rect x="0" y="178" width="621" height="1" fill="url(#g95)"/><rect x="0" y="179" width="621" height="1" fill="url(#g96)"/><rect x="0" y="180" width="621" height="1" fill="url(#g97)"/><rect x="0" y="181" width="621" height="1" fill="url(#g98)"/><rect x="0" y="182" width="621" height="1" fill="url(#g99)"/><rect x="0" y="183" width="621" height="1" fill="url(#g100)"/><rect x="0" y="184" width="621" height="1" fill="url(#g101)"/><rect x="0" y="185" width="621" height="1" fill="url(#g102)"/><rect x="0" y="186" width="621" height="1" fill="url(#g103)"/><rect x="0" y="187" width="621" height="1" fill="url(#g104)"/><rect x="0" y="188" width="621" height="1" fill="url(#g105)"/><rect x="0" y="189" width="621" height="40" fill="url(#g106)"/><rect x="0" y="229" width="621" height="9" fill="url(#g107)"/></svg>
<svg style="position:absolute;left:0;top:0" width="748" height="486"><defs><linearGradient id="lg0" x1="0" y1="0" x2="0" y2="1"><stop offset="0" stop-color="rgb(255, 0, 0)"/><stop offset="1" stop-color="rgb(255, 80, 0)"/></linearGradient><linearGradient id="lg1" x1="0" y1="0" x2="0" y2="1"><stop offset="0" stop-color="rgb(255, 106, 0)"/><stop offset="1" stop-color="rgb(255, 150, 0)"/></linearGradient><linearGradient id="lg2" x1="0" y1="0" x2="0" y2="1"><stop offset="0" stop-color="rgb(255, 160, 0)"/><stop offset="1" stop-color="rgb(255, 204, 0)"/></linearGradient><linearGradient id="lg3" x1="0" y1="0" x2="0" y2="1"><stop offset="0" stop-color="rgb(255, 224, 0)"/><stop offset="1" stop-color="rgb(250, 250, 0)"/></linearGradient><linearGradient id="lg4" x1="0" y1="0" x2="0" y2="1"><stop offset="0" stop-color="rgb(200, 220, 0)"/><stop offset="1" stop-color="rgb(80, 176, 48)"/></linearGradient><linearGradient id="lg5" x1="0" y1="0" x2="0" y2="1"><stop offset="0" stop-color="rgb(72, 176, 64)"/><stop offset="1" stop-color="rgb(40, 176, 80)"/></linearGradient><linearGradient id="lg6" x1="0" y1="0" x2="0" y2="1"><stop offset="0" stop-color="rgb(32, 200, 144)"/><stop offset="1" stop-color="rgb(0, 240, 224)"/></linearGradient><linearGradient id="lg7" x1="0" y1="0" x2="0" y2="1"><stop offset="0" stop-color="rgb(0, 224, 255)"/><stop offset="1" stop-color="rgb(0, 128, 255)"/></linearGradient><linearGradient id="lg8" x1="0" y1="0" x2="0" y2="1"><stop offset="0" stop-color="rgb(0, 64, 255)"/><stop offset="1" stop-color="rgb(24, 24, 224)"/></linearGradient><linearGradient id="lg9" x1="0" y1="0" x2="0" y2="1"><stop offset="0" stop-color="rgb(64, 48, 168)"/><stop offset="1" stop-color="rgb(16, 16, 24)"/></linearGradient><filter id="sh" x="-50%" y="-50%" width="200%" height="200%"><feGaussianBlur stdDeviation="0.8"/></filter></defs><rect x="693" y="183" width="9" height="20" fill="url(#lg0)"/><rect x="693" y="203" width="9" height="20" fill="url(#lg1)"/><rect x="693" y="223" width="9" height="20" fill="url(#lg2)"/><rect x="693" y="243" width="9" height="20" fill="url(#lg3)"/><rect x="693" y="263" width="9" height="20" fill="url(#lg4)"/><rect x="693" y="283" width="9" height="20" fill="url(#lg5)"/><rect x="693" y="303" width="9" height="20" fill="url(#lg6)"/><rect x="693" y="323" width="9" height="20" fill="url(#lg7)"/><rect x="693" y="343" width="9" height="20" fill="url(#lg8)"/><rect x="693" y="363" width="9" height="20" fill="url(#lg9)"/><rect x="692.5" y="182.5" width="10" height="200" fill="none" stroke="#000" stroke-width="1"/><line x1="693" y1="182.5" x2="707" y2="182.5" stroke="#000" stroke-width="1"/><line x1="693" y1="202.5" x2="707" y2="202.5" stroke="#000" stroke-width="1"/><line x1="693" y1="222.5" x2="707" y2="222.5" stroke="#000" stroke-width="1"/><line x1="693" y1="242.5" x2="707" y2="242.5" stroke="#000" stroke-width="1"/><line x1="693" y1="262.5" x2="707" y2="262.5" stroke="#000" stroke-width="1"/><line x1="693" y1="282.5" x2="707" y2="282.5" stroke="#000" stroke-width="1"/><line x1="693" y1="302.5" x2="707" y2="302.5" stroke="#000" stroke-width="1"/><line x1="693" y1="322.5" x2="707" y2="322.5" stroke="#000" stroke-width="1"/><line x1="693" y1="342.5" x2="707" y2="342.5" stroke="#000" stroke-width="1"/><line x1="693" y1="362.5" x2="707" y2="362.5" stroke="#000" stroke-width="1"/><line x1="693" y1="382.5" x2="707" y2="382.5" stroke="#000" stroke-width="1"/><rect x="61.5" y="203.5" width="620" height="236" fill="none" stroke="#000" stroke-width="1"/><rect x="61" y="203" width="2" height="238" fill="#000"/><rect x="61" y="439" width="621" height="2" fill="#000"/><rect x="57" y="440" width="4" height="1" fill="#000"/><rect x="57" y="392" width="4" height="1" fill="#000"/><rect x="57" y="345" width="4" height="1" fill="#000"/><rect x="57" y="298" width="4" height="1" fill="#000"/><rect x="57" y="250" width="4" height="1" fill="#000"/><rect x="57" y="203" width="4" height="1" fill="#000"/><rect x="62" y="441" width="1" height="3" fill="#000"/><rect x="186" y="441" width="1" height="3" fill="#000"/><rect x="310" y="441" width="1" height="3" fill="#000"/><rect x="434" y="441" width="1" height="3" fill="#000"/><rect x="558" y="441" width="1" height="3" fill="#000"/><rect x="682" y="441" width="1" height="3" fill="#000"/><clipPath id="pc"><rect x="61" y="203" width="621" height="237"/></clipPath><g clip-path="url(#pc)"><path d="M156 247.3L160.7 252L156 256.7L151.3 252Z" fill="none" stroke="#2a1a00" stroke-opacity="0.5" stroke-width="1.2" filter="url(#sh)"/><path d="M155 246.3L159.7 251L155 255.7L150.3 251Z" fill="none" stroke="#fafafa" stroke-width="1.1"/><path d="M156 294.3L160.7 299L156 303.7L151.3 299Z" fill="none" stroke="#2a1a00" stroke-opacity="0.5" stroke-width="1.2" filter="url(#sh)"/><path d="M155 293.3L159.7 298L155 302.7L150.3 298Z" fill="none" stroke="#fafafa" stroke-width="1.1"/><path d="M156 341.3L160.7 346L156 350.7L151.3 346Z" fill="none" stroke="#2a1a00" stroke-opacity="0.5" stroke-width="1.2" filter="url(#sh)"/><path d="M155 340.3L159.7 345L155 349.7L150.3 345Z" fill="none" stroke="#fafafa" stroke-width="1.1"/><path d="M156 388.3L160.7 393L156 397.7L151.3 393Z" fill="none" stroke="#2a1a00" stroke-opacity="0.5" stroke-width="1.2" filter="url(#sh)"/><path d="M155 387.3L159.7 392L155 396.7L150.3 392Z" fill="none" stroke="#fafafa" stroke-width="1.1"/><path d="M249 247.3L253.7 252L249 256.7L244.3 252Z" fill="none" stroke="#2a1a00" stroke-opacity="0.5" stroke-width="1.2" filter="url(#sh)"/><path d="M248 246.3L252.7 251L248 255.7L243.3 251Z" fill="none" stroke="#fafafa" stroke-width="1.1"/><path d="M249 294.3L253.7 299L249 303.7L244.3 299Z" fill="none" stroke="#2a1a00" stroke-opacity="0.5" stroke-width="1.2" filter="url(#sh)"/><path d="M248 293.3L252.7 298L248 302.7L243.3 298Z" fill="none" stroke="#fafafa" stroke-width="1.1"/><path d="M249 341.3L253.7 346L249 350.7L244.3 346Z" fill="none" stroke="#2a1a00" stroke-opacity="0.5" stroke-width="1.2" filter="url(#sh)"/><path d="M248 340.3L252.7 345L248 349.7L243.3 345Z" fill="none" stroke="#fafafa" stroke-width="1.1"/><path d="M249 388.3L253.7 393L249 397.7L244.3 393Z" fill="none" stroke="#2a1a00" stroke-opacity="0.5" stroke-width="1.2" filter="url(#sh)"/><path d="M248 387.3L252.7 392L248 396.7L243.3 392Z" fill="none" stroke="#fafafa" stroke-width="1.1"/><path d="M342 247.3L346.7 252L342 256.7L337.3 252Z" fill="none" stroke="#2a1a00" stroke-opacity="0.5" stroke-width="1.2" filter="url(#sh)"/><path d="M341 246.3L345.7 251L341 255.7L336.3 251Z" fill="none" stroke="#fafafa" stroke-width="1.1"/><path d="M342 294.3L346.7 299L342 303.7L337.3 299Z" fill="none" stroke="#2a1a00" stroke-opacity="0.5" stroke-width="1.2" filter="url(#sh)"/><path d="M341 293.3L345.7 298L341 302.7L336.3 298Z" fill="none" stroke="#fafafa" stroke-width="1.1"/><path d="M342 341.3L346.7 346L342 350.7L337.3 346Z" fill="none" stroke="#2a1a00" stroke-opacity="0.5" stroke-width="1.2" filter="url(#sh)"/><path d="M341 340.3L345.7 345L341 349.7L336.3 345Z" fill="none" stroke="#fafafa" stroke-width="1.1"/><path d="M342 388.3L346.7 393L342 397.7L337.3 393Z" fill="none" stroke="#2a1a00" stroke-opacity="0.5" stroke-width="1.2" filter="url(#sh)"/><path d="M341 387.3L345.7 392L341 396.7L336.3 392Z" fill="none" stroke="#fafafa" stroke-width="1.1"/><path d="M434 247.3L438.7 252L434 256.7L429.3 252Z" fill="none" stroke="#2a1a00" stroke-opacity="0.5" stroke-width="1.2" filter="url(#sh)"/><path d="M433 246.3L437.7 251L433 255.7L428.3 251Z" fill="none" stroke="#fafafa" stroke-width="1.1"/><path d="M434 294.3L438.7 299L434 303.7L429.3 299Z" fill="none" stroke="#2a1a00" stroke-opacity="0.5" stroke-width="1.2" filter="url(#sh)"/><path d="M433 293.3L437.7 298L433 302.7L428.3 298Z" fill="none" stroke="#fafafa" stroke-width="1.1"/><path d="M434 341.3L438.7 346L434 350.7L429.3 346Z" fill="none" stroke="#2a1a00" stroke-opacity="0.5" stroke-width="1.2" filter="url(#sh)"/><path d="M433 340.3L437.7 345L433 349.7L428.3 345Z" fill="none" stroke="#fafafa" stroke-width="1.1"/><path d="M434 388.3L438.7 393L434 397.7L429.3 393Z" fill="none" stroke="#2a1a00" stroke-opacity="0.5" stroke-width="1.2" filter="url(#sh)"/><path d="M433 387.3L437.7 392L433 396.7L428.3 392Z" fill="none" stroke="#fafafa" stroke-width="1.1"/><path d="M558 294.3L562.7 299L558 303.7L553.3 299Z" fill="none" stroke="#2a1a00" stroke-opacity="0.5" stroke-width="1.2" filter="url(#sh)"/><path d="M557 293.3L561.7 298L557 302.7L552.3 298Z" fill="none" stroke="#fafafa" stroke-width="1.1"/><path d="M558 341.3L562.7 346L558 350.7L553.3 346Z" fill="none" stroke="#2a1a00" stroke-opacity="0.5" stroke-width="1.2" filter="url(#sh)"/><path d="M557 340.3L561.7 345L557 349.7L552.3 345Z" fill="none" stroke="#fafafa" stroke-width="1.1"/><path d="M558 388.3L562.7 393L558 397.7L553.3 393Z" fill="none" stroke="#2a1a00" stroke-opacity="0.5" stroke-width="1.2" filter="url(#sh)"/><path d="M557 387.3L561.7 392L557 396.7L552.3 392Z" fill="none" stroke="#fafafa" stroke-width="1.1"/><path d="M682 341.3L686.7 346L682 350.7L677.3 346Z" fill="none" stroke="#2a1a00" stroke-opacity="0.5" stroke-width="1.2" filter="url(#sh)"/><path d="M681 340.3L685.7 345L681 349.7L676.3 345Z" fill="none" stroke="#fafafa" stroke-width="1.1"/></g></svg>
<div class="tl" style="right:692px;top:434.55px;letter-spacing:0.3px">0.00</div>
<div class="tl" style="right:692px;top:387.25px;letter-spacing:0.3px">1.00</div>
<div class="tl" style="right:692px;top:339.95px;letter-spacing:0.3px">2.00</div>
<div class="tl" style="right:692px;top:292.65px;letter-spacing:0.3px">3.00</div>
<div class="tl" style="right:692px;top:245.35px;letter-spacing:0.3px">4.00</div>
<div class="tl" style="right:692px;top:198.05px;letter-spacing:0.3px">5.00</div>
<div class="tl" style="left:31.5px;width:60px;text-align:center;top:445px;letter-spacing:0.3px">0.00</div>
<div class="tl" style="left:155.5px;width:60px;text-align:center;top:445px;letter-spacing:0.3px">8.00</div>
<div class="tl" style="left:279.5px;width:60px;text-align:center;top:445px;letter-spacing:0.3px">16.00</div>
<div class="tl" style="left:403.5px;width:60px;text-align:center;top:445px;letter-spacing:0.3px">24.00</div>
<div class="tl" style="left:527.5px;width:60px;text-align:center;top:445px;letter-spacing:0.3px">32.00</div>
<div class="tl" style="left:651.5px;width:60px;text-align:center;top:445px;letter-spacing:0.3px">40.00</div>
<div class="tl" style="left:709px;top:177.85px;letter-spacing:0.3px">44,000</div>
<div class="tl" style="left:709px;top:197.85px;letter-spacing:0.3px">43,000</div>
<div class="tl" style="left:709px;top:217.85px;letter-spacing:0.3px">42,000</div>
<div class="tl" style="left:709px;top:237.85px;letter-spacing:0.3px">41,000</div>
<div class="tl" style="left:709px;top:257.85px;letter-spacing:0.3px">40,000</div>
<div class="tl" style="left:709px;top:277.85px;letter-spacing:0.3px">39,000</div>
<div class="tl" style="left:709px;top:297.85px;letter-spacing:0.3px">38,000</div>
<div class="tl" style="left:709px;top:317.85px;letter-spacing:0.3px">37,000</div>
<div class="tl" style="left:709px;top:337.85px;letter-spacing:0.3px">36,000</div>
<div class="tl" style="left:709px;top:357.85px;letter-spacing:0.3px">35,000</div>
<div class="tl" style="left:709px;top:377.85px;letter-spacing:0.3px">34,000</div>
<div class="lb" style="transform:scaleX(0.933);left:330px;top:468px;font-size:12px;color:#141414">L16P: Strings (#)</div>
<div class="lb" style="left:3px;top:368px;font-size:12px;color:#141414;transform-origin:0 0;transform:rotate(-90deg) scaleX(0.943)">PV: Capacity (kW)</div>
</body></html>
